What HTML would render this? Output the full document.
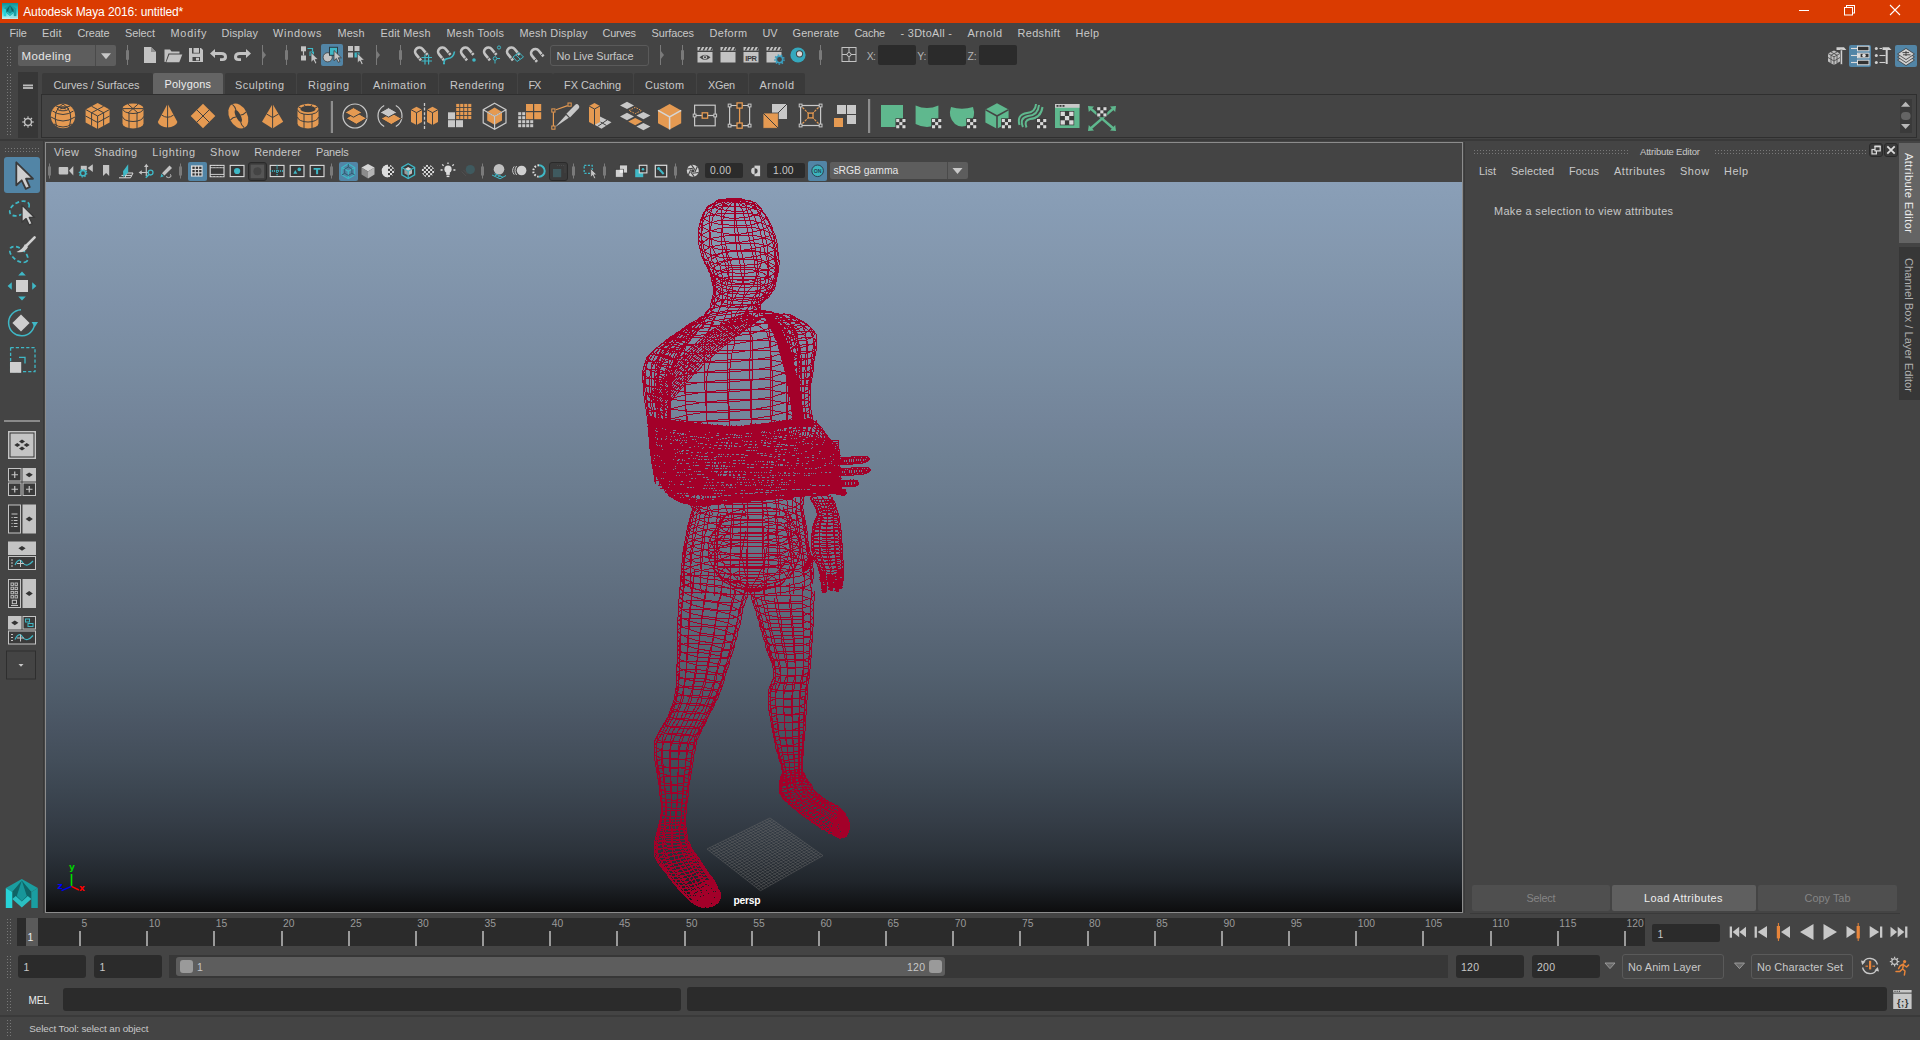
<!DOCTYPE html>
<html><head><meta charset="utf-8"><title>Autodesk Maya 2016: untitled*</title>
<style>
html,body{margin:0;padding:0;background:#444;overflow:hidden}
#app{position:relative;width:1920px;height:1040px;background:#444;overflow:hidden;font-family:"Liberation Sans",sans-serif}
#app div{position:absolute;box-sizing:border-box}
.t{position:absolute;white-space:pre;margin:0;padding:0}
#ov{position:absolute;left:0;top:0}
</style></head><body>
<div id="app">
<div style="left:0px;top:0px;width:1920px;height:23px;background:#da3b01;"></div>
<div style="left:6px;top:46px;width:5px;height:20px;background-image:radial-gradient(circle,#787878 0.6px,transparent 0.9px);background-size:3px 3px;"></div>
<div style="left:18px;top:45px;width:98px;height:21px;background:#5d5d5d;border-radius:2px;"></div>
<div style="left:95px;top:45px;width:1px;height:21px;background:#4a4a4a;"></div>
<div style="left:550px;top:45px;width:99px;height:21px;background:#444;border:1px solid #5a5a5a;border-radius:3px;"></div>
<div style="left:878px;top:45px;width:38px;height:20px;background:#2b2b2b;border-radius:2px;"></div>
<div style="left:928px;top:45px;width:38px;height:20px;background:#2b2b2b;border-radius:2px;"></div>
<div style="left:979px;top:45px;width:38px;height:20px;background:#2b2b2b;border-radius:2px;"></div>
<div style="left:321px;top:44px;width:22px;height:22px;background:#5285a6;border-radius:2px;"></div>
<div style="left:1849px;top:45px;width:22px;height:22px;background:#5285a6;border-radius:2px;"></div>
<div style="left:1895px;top:45px;width:22px;height:22px;background:#5285a6;border-radius:2px;"></div>
<div style="left:6px;top:73px;width:5px;height:63px;background-image:radial-gradient(circle,#787878 0.6px,transparent 0.9px);background-size:3px 3px;"></div>
<div style="left:18px;top:72px;width:20px;height:66px;background:#373737;"></div>
<div style="left:41.5px;top:73px;width:111.2px;height:22px;background:#3a3a3a;border-radius:2px 2px 0 0;"></div>
<div style="left:153px;top:73px;width:70px;height:22px;background:#646464;border-radius:2px 2px 0 0;"></div>
<div style="left:224.5px;top:73px;width:71.2px;height:22px;background:#3a3a3a;border-radius:2px 2px 0 0;"></div>
<div style="left:296.5px;top:73px;width:64.2px;height:22px;background:#3a3a3a;border-radius:2px 2px 0 0;"></div>
<div style="left:361.5px;top:73px;width:76.2px;height:22px;background:#3a3a3a;border-radius:2px 2px 0 0;"></div>
<div style="left:438.5px;top:73px;width:78.2px;height:22px;background:#3a3a3a;border-radius:2px 2px 0 0;"></div>
<div style="left:517.5px;top:73px;width:35.2px;height:22px;background:#3a3a3a;border-radius:2px 2px 0 0;"></div>
<div style="left:552.5px;top:73px;width:80.2px;height:22px;background:#3a3a3a;border-radius:2px 2px 0 0;"></div>
<div style="left:633.5px;top:73px;width:62.2px;height:22px;background:#3a3a3a;border-radius:2px 2px 0 0;"></div>
<div style="left:696.5px;top:73px;width:51.2px;height:22px;background:#3a3a3a;border-radius:2px 2px 0 0;"></div>
<div style="left:748.5px;top:73px;width:56.2px;height:22px;background:#3a3a3a;border-radius:2px 2px 0 0;"></div>
<div style="left:41px;top:94px;width:1876px;height:44px;background:#444444;border:1px solid #2f2f2f;"></div>
<div style="left:0px;top:139px;width:1920px;height:2px;background:#393939;"></div>
<div style="left:1900px;top:99px;width:12px;height:34px;background:#3a3a3a;"></div>
<div style="left:4px;top:147px;width:36px;height:6px;background-image:radial-gradient(circle,#787878 0.6px,transparent 0.9px);background-size:3px 3px;"></div>
<div style="left:4px;top:157px;width:36px;height:36px;background:#5285a6;border-radius:3px;"></div>
<div style="left:4px;top:420px;width:36px;height:2px;background:#8a8a8a;"></div>
<div style="left:43px;top:141px;width:1px;height:772px;background:#383838;"></div>
<div style="left:45px;top:142px;width:1418px;height:771px;background:#444444;border:1px solid #8c8c8c;"></div>
<div style="left:188px;top:162px;width:19px;height:19px;background:#5285a6;border-radius:2px;"></div>
<div style="left:339px;top:162px;width:19px;height:19px;background:#5285a6;border-radius:2px;"></div>
<div style="left:808px;top:161px;width:19px;height:20px;background:#5285a6;border-radius:2px;"></div>
<div style="left:248px;top:162px;width:19px;height:19px;background:#3a3a3a;border:1px solid #2a2a2a;border-radius:3px;"></div>
<div style="left:549px;top:162px;width:19px;height:19px;background:#3a3a3a;border:1px solid #2a2a2a;border-radius:3px;"></div>
<div style="left:705px;top:163px;width:38px;height:15px;background:#2b2b2b;border-radius:2px;"></div>
<div style="left:767px;top:163px;width:38px;height:15px;background:#2b2b2b;border-radius:2px;"></div>
<div style="left:830px;top:162px;width:138px;height:17px;background:#5d5d5d;border-radius:2px;"></div>
<div style="left:947px;top:162px;width:1px;height:17px;background:#4a4a4a;"></div>
<div style="left:46px;top:182px;width:1416px;height:730px;background:linear-gradient(to bottom,rgb(138,159,183) 0.00%,rgb(135,156,180) 4.17%,rgb(133,153,176) 8.33%,rgb(130,150,172) 12.50%,rgb(127,146,169) 16.67%,rgb(124,143,165) 20.83%,rgb(121,140,161) 25.00%,rgb(118,136,157) 29.17%,rgb(115,132,153) 33.33%,rgb(111,129,148) 37.50%,rgb(108,125,144) 41.67%,rgb(104,121,139) 45.83%,rgb(101,116,134) 50.00%,rgb(97,112,129) 54.17%,rgb(93,107,124) 58.33%,rgb(88,102,118) 62.50%,rgb(83,97,112) 66.67%,rgb(78,91,105) 70.83%,rgb(73,84,98) 75.00%,rgb(67,78,90) 79.17%,rgb(60,70,81) 83.33%,rgb(53,61,71) 87.50%,rgb(44,51,59) 91.67%,rgb(32,37,43) 95.83%,rgb(13,13,14) 100.00%);"></div>
<div style="left:1464px;top:142px;width:1px;height:771px;background:#3a3a3a;"></div>
<div style="left:1473px;top:149px;width:155px;height:6px;background-image:radial-gradient(circle,#787878 0.6px,transparent 0.9px);background-size:3px 3px;"></div>
<div style="left:1714px;top:149px;width:152px;height:6px;background-image:radial-gradient(circle,#787878 0.6px,transparent 0.9px);background-size:3px 3px;"></div>
<div style="left:1869px;top:143px;width:14px;height:14px;background:#3a3a3a;border:1px solid #2a2a2a;border-radius:3px;"></div>
<div style="left:1884px;top:143px;width:14px;height:14px;background:#3a3a3a;border:1px solid #2a2a2a;border-radius:3px;"></div>
<div style="left:1472px;top:885px;width:138px;height:26px;background:#4f4f4f;border-radius:2px;"></div>
<div style="left:1612px;top:885px;width:144px;height:26px;background:#5f5f5f;border-radius:2px;"></div>
<div style="left:1758px;top:885px;width:139px;height:26px;background:#4f4f4f;border-radius:2px;"></div>
<div style="left:1470px;top:913px;width:430px;height:1px;background:#3a3a3a;"></div>
<div style="left:1899px;top:143px;width:21px;height:100px;background:#646464;"></div>
<div style="left:1899px;top:247px;width:21px;height:153px;background:#373737;"></div>
<div style="left:6px;top:918px;width:5px;height:28px;background-image:radial-gradient(circle,#787878 0.6px,transparent 0.9px);background-size:3px 3px;"></div>
<div style="left:17px;top:918px;width:1628px;height:28px;background:#2b2b2b;"></div>
<div style="left:26px;top:918px;width:12px;height:28px;background:#5a5a5a;"></div>
<div style="left:79px;top:931px;width:2px;height:15px;background:#9a9a9a;"></div>
<div style="left:146px;top:931px;width:2px;height:15px;background:#9a9a9a;"></div>
<div style="left:213px;top:931px;width:2px;height:15px;background:#9a9a9a;"></div>
<div style="left:281px;top:931px;width:2px;height:15px;background:#9a9a9a;"></div>
<div style="left:348px;top:931px;width:2px;height:15px;background:#9a9a9a;"></div>
<div style="left:415px;top:931px;width:2px;height:15px;background:#9a9a9a;"></div>
<div style="left:482px;top:931px;width:2px;height:15px;background:#9a9a9a;"></div>
<div style="left:549px;top:931px;width:2px;height:15px;background:#9a9a9a;"></div>
<div style="left:616px;top:931px;width:2px;height:15px;background:#9a9a9a;"></div>
<div style="left:684px;top:931px;width:2px;height:15px;background:#9a9a9a;"></div>
<div style="left:751px;top:931px;width:2px;height:15px;background:#9a9a9a;"></div>
<div style="left:818px;top:931px;width:2px;height:15px;background:#9a9a9a;"></div>
<div style="left:885px;top:931px;width:2px;height:15px;background:#9a9a9a;"></div>
<div style="left:952px;top:931px;width:2px;height:15px;background:#9a9a9a;"></div>
<div style="left:1019px;top:931px;width:2px;height:15px;background:#9a9a9a;"></div>
<div style="left:1087px;top:931px;width:2px;height:15px;background:#9a9a9a;"></div>
<div style="left:1154px;top:931px;width:2px;height:15px;background:#9a9a9a;"></div>
<div style="left:1221px;top:931px;width:2px;height:15px;background:#9a9a9a;"></div>
<div style="left:1288px;top:931px;width:2px;height:15px;background:#9a9a9a;"></div>
<div style="left:1355px;top:931px;width:2px;height:15px;background:#9a9a9a;"></div>
<div style="left:1422px;top:931px;width:2px;height:15px;background:#9a9a9a;"></div>
<div style="left:1490px;top:931px;width:2px;height:15px;background:#9a9a9a;"></div>
<div style="left:1557px;top:931px;width:2px;height:15px;background:#9a9a9a;"></div>
<div style="left:1624px;top:931px;width:2px;height:15px;background:#9a9a9a;"></div>
<div style="left:1652px;top:924px;width:68px;height:18px;background:#2b2b2b;border-radius:2px;"></div>
<div style="left:6px;top:955px;width:5px;height:23px;background-image:radial-gradient(circle,#787878 0.6px,transparent 0.9px);background-size:3px 3px;"></div>
<div style="left:18px;top:955px;width:68px;height:23px;background:#2b2b2b;border-radius:3px;"></div>
<div style="left:94px;top:955px;width:68px;height:23px;background:#2b2b2b;border-radius:3px;"></div>
<div style="left:169px;top:955px;width:1279px;height:23px;background:#373737;"></div>
<div style="left:176px;top:957px;width:769px;height:19px;background:#5d5d5d;border-radius:3px;"></div>
<div style="left:180px;top:960px;width:13px;height:13px;background:#9a9a9a;border-radius:3px;"></div>
<div style="left:929px;top:960px;width:13px;height:13px;background:#9a9a9a;border-radius:3px;"></div>
<div style="left:1456px;top:955px;width:68px;height:23px;background:#2b2b2b;border-radius:3px;"></div>
<div style="left:1532px;top:955px;width:68px;height:23px;background:#2b2b2b;border-radius:3px;"></div>
<div style="left:1622px;top:954px;width:102px;height:25px;background:#444;border:1px solid #5a5a5a;border-radius:3px;"></div>
<div style="left:1751px;top:954px;width:102px;height:25px;background:#444;border:1px solid #5a5a5a;border-radius:3px;"></div>
<div style="left:6px;top:988px;width:5px;height:23px;background-image:radial-gradient(circle,#787878 0.6px,transparent 0.9px);background-size:3px 3px;"></div>
<div style="left:63px;top:988px;width:618px;height:23px;background:#2b2b2b;border-radius:3px;"></div>
<div style="left:687px;top:987px;width:1200px;height:24px;background:#2b2b2b;border-radius:3px;"></div>
<div style="left:0px;top:1015px;width:1920px;height:2px;background:#3a3a3a;"></div>
<div style="left:6px;top:1019px;width:5px;height:17px;background-image:radial-gradient(circle,#787878 0.6px,transparent 0.9px);background-size:3px 3px;"></div>
<svg id="ov" width="1920" height="1040" viewBox="0 0 1920 1040">
<line x1="127.5" y1="45" x2="127.5" y2="65" stroke="#7a7a7a" stroke-width="1" /><rect x="126.0" y="50" width="3" height="10" fill="#7a7a7a" rx="1" />
<line x1="286.5" y1="45" x2="286.5" y2="65" stroke="#7a7a7a" stroke-width="1" /><rect x="285.0" y="50" width="3" height="10" fill="#7a7a7a" rx="1" />
<line x1="400.5" y1="45" x2="400.5" y2="65" stroke="#7a7a7a" stroke-width="1" /><rect x="399.0" y="50" width="3" height="10" fill="#7a7a7a" rx="1" />
<line x1="682.5" y1="45" x2="682.5" y2="65" stroke="#7a7a7a" stroke-width="1" /><rect x="681.0" y="50" width="3" height="10" fill="#7a7a7a" rx="1" />
<line x1="820.5" y1="45" x2="820.5" y2="65" stroke="#7a7a7a" stroke-width="1" /><rect x="819.0" y="50" width="3" height="10" fill="#7a7a7a" rx="1" />
<line x1="262.5" y1="45" x2="262.5" y2="65" stroke="#7a7a7a" stroke-width="1" /><path d="M262.5 50.5 L266.0 55.0 L262.5 59.5 Z" fill="#7a7a7a" />
<line x1="376.5" y1="45" x2="376.5" y2="65" stroke="#7a7a7a" stroke-width="1" /><path d="M376.5 50.5 L380.0 55.0 L376.5 59.5 Z" fill="#7a7a7a" />
<line x1="660.5" y1="45" x2="660.5" y2="65" stroke="#7a7a7a" stroke-width="1" /><path d="M660.5 50.5 L664.0 55.0 L660.5 59.5 Z" fill="#7a7a7a" />
<path d="M144 47 L151 47 L156 52 L156 63 L144 63 Z" fill="#c3c3c3" /><path d="M151 47 L151 52 L156 52 Z" fill="#8e8e8e" />
<path d="M164.5 62 L164.5 49.5 L170 49.5 L171.5 51.5 L179.5 51.5 L179.5 53.5 L168.5 53.5 L165.6 62 Z" fill="#c3c3c3" /><path d="M166.3 62.3 L169.3 54.5 L182.3 54.5 L179.3 62.3 Z" fill="#c3c3c3" />
<path d="M189 48 L201 48 L203 50 L203 62 L189 62 Z" fill="#c3c3c3" /><rect x="192" y="48" width="8" height="5.5" fill="#444" /><rect x="193.5" y="48" width="5.5" height="4.8" fill="#c3c3c3" /><rect x="192.5" y="57" width="7.5" height="4" fill="#444" /><rect x="196" y="57.8" width="3" height="2.6" fill="#c3c3c3" />
<path transform="translate(210 47.5)" d="M0 6 L5 1.5 L5 4.5 L11 4.5 Q17 4.5 17 9.5 Q17 13.5 12.5 13.5 L10 13.5 L10 10.8 L12 10.8 Q14 10.8 14 9.2 Q14 7.5 11.5 7.5 L5 7.5 L5 10.5 Z" fill="#c3c3c3"/>
<path transform="translate(251 47.5) scale(-1 1)" d="M0 6 L5 1.5 L5 4.5 L11 4.5 Q17 4.5 17 9.5 Q17 13.5 12.5 13.5 L10 13.5 L10 10.8 L12 10.8 Q14 10.8 14 9.2 Q14 7.5 11.5 7.5 L5 7.5 L5 10.5 Z" fill="#c3c3c3"/>
<rect x="301" y="46.3" width="5" height="5" fill="#c3c3c3" /><rect x="301" y="55.5" width="5" height="5" fill="#c3c3c3" /><line x1="303.5" y1="51" x2="303.5" y2="55.5" stroke="#c3c3c3" stroke-width="1.2" /><path d="M307.5 48.5 L312.5 48.5 L312.5 51.5" fill="none" stroke="#3fb8c6" stroke-width="1.2" /><rect x="309.5" y="51.5" width="4.5" height="4.5" fill="#3fb8c6" /><path transform="translate(311 52.3) scale(1.0)" d="M0 0 L0 10.2 L2.4 8 L4.2 11.8 L6 11 L4.3 7.3 L7.4 7.3 Z" fill="#c3c3c3" stroke="#3a3a3a" stroke-width="0.8" stroke-linejoin="round"/>
<circle cx="327.7" cy="57.3" r="4.6" fill="#c3c3c3" stroke="#3a3a3a" stroke-width="0.8" /><rect x="329.5" y="47.3" width="8" height="8" fill="#3fb8c6" stroke="#2d3d44" stroke-width="1" /><path transform="translate(334 50.5) scale(1.0)" d="M0 0 L0 10.2 L2.4 8 L4.2 11.8 L6 11 L4.3 7.3 L7.4 7.3 Z" fill="#c3c3c3" stroke="#3a3a3a" stroke-width="0.8" stroke-linejoin="round"/>
<rect x="348" y="46" width="5" height="5" fill="#c3c3c3" /><rect x="354.5" y="46" width="5" height="5" fill="#c3c3c3" /><rect x="348" y="52.5" width="5" height="5" fill="#c3c3c3" /><rect x="354.5" y="52.5" width="5" height="5" fill="#3fb8c6" /><path transform="translate(357.3 53) scale(1.0)" d="M0 0 L0 10.2 L2.4 8 L4.2 11.8 L6 11 L4.3 7.3 L7.4 7.3 Z" fill="#c3c3c3" stroke="#3a3a3a" stroke-width="0.8" stroke-linejoin="round"/>
<g transform="translate(420 52.5) rotate(-40)"><path d="M-5.6 6.6 L-5.6 -1 A5.6 5.6 0 0 1 5.6 -1 L5.6 6.6 L2.9 6.6 L2.9 -1 A2.9 2.9 0 0 0 -2.9 -1 L-2.9 6.6 Z" fill="#c3c3c3"/><path d="M-5.8 4 L-2.6 4 M2.6 4 L5.8 4" stroke="#444" stroke-width="0.9"/></g><path d="M421.5 57.5 L432 57.5 M421.5 61 L432 61 M425 54.5 L425 64.5 M428.6 54.5 L428.6 64.5" fill="none" stroke="#3fb8c6" stroke-width="1.2" />
<g transform="translate(443 52.5) rotate(-40)"><path d="M-5.6 6.6 L-5.6 -1 A5.6 5.6 0 0 1 5.6 -1 L5.6 6.6 L2.9 6.6 L2.9 -1 A2.9 2.9 0 0 0 -2.9 -1 L-2.9 6.6 Z" fill="#c3c3c3"/><path d="M-5.8 4 L-2.6 4 M2.6 4 L5.8 4" stroke="#444" stroke-width="0.9"/></g><path d="M444 64 Q443.5 59 448 58.5 Q453.5 58 454.5 51.5" fill="none" stroke="#3fb8c6" stroke-width="1.6" /><circle cx="444" cy="63.5" r="1" fill="#3fb8c6" />
<g transform="translate(466 52.5) rotate(-40)"><path d="M-5.6 6.6 L-5.6 -1 A5.6 5.6 0 0 1 5.6 -1 L5.6 6.6 L2.9 6.6 L2.9 -1 A2.9 2.9 0 0 0 -2.9 -1 L-2.9 6.6 Z" fill="#c3c3c3"/><path d="M-5.8 4 L-2.6 4 M2.6 4 L5.8 4" stroke="#444" stroke-width="0.9"/></g><circle cx="474" cy="60" r="1.8" fill="#3fb8c6" />
<g transform="translate(489 52.5) rotate(-40)"><path d="M-5.6 6.6 L-5.6 -1 A5.6 5.6 0 0 1 5.6 -1 L5.6 6.6 L2.9 6.6 L2.9 -1 A2.9 2.9 0 0 0 -2.9 -1 L-2.9 6.6 Z" fill="#c3c3c3"/><path d="M-5.8 4 L-2.6 4 M2.6 4 L5.8 4" stroke="#444" stroke-width="0.9"/></g><circle cx="499" cy="47.5" r="1.6" fill="none" stroke="#3fb8c6" stroke-width="1" /><circle cx="495" cy="58.5" r="1.8" fill="none" stroke="#3fb8c6" stroke-width="1" /><path d="M495 60.5 L495 63.5 M497 58.5 L500 58.5" fill="none" stroke="#3fb8c6" stroke-width="1" />
<g transform="translate(512 52.5) rotate(-40)"><path d="M-5.6 6.6 L-5.6 -1 A5.6 5.6 0 0 1 5.6 -1 L5.6 6.6 L2.9 6.6 L2.9 -1 A2.9 2.9 0 0 0 -2.9 -1 L-2.9 6.6 Z" fill="#c3c3c3"/><path d="M-5.8 4 L-2.6 4 M2.6 4 L5.8 4" stroke="#444" stroke-width="0.9"/></g><path d="M513 57 L519 52.5 L523.5 57 L517 61.5 Z M515.7 54.8 L520.3 59.3" fill="none" stroke="#3fb8c6" stroke-width="1" />
<g transform="translate(536 54) rotate(-40)"><path d="M-5.6 6.6 L-5.6 -1 A5.6 5.6 0 0 1 5.6 -1 L5.6 6.6 L2.9 6.6 L2.9 -1 A2.9 2.9 0 0 0 -2.9 -1 L-2.9 6.6 Z" fill="#c3c3c3"/><path d="M-5.8 4 L-2.6 4 M2.6 4 L5.8 4" stroke="#444" stroke-width="0.9"/></g>
<rect x="697.5" y="52" width="15" height="10.5" fill="#c3c3c3" /><path d="M697.5 47 L712.5 47 L712.5 50.6 L697.5 50.6 Z" fill="#c3c3c3" /><path d="M698.7 50.6 L700.5 47 L702.1 47 L700.3 50.6 Z" fill="#444" /><path d="M702.5 50.6 L704.3 47 L705.9 47 L704.0999999999999 50.6 Z" fill="#444" /><path d="M706.3000000000001 50.6 L708.1 47 L709.7 47 L707.9 50.6 Z" fill="#444" /><path d="M710.1 50.6 L711.9 47 L713.5 47 L711.6999999999999 50.6 Z" fill="#444" /><path d="M699.5 57.3 Q705 52 710.5 57.3 Q705 62.5 699.5 57.3 Z" fill="#444" /><circle cx="705" cy="57.3" r="2.1" fill="#c3c3c3" /><circle cx="705" cy="57.3" r="1" fill="#444" />
<rect x="720.5" y="52" width="15" height="10.5" fill="#c3c3c3" /><path d="M720.5 47 L735.5 47 L735.5 50.6 L720.5 50.6 Z" fill="#c3c3c3" /><path d="M721.7 50.6 L723.5 47 L725.1 47 L723.3 50.6 Z" fill="#444" /><path d="M725.5 50.6 L727.3 47 L728.9 47 L727.0999999999999 50.6 Z" fill="#444" /><path d="M729.3000000000001 50.6 L731.1 47 L732.7 47 L730.9 50.6 Z" fill="#444" /><path d="M733.1 50.6 L734.9 47 L736.5 47 L734.6999999999999 50.6 Z" fill="#444" />
<rect x="743.5" y="52" width="15" height="10.5" fill="#c3c3c3" /><path d="M743.5 47 L758.5 47 L758.5 50.6 L743.5 50.6 Z" fill="#c3c3c3" /><path d="M744.7 50.6 L746.5 47 L748.1 47 L746.3 50.6 Z" fill="#444" /><path d="M748.5 50.6 L750.3 47 L751.9 47 L750.0999999999999 50.6 Z" fill="#444" /><path d="M752.3000000000001 50.6 L754.1 47 L755.7 47 L753.9 50.6 Z" fill="#444" /><path d="M756.1 50.6 L757.9 47 L759.5 47 L757.6999999999999 50.6 Z" fill="#444" />
<rect x="766.5" y="52" width="15" height="10.5" fill="#c3c3c3" /><path d="M766.5 47 L781.5 47 L781.5 50.6 L766.5 50.6 Z" fill="#c3c3c3" /><path d="M767.7 50.6 L769.5 47 L771.1 47 L769.3 50.6 Z" fill="#444" /><path d="M771.5 50.6 L773.3 47 L774.9 47 L773.0999999999999 50.6 Z" fill="#444" /><path d="M775.3000000000001 50.6 L777.1 47 L778.7 47 L776.9 50.6 Z" fill="#444" /><path d="M779.1 50.6 L780.9 47 L782.5 47 L780.6999999999999 50.6 Z" fill="#444" /><circle cx="779.5" cy="59.5" r="3.2" fill="#444" stroke="#3a9fc0" stroke-width="1.6" /><circle cx="779.5" cy="59.5" r="4.6" fill="none" stroke="#3a9fc0" stroke-width="1.4" stroke-dasharray="1.6 1.6"/>
<circle cx="798" cy="55" r="7.6" fill="#35a8bd" /><circle cx="799.5" cy="53.8" r="3.6" fill="#444" /><circle cx="799.5" cy="53.8" r="2.6" fill="#d8d8d8" />
<rect x="842" y="47.5" width="14" height="14" fill="none" stroke="#c3c3c3" stroke-width="1" /><circle cx="849" cy="54.5" r="2" fill="none" stroke="#c3c3c3" stroke-width="1" /><path d="M849 47.5 L849 52.5 M849 56.5 L849 61.5 M842 54.5 L847 54.5 M851 54.5 L856 54.5" fill="none" stroke="#c3c3c3" stroke-width="1" />
<path d="M101 53.3 L111 53.3 L106 59.2 Z" fill="#c8c8c8" />
<path d="M952.5 168 L962.5 168 L957.5 174 Z" fill="#c8c8c8" />
<rect x="23" y="84.5" width="10" height="1.8" fill="#bdbdbd" /><rect x="23" y="87.1" width="10" height="1.8" fill="#bdbdbd" />
<circle cx="28" cy="122" r="3.4" fill="none" stroke="#c8c8c8" stroke-width="1.3" /><line x1="32.2" y1="122.0" x2="33.6" y2="122.0" stroke="#c8c8c8" stroke-width="1.4" /><line x1="30.97" y1="124.97" x2="31.96" y2="125.96" stroke="#c8c8c8" stroke-width="1.4" /><line x1="28.0" y1="126.2" x2="28.0" y2="127.6" stroke="#c8c8c8" stroke-width="1.4" /><line x1="25.03" y1="124.97" x2="24.04" y2="125.96" stroke="#c8c8c8" stroke-width="1.4" /><line x1="23.8" y1="122.0" x2="22.4" y2="122.0" stroke="#c8c8c8" stroke-width="1.4" /><line x1="25.03" y1="119.03" x2="24.04" y2="118.04" stroke="#c8c8c8" stroke-width="1.4" /><line x1="28.0" y1="117.8" x2="28.0" y2="116.4" stroke="#c8c8c8" stroke-width="1.4" /><line x1="30.97" y1="119.03" x2="31.96" y2="118.04" stroke="#c8c8c8" stroke-width="1.4" />
<rect x="330.8" y="101" width="2.2" height="32" fill="#8e8e8e" /><rect x="868" y="99" width="2.2" height="34" fill="#8e8e8e" />
<path d="M1901 106.8 L1905.6 101.8 L1910.2 106.8 Z" fill="#b8b8b8" /><rect x="1901" y="112" width="9.6" height="8" fill="#646464" rx="4" /><path d="M1901 124 L1905.6 129 L1910.2 124 Z" fill="#b8b8b8" />
<circle cx="63" cy="116" r="12.2" fill="#e59a52" /><g fill="none" stroke="#3f3f3f" stroke-width="1"><ellipse cx="63" cy="108.8" rx="5.6" ry="2"/><path d="M52.5 111 Q63 118 73.5 111 M51 117 Q63 125 75 117 M54 124 Q63 130 72 124"/><path d="M63 104 Q52 110 56.5 126.5 M63 104 Q74 110 69.5 126.5 M56 106 L66 109 M70 106 L60 109"/></g>
<path d="M97.6 103.0 L109.6 109.5 L109.6 122.5 L97.6 129.0 L85.6 122.5 L85.6 109.5 Z" fill="#e59a52" /><path d="M85.6 109.5 L97.6 116 L109.6 109.5 M97.6 116 L97.6 129.0" fill="none" stroke="#3f3f3f" stroke-width="1" /><path d="M91.6 106.25 L103.6 112.75 L103.6 125.75 M103.6 106.25 L91.6 112.75 L91.6 125.75 M85.6 116 L97.6 122.5 L109.6 116" fill="none" stroke="#3f3f3f" stroke-width="1" />
<path d="M122.5 108.5 L122.5 123.5 A10.5 5 0 0 0 143.5 123.5 L143.5 108.5 A10.5 5 0 0 0 122.5 108.5 Z" fill="#e59a52" /><g fill="none" stroke="#3f3f3f" stroke-width="1"><path d="M122.5 108.5 A10.5 5 0 0 0 143.5 108.5 M122.5 116.5 A10.5 5 0 0 0 143.5 116.5 M122.5 108.6 L143.5 108.6 M128 104.2 L138 113 M138 104.2 L128 113 M129 113 L129 128 M137 113 L137 128"/></g>
<path d="M167.6 103.8 L157.79999999999998 122 A9.9 6.3 0 0 0 177.4 122 Z" fill="#e59a52" /><path d="M167.6 103.8 L167.6 128.4 M161.6 115 Q167.6 119.5 173.6 115" fill="none" stroke="#3f3f3f" stroke-width="1" />
<path d="M190.7 116 L203 103.7 L215.3 116 L203 128.3 Z" fill="#e59a52" /><path d="M196.8 109.8 L209.2 122.2 M209.2 109.8 L196.8 122.2" fill="none" stroke="#3f3f3f" stroke-width="1" />
<g transform="translate(238.3 116) rotate(-27)"><ellipse rx="9" ry="13.2" fill="#e59a52"/><ellipse rx="2.4" ry="6.6" fill="#3f3f3f"/><path d="M-9 0 Q-5 -1.5 -2.4 0 M2.4 0 Q5 1.5 9 0 M0 -13 Q1.6 -9 0.6 -6.4 M0 13 Q-1.6 9 -0.6 6.4" fill="none" stroke="#3f3f3f" stroke-width="1"/></g>
<path d="M272.6 104 L262.0 121.8 L272.6 128.6 L283.20000000000005 121.8 Z" fill="#e59a52" /><path d="M272.6 104 L272.6 128.6 M266.6 114 L272.6 117.5 L278.6 114" fill="none" stroke="#3f3f3f" stroke-width="1" />
<path d="M297.5 109 L297.5 123.5 A10.5 5 0 0 0 318.5 123.5 L318.5 109 A10.5 5.2 0 0 0 297.5 109 Z" fill="#e59a52" /><ellipse cx="308" cy="109" rx="7.6" ry="3.3" fill="#3f3f3f"/><g fill="none" stroke="#3f3f3f" stroke-width="1"><path d="M297.5 109.5 A10.5 5 0 0 0 318.5 109.5 M297.5 117 A10.5 5 0 0 0 318.5 117 M304 114 L304 128 M312 114 L312 128 M304 104.5 L305 106 M312 104.5 L311 106 M298.5 107 L301 108 M317.5 107 L315 108"/></g>
<circle cx="355" cy="116" r="12" fill="none" stroke="#c8c8c8" stroke-width="1.2" /><path d="M346.0 118.3 L356.3 112.3 L366.6 118.3 L356.3 124.3 Z" fill="#e59a52" stroke="#3f3f3f" stroke-width="1" /><path d="M344.9 112.4 L353.5 107.60000000000001 L362.1 112.4 L353.5 117.2 Z" fill="#e59a52" stroke="#3f3f3f" stroke-width="1" />
<path d="M384.2 105.5 A12 12 0 0 0 384.2 126.5 M395.8 105.5 A12 12 0 0 1 395.8 126.5" fill="none" stroke="#c8c8c8" stroke-width="1.2" /><path d="M381.0 118.6 L391.3 112.6 L401.6 118.6 L391.3 124.6 Z" fill="#e59a52" stroke="#3f3f3f" stroke-width="1" /><path d="M379.9 112.4 L388.5 107.60000000000001 L397.1 112.4 L388.5 117.2 Z" fill="#c8c8c8" stroke="#3f3f3f" stroke-width="1" />
<path d="M411 109.7 L416.5 106.7 L422 109.7 L422 122 L416.5 125 L411 122 Z" fill="#e59a52" /><path d="M411 109.7 L416.5 112.7 L422 109.7 M416.5 112.7 L416.5 125" fill="none" stroke="#3f3f3f" stroke-width="1" /><path d="M427 109.7 L432.5 106.7 L438 109.7 L438 122 L432.5 125 L427 122 Z" fill="#e59a52" /><path d="M427 109.7 L432.5 112.7 L438 109.7 M432.5 112.7 L432.5 125" fill="none" stroke="#3f3f3f" stroke-width="1" /><line x1="424.5" y1="103" x2="424.5" y2="129" stroke="#c8c8c8" stroke-width="1.3" stroke-dasharray="3 1.6"/>
<rect x="448" y="112.3" width="7" height="7" fill="#c8c8c8" /><rect x="448" y="120.2" width="7" height="7" fill="#c8c8c8" /><rect x="456" y="120.2" width="7" height="7" fill="#c8c8c8" /><rect x="456.2" y="103.9" width="3.1" height="3.1" fill="#e59a52" /><rect x="456.2" y="107.9" width="3.1" height="3.1" fill="#e59a52" /><rect x="456.2" y="111.9" width="3.1" height="3.1" fill="#e59a52" /><rect x="456.2" y="115.9" width="3.1" height="3.1" fill="#e59a52" /><rect x="460.2" y="103.9" width="3.1" height="3.1" fill="#e59a52" /><rect x="460.2" y="107.9" width="3.1" height="3.1" fill="#e59a52" /><rect x="460.2" y="111.9" width="3.1" height="3.1" fill="#e59a52" /><rect x="460.2" y="115.9" width="3.1" height="3.1" fill="#e59a52" /><rect x="464.2" y="103.9" width="3.1" height="3.1" fill="#e59a52" /><rect x="464.2" y="107.9" width="3.1" height="3.1" fill="#e59a52" /><rect x="464.2" y="111.9" width="3.1" height="3.1" fill="#e59a52" /><rect x="464.2" y="115.9" width="3.1" height="3.1" fill="#e59a52" /><rect x="468.2" y="103.9" width="3.1" height="3.1" fill="#e59a52" /><rect x="468.2" y="107.9" width="3.1" height="3.1" fill="#e59a52" /><rect x="468.2" y="111.9" width="3.1" height="3.1" fill="#e59a52" /><rect x="468.2" y="115.9" width="3.1" height="3.1" fill="#e59a52" />
<path d="M494.6 107.60000000000001 L502.0 111.9 L502.0 120.5 L494.6 124.8 L487.20000000000005 120.5 L487.20000000000005 111.9 Z" fill="#e59a52" /><path d="M487.20000000000005 111.9 L494.6 116.2 L502.0 111.9 M494.6 116.2 L494.6 124.8" fill="none" stroke="#3f3f3f" stroke-width="1" /><path d="M494.6 103.3 L506 109.7 L506 122.8 L494.6 129.2 L483.2 122.8 L483.2 109.7 Z M483.2 109.7 L494.6 116.2 L506 109.7 M494.6 116.2 L494.6 129.2" fill="none" stroke="#c8c8c8" stroke-width="1.2" />
<rect x="518.2" y="112.2" width="3" height="3" fill="#c8c8c8" /><rect x="518.2" y="116.2" width="3" height="3" fill="#c8c8c8" /><rect x="518.2" y="120.2" width="3" height="3" fill="#c8c8c8" /><rect x="518.2" y="124.2" width="3" height="3" fill="#c8c8c8" /><rect x="522.2" y="112.2" width="3" height="3" fill="#c8c8c8" /><rect x="522.2" y="116.2" width="3" height="3" fill="#c8c8c8" /><rect x="522.2" y="120.2" width="3" height="3" fill="#c8c8c8" /><rect x="522.2" y="124.2" width="3" height="3" fill="#c8c8c8" /><rect x="526.2" y="120.2" width="3" height="3" fill="#c8c8c8" /><rect x="526.2" y="124.2" width="3" height="3" fill="#c8c8c8" /><rect x="530.2" y="120.2" width="3" height="3" fill="#c8c8c8" /><rect x="530.2" y="124.2" width="3" height="3" fill="#c8c8c8" /><rect x="526" y="104" width="7" height="7" fill="#e59a52" /><rect x="534.2" y="104" width="7" height="7" fill="#e59a52" /><rect x="526" y="112.2" width="7" height="7" fill="#e59a52" /><rect x="534.2" y="112.2" width="7" height="7" fill="#e59a52" />
<path d="M577.6 104.2 Q580.4 106.4 578.6 108.6 L570 117.4 L566.4 113.8 L575 105 Q576.3 103.7 577.6 104.2 Z" fill="#c8c8c8" /><path d="M566 115 L568.8 117.8 L555 127.3 Z" fill="#c8c8c8" /><path d="M553.4 112.2 L553.4 126 M556 109.7 L567.6 105.6" fill="none" stroke="#e59a52" stroke-width="1.2" /><rect x="551.8" y="108.9" width="3.2" height="3.2" fill="#444" stroke="#e59a52" stroke-width="1" /><rect x="568.0" y="103.0" width="3.2" height="3.2" fill="#444" stroke="#e59a52" stroke-width="1" /><rect x="551.8" y="126.0" width="3.2" height="3.2" fill="#444" stroke="#e59a52" stroke-width="1" />
<path d="M600 116.5 L611.5 122.3 L601.5 128.8 L594.5 124.8 Z" fill="#c8c8c8" /><path d="M597.5 126.5 L607 120 M600.5 122 L606.5 125.5" fill="none" stroke="#3f3f3f" stroke-width="1" /><path d="M589 106 L594.5 103 L600 106 L600 122 L594.5 125 L589 122 Z" fill="#e59a52" /><path d="M589 106 L594.5 109 L600 106 M594.5 109 L594.5 125" fill="none" stroke="#3f3f3f" stroke-width="1" />
<path d="M620 105.4 L627 101.7 L634 105.4 L627 109.10000000000001 Z" fill="#c8c8c8" /><path d="M620 116.5 L627 112.8 L634 116.5 L627 120.2 Z" fill="#c8c8c8" /><path d="M636.4 115.6 L643.4 111.89999999999999 L650.4 115.6 L643.4 119.3 Z" fill="#c8c8c8" /><path d="M636.4 126.6 L643.4 122.89999999999999 L650.4 126.6 L643.4 130.29999999999998 Z" fill="#c8c8c8" /><path d="M628.2 121.6 L635.2 117.89999999999999 L642.2 121.6 L635.2 125.3 Z" fill="#e59a52" /><path d="M629.0 110.5 L635.2 107.3 L641.4000000000001 110.5 L635.2 113.7 Z" fill="none" stroke="#e59a52" stroke-width="1" stroke-dasharray="1.6 1.2"/>
<path d="M669.6 104.0 L681.2 110.39999999999999 L681.2 123.2 L669.6 129.6 L658.0 123.2 L658.0 110.39999999999999 Z" fill="#e59a52" /><path d="M658 110.4 L669.6 116.8 L681.2 110.4 M669.6 116.8 L669.6 129.4" fill="none" stroke="#d6d6d6" stroke-width="1.5" />
<rect x="694.6" y="105.2" width="20.6" height="20.6" fill="none" stroke="#c8c8c8" stroke-width="1.2" /><line x1="694.6" y1="115.5" x2="715.2" y2="115.5" stroke="#c8c8c8" stroke-width="1.2" /><rect x="693.2" y="114.1" width="2.8" height="2.8" fill="#444" stroke="#c8c8c8" stroke-width="1" /><rect x="713.8000000000001" y="114.1" width="2.8" height="2.8" fill="#444" stroke="#c8c8c8" stroke-width="1" /><rect x="702.2" y="112.8" width="5.4" height="5.4" fill="#3a3a3a" stroke="#e59a52" stroke-width="1.3" />
<path d="M729.6 105.5 L749.6 105.5 M729.6 125.6 L749.6 125.6 M729.6 105.5 L729.6 125.6 M749.6 105.5 L749.6 125.6" fill="none" stroke="#c8c8c8" stroke-width="1.2" /><line x1="739.6" y1="105.5" x2="739.6" y2="125.6" stroke="#e59a52" stroke-width="1.3" /><rect x="728.2" y="104.1" width="2.8" height="2.8" fill="#444" stroke="#c8c8c8" stroke-width="1" /><rect x="748.2" y="104.1" width="2.8" height="2.8" fill="#444" stroke="#c8c8c8" stroke-width="1" /><rect x="728.2" y="124.19999999999999" width="2.8" height="2.8" fill="#444" stroke="#c8c8c8" stroke-width="1" /><rect x="748.2" y="124.19999999999999" width="2.8" height="2.8" fill="#444" stroke="#c8c8c8" stroke-width="1" /><rect x="737" y="102.9" width="5.2" height="5.2" fill="#3a3a3a" stroke="#e59a52" stroke-width="1.3" /><rect x="737" y="123" width="5.2" height="5.2" fill="#3a3a3a" stroke="#e59a52" stroke-width="1.3" />
<rect x="772" y="104" width="15" height="15" fill="#c8c8c8" /><line x1="787" y1="104" x2="778" y2="113" stroke="#3f3f3f" stroke-width="1" /><rect x="763" y="113" width="15.3" height="15.3" fill="#e59a52" stroke="#444" stroke-width="0.8" /><line x1="763" y1="113" x2="778" y2="128" stroke="#3f3f3f" stroke-width="1" />
<rect x="800.6" y="105.5" width="20" height="20" fill="none" stroke="#c8c8c8" stroke-width="1.2" /><path d="M802.5 107.5 L808 113 M818.5 107.5 L813 113 M802.5 123.5 L808 118 M818.5 123.5 L813 118" fill="none" stroke="#e59a52" stroke-width="1.2" stroke-dasharray="2.4 1"/><rect x="799.2" y="104.1" width="2.8" height="2.8" fill="#444" stroke="#c8c8c8" stroke-width="1" /><rect x="819.2" y="104.1" width="2.8" height="2.8" fill="#444" stroke="#c8c8c8" stroke-width="1" /><rect x="799.2" y="124.1" width="2.8" height="2.8" fill="#444" stroke="#c8c8c8" stroke-width="1" /><rect x="819.2" y="124.1" width="2.8" height="2.8" fill="#444" stroke="#c8c8c8" stroke-width="1" /><rect x="808.2" y="113.1" width="4.8" height="4.8" fill="#3a3a3a" stroke="#e59a52" stroke-width="1.3" />
<rect x="837" y="105" width="9" height="9" fill="#c8c8c8" /><rect x="847" y="105" width="9" height="9" fill="#c8c8c8" /><rect x="847" y="115" width="9" height="9" fill="#c8c8c8" /><rect x="834" y="118" width="9" height="9" fill="#e59a52" />
<rect x="881" y="105" width="22" height="22" fill="#5fb88e" /><rect x="895.5" y="118.3" width="10.700000000000001" height="10.700000000000001" fill="#3a3a3a" /><rect x="896.2" y="119.0" width="3.1" height="3.1" fill="#d8d8d8" /><rect x="896.2" y="125.2" width="3.1" height="3.1" fill="#d8d8d8" /><rect x="899.3" y="122.1" width="3.1" height="3.1" fill="#d8d8d8" /><rect x="902.4" y="119.0" width="3.1" height="3.1" fill="#d8d8d8" /><rect x="902.4" y="125.2" width="3.1" height="3.1" fill="#d8d8d8" />
<path d="M915.6 105.5 Q927 110.5 938.4 105.5 L938.4 124 Q927 130 915.6 124 Z" fill="#5fb88e" /><rect x="931.3" y="118.3" width="10.700000000000001" height="10.700000000000001" fill="#3a3a3a" /><rect x="932.0" y="119.0" width="3.1" height="3.1" fill="#d8d8d8" /><rect x="932.0" y="125.2" width="3.1" height="3.1" fill="#d8d8d8" /><rect x="935.1" y="122.1" width="3.1" height="3.1" fill="#d8d8d8" /><rect x="938.2" y="119.0" width="3.1" height="3.1" fill="#d8d8d8" /><rect x="938.2" y="125.2" width="3.1" height="3.1" fill="#d8d8d8" />
<path d="M951 107 Q962 110.5 973 107 Q976.5 117 969 124 Q962 129 955 124 Q947.5 117 951 107 Z" fill="#5fb88e" /><rect x="966.3" y="118.3" width="10.700000000000001" height="10.700000000000001" fill="#3a3a3a" /><rect x="967.0" y="119.0" width="3.1" height="3.1" fill="#d8d8d8" /><rect x="967.0" y="125.2" width="3.1" height="3.1" fill="#d8d8d8" /><rect x="970.1" y="122.1" width="3.1" height="3.1" fill="#d8d8d8" /><rect x="973.2" y="119.0" width="3.1" height="3.1" fill="#d8d8d8" /><rect x="973.2" y="125.2" width="3.1" height="3.1" fill="#d8d8d8" />
<path d="M997 103.2 L1008.6 109.6 L1008.6 122.4 L997 128.8 L985.4 122.4 L985.4 109.6 Z" fill="#5fb88e" /><path d="M985.4 109.6 L997 116 L1008.6 109.6 M997 116 L997 129" fill="none" stroke="#444" stroke-width="1.6" /><rect x="1001.0999999999999" y="118.3" width="10.700000000000001" height="10.700000000000001" fill="#3a3a3a" /><rect x="1001.8" y="119.0" width="3.1" height="3.1" fill="#d8d8d8" /><rect x="1001.8" y="125.2" width="3.1" height="3.1" fill="#d8d8d8" /><rect x="1004.9" y="122.1" width="3.1" height="3.1" fill="#d8d8d8" /><rect x="1008.0" y="119.0" width="3.1" height="3.1" fill="#d8d8d8" /><rect x="1008.0" y="125.2" width="3.1" height="3.1" fill="#d8d8d8" />
<path d="M1023 127 Q1019 118 1028 116 Q1038 115.5 1039 105" fill="none" stroke="#5fb88e" stroke-width="2" /><path d="M1026.5 127.5 Q1023.5 120.5 1030 119 Q1041 118 1042.5 107" fill="none" stroke="#5fb88e" stroke-width="2" /><path d="M1019.5 125 Q1016.5 114.5 1027 113 Q1035.5 112 1036 104" fill="none" stroke="#5fb88e" stroke-width="2" /><rect x="1036.3" y="118.3" width="10.700000000000001" height="10.700000000000001" fill="#3a3a3a" /><rect x="1037.0" y="119.0" width="3.1" height="3.1" fill="#d8d8d8" /><rect x="1037.0" y="125.2" width="3.1" height="3.1" fill="#d8d8d8" /><rect x="1040.1" y="122.1" width="3.1" height="3.1" fill="#d8d8d8" /><rect x="1043.2" y="119.0" width="3.1" height="3.1" fill="#d8d8d8" /><rect x="1043.2" y="125.2" width="3.1" height="3.1" fill="#d8d8d8" />
<rect x="1055" y="104" width="24.5" height="24" fill="#5fb88e" /><rect x="1055" y="104" width="24.5" height="3.8" fill="#c8c8c8" /><rect x="1056.5" y="105" width="2" height="1.8" fill="#3a3a3a" /><rect x="1059.5" y="105" width="2" height="1.8" fill="#3a3a3a" /><rect x="1062.5" y="105" width="2" height="1.8" fill="#3a3a3a" /><rect x="1059.8999999999999" y="111.0" width="14.299999999999999" height="14.299999999999999" fill="#3a3a3a" /><rect x="1060.6" y="111.7" width="4.3" height="4.3" fill="#d8d8d8" /><rect x="1060.6" y="120.3" width="4.3" height="4.3" fill="#d8d8d8" /><rect x="1064.9" y="116.0" width="4.3" height="4.3" fill="#d8d8d8" /><rect x="1069.2" y="111.7" width="4.3" height="4.3" fill="#d8d8d8" /><rect x="1069.2" y="120.3" width="4.3" height="4.3" fill="#d8d8d8" />
<path d="M1090 108 L1102 118.5 L1114 108 M1090 129 L1102 118.5 L1114 129" fill="none" stroke="#5fb88e" stroke-width="2.4" /><path d="M1088 106 L1094 106.5 L1088.8 112 Z M1116 106 L1110 106.5 L1115.2 112 Z M1088 131 L1094 130.5 L1088.8 125 Z M1116 131 L1110 130.5 L1115.2 125 Z" fill="#5fb88e" /><rect x="1096.5" y="106.5" width="10.700000000000001" height="10.700000000000001" fill="#3a3a3a" /><rect x="1097.2" y="107.2" width="3.1" height="3.1" fill="#d8d8d8" /><rect x="1097.2" y="113.4" width="3.1" height="3.1" fill="#d8d8d8" /><rect x="1100.3" y="110.3" width="3.1" height="3.1" fill="#d8d8d8" /><rect x="1103.4" y="107.2" width="3.1" height="3.1" fill="#d8d8d8" /><rect x="1103.4" y="113.4" width="3.1" height="3.1" fill="#d8d8d8" />
<line x1="49.5" y1="163.5" x2="49.5" y2="178.5" stroke="#7a7a7a" stroke-width="1" /><rect x="48.0" y="166.2" width="3" height="9.6" fill="#7a7a7a" rx="1" />
<line x1="180.5" y1="163.5" x2="180.5" y2="178.5" stroke="#7a7a7a" stroke-width="1" /><rect x="179.0" y="166.2" width="3" height="9.6" fill="#7a7a7a" rx="1" />
<line x1="331.5" y1="163.5" x2="331.5" y2="178.5" stroke="#7a7a7a" stroke-width="1" /><rect x="330.0" y="166.2" width="3" height="9.6" fill="#7a7a7a" rx="1" />
<line x1="482.5" y1="163.5" x2="482.5" y2="178.5" stroke="#7a7a7a" stroke-width="1" /><rect x="481.0" y="166.2" width="3" height="9.6" fill="#7a7a7a" rx="1" />
<line x1="573.5" y1="163.5" x2="573.5" y2="178.5" stroke="#7a7a7a" stroke-width="1" /><rect x="572.0" y="166.2" width="3" height="9.6" fill="#7a7a7a" rx="1" />
<line x1="604.5" y1="163.5" x2="604.5" y2="178.5" stroke="#7a7a7a" stroke-width="1" /><rect x="603.0" y="166.2" width="3" height="9.6" fill="#7a7a7a" rx="1" />
<line x1="675.5" y1="163.5" x2="675.5" y2="178.5" stroke="#7a7a7a" stroke-width="1" /><rect x="674.0" y="166.2" width="3" height="9.6" fill="#7a7a7a" rx="1" />
<rect x="58.7" y="167" width="9.5" height="7.4" fill="#c3c3c3" rx="0.8" /><path d="M69 170.7 L73.3 166 L73.3 175.4 Z" fill="#c3c3c3" />
<rect x="80.8" y="165.8" width="6" height="4.6" fill="#c3c3c3" /><path d="M87.6 168 L92.8 164.2 L92.8 172 Z" fill="#c3c3c3" /><circle cx="83" cy="173.2" r="2.6" fill="#444" stroke="#3fb8c6" stroke-width="1.5" /><circle cx="83" cy="173.2" r="3.7" fill="none" stroke="#3fb8c6" stroke-width="1.3" stroke-dasharray="1.3 1.6"/>
<path d="M103 165 L109.2 165 L109.2 176 L106.1 173 L103 176 Z" fill="#c3c3c3" />
<path d="M119 177.8 L130.5 177.8 L133 173 L125 173 M121.5 175.4 L131.6 175.4 M126.5 173 L125 177.8" fill="none" stroke="#dcdcdc" stroke-width="1" /><path d="M123 171.3 L128.2 164.3 L128.2 172.2 L123.4 177.3 Z" fill="#3fb8c6" />
<path d="M146.3 176 L146.3 166 M140.5 172.5 L148 172.5" fill="none" stroke="#c3c3c3" stroke-width="1.2" /><path d="M146.3 163.8 L148.6 167 L144 167 Z M138.6 172.5 L141.8 170.2 L141.8 174.8 Z" fill="#c3c3c3" /><circle cx="150.6" cy="172.6" r="2.4" fill="none" stroke="#3fb8c6" stroke-width="1.3" /><line x1="149" y1="174.4" x2="145.8" y2="177.8" stroke="#3fb8c6" stroke-width="1.6" />
<path d="M169.5 165.6 L172 168 L164.4 175.6 L162 173.2 Z" fill="#c3c3c3" /><path d="M161.4 173.8 L163.8 176.2 L160.4 177.4 Z" fill="#3fb8c6" /><path d="M166 176.6 Q168.5 178.6 170.8 176.8 Q171.6 175 170 174.4" fill="none" stroke="#c3c3c3" stroke-width="1" />
<rect x="191" y="165.4" width="11.6" height="11.2" fill="#dcdcdc" /><rect x="192.4" y="166.7" width="2.3" height="2.2" fill="#333" /><rect x="192.4" y="170.0" width="2.3" height="2.2" fill="#333" /><rect x="192.4" y="173.29999999999998" width="2.3" height="2.2" fill="#333" /><rect x="195.8" y="166.7" width="2.3" height="2.2" fill="#333" /><rect x="195.8" y="170.0" width="2.3" height="2.2" fill="#333" /><rect x="195.8" y="173.29999999999998" width="2.3" height="2.2" fill="#333" /><rect x="199.20000000000002" y="166.7" width="2.3" height="2.2" fill="#333" /><rect x="199.20000000000002" y="170.0" width="2.3" height="2.2" fill="#333" /><rect x="199.20000000000002" y="173.29999999999998" width="2.3" height="2.2" fill="#333" />
<rect x="210.2" y="165.4" width="13.8" height="11.3" fill="#3a3a3a" stroke="#dcdcdc" stroke-width="1.1" /><line x1="210.2" y1="167.7" x2="224" y2="167.7" stroke="#dcdcdc" stroke-width="0.9" /><line x1="210.2" y1="174.4" x2="224" y2="174.4" stroke="#dcdcdc" stroke-width="0.9" /><rect x="211.6" y="165.9" width="1.8" height="1.3" fill="#3a3a3a" /><rect x="211.6" y="175" width="1.8" height="1.3" fill="#3a3a3a" /><rect x="214.9" y="165.9" width="1.8" height="1.3" fill="#3a3a3a" /><rect x="214.9" y="175" width="1.8" height="1.3" fill="#3a3a3a" /><rect x="218.2" y="165.9" width="1.8" height="1.3" fill="#3a3a3a" /><rect x="218.2" y="175" width="1.8" height="1.3" fill="#3a3a3a" /><rect x="221.5" y="165.9" width="1.8" height="1.3" fill="#3a3a3a" /><rect x="221.5" y="175" width="1.8" height="1.3" fill="#3a3a3a" />
<rect x="230.2" y="165.4" width="13.8" height="11.2" fill="#363636" stroke="#dcdcdc" stroke-width="1.1" /><circle cx="237.1" cy="171" r="3.1" fill="#3fb8c6" />
<rect x="250.6" y="164.6" width="13.6" height="13.6" fill="#555555" /><circle cx="257.4" cy="171.3" r="4" fill="#444" />
<rect x="270.2" y="165.4" width="13.8" height="11.2" fill="#363636" stroke="#dcdcdc" stroke-width="1.1" /><path d="M277.1 165.4 L277.1 176.6" fill="none" stroke="#3fb8c6" stroke-width="1.6" stroke-dasharray="1 1.2"/><path d="M270.2 171 L284 171" fill="none" stroke="#3fb8c6" stroke-width="2.2" stroke-dasharray="0.9 1.1"/>
<rect x="290.2" y="165.4" width="13.8" height="11.2" fill="#363636" stroke="#dcdcdc" stroke-width="1.1" /><path d="M293.3 173.8 L295.3 170 L297.3 173.8 Z" fill="#3fb8c6" /><circle cx="299.3" cy="169.4" r="1.8" fill="#3fb8c6" />
<rect x="310.2" y="165.4" width="13.8" height="11.2" fill="#363636" stroke="#dcdcdc" stroke-width="1.1" /><path d="M313.6 167.9 L320.6 167.9 L320.6 169.8 L318.1 169.8 L318.1 174.2 L316.1 174.2 L316.1 169.8 L313.6 169.8 Z" fill="#3fb8c6" />
<path d="M348.3 163.8 L354.7 167.5 L354.7 174.9 L348.3 178.6 L341.9 174.9 L341.9 167.5 Z" fill="none" stroke="#3fb8c6" stroke-width="1.2" /><path d="M341.90000000000003 167.5 L348.3 171.2 L354.7 167.5 M348.3 171.2 L348.3 178.6" fill="none" stroke="#3fb8c6" stroke-width="1.2" /><path d="M348.3 167.0 L351.9 169.1 L351.9 173.3 L348.3 175.4 L344.7 173.3 L344.7 169.1 Z" fill="none" stroke="#2f5d70" stroke-width="1" /><path d="M348.3 163.79999999999998 L348.3 167.0 M341.90000000000003 174.89999999999998 L344.7 173.29999999999998 M354.7 174.89999999999998 L351.90000000000003 173.29999999999998" fill="none" stroke="#2f5d70" stroke-width="1" />
<path d="M368 164 L374.5 167.6 L368 171.4 L361.5 167.6 Z" fill="#d4d4d4" /><path d="M361.5 167.6 L368 171.4 L368 178.4 L361.5 174.6 Z" fill="#8c8c8c" /><path d="M374.5 167.6 L368 171.4 L368 178.4 L374.5 174.6 Z" fill="#b4b4b4" />
<clipPath id="ck1"><circle cx="388" cy="171" r="6.4"/></clipPath><g clip-path="url(#ck1)"><rect x="381.6" y="164.6" width="12.8" height="12.8" fill="#3a3a3a" /><rect x="381.6" y="164.6" width="2.1" height="2.1" fill="#dcdcdc" /><rect x="381.6" y="168.8" width="2.1" height="2.1" fill="#dcdcdc" /><rect x="381.6" y="173.0" width="2.1" height="2.1" fill="#dcdcdc" /><rect x="381.6" y="177.2" width="2.1" height="2.1" fill="#dcdcdc" /><rect x="383.7" y="166.7" width="2.1" height="2.1" fill="#dcdcdc" /><rect x="383.7" y="170.9" width="2.1" height="2.1" fill="#dcdcdc" /><rect x="383.7" y="175.1" width="2.1" height="2.1" fill="#dcdcdc" /><rect x="383.7" y="179.3" width="2.1" height="2.1" fill="#dcdcdc" /><rect x="385.8" y="164.6" width="2.1" height="2.1" fill="#dcdcdc" /><rect x="385.8" y="168.8" width="2.1" height="2.1" fill="#dcdcdc" /><rect x="385.8" y="173.0" width="2.1" height="2.1" fill="#dcdcdc" /><rect x="385.8" y="177.2" width="2.1" height="2.1" fill="#dcdcdc" /><rect x="387.9" y="166.7" width="2.1" height="2.1" fill="#dcdcdc" /><rect x="387.9" y="170.9" width="2.1" height="2.1" fill="#dcdcdc" /><rect x="387.9" y="175.1" width="2.1" height="2.1" fill="#dcdcdc" /><rect x="387.9" y="179.3" width="2.1" height="2.1" fill="#dcdcdc" /><rect x="390.0" y="164.6" width="2.1" height="2.1" fill="#dcdcdc" /><rect x="390.0" y="168.8" width="2.1" height="2.1" fill="#dcdcdc" /><rect x="390.0" y="173.0" width="2.1" height="2.1" fill="#dcdcdc" /><rect x="390.0" y="177.2" width="2.1" height="2.1" fill="#dcdcdc" /><rect x="392.1" y="166.7" width="2.1" height="2.1" fill="#dcdcdc" /><rect x="392.1" y="170.9" width="2.1" height="2.1" fill="#dcdcdc" /><rect x="392.1" y="175.1" width="2.1" height="2.1" fill="#dcdcdc" /><rect x="392.1" y="179.3" width="2.1" height="2.1" fill="#dcdcdc" /><rect x="394.2" y="164.6" width="2.1" height="2.1" fill="#dcdcdc" /><rect x="394.2" y="168.8" width="2.1" height="2.1" fill="#dcdcdc" /><rect x="394.2" y="173.0" width="2.1" height="2.1" fill="#dcdcdc" /><rect x="394.2" y="177.2" width="2.1" height="2.1" fill="#dcdcdc" /><rect x="396.3" y="166.7" width="2.1" height="2.1" fill="#dcdcdc" /><rect x="396.3" y="170.9" width="2.1" height="2.1" fill="#dcdcdc" /><rect x="396.3" y="175.1" width="2.1" height="2.1" fill="#dcdcdc" /><rect x="396.3" y="179.3" width="2.1" height="2.1" fill="#dcdcdc" /><rect x="381.6" y="164.6" width="6.4" height="12.8" fill="#dcdcdc" /></g>
<path d="M408.2 163.8 L414.6 167.5 L414.6 174.9 L408.2 178.6 L401.8 174.9 L401.8 167.5 Z" fill="#3a3a3a" stroke="#3fb8c6" stroke-width="1.3" /><path d="M408.2 167.0 L412.0 169.2 L408.2 171.5 L404.4 169.2 Z" fill="#d4d4d4" /><path d="M404.4 169.2 L408.2 171.5 L408.2 175.6 L404.4 173.39999999999998 Z" fill="#9a9a9a" /><path d="M412.0 169.2 L408.2 171.5 L408.2 175.6 L412.0 173.39999999999998 Z" fill="#bcbcbc" /><path d="M401.8 167.5 L408.2 171.2 L414.59999999999997 167.5 M408.2 171.2 L408.2 178.6" fill="none" stroke="#3fb8c6" stroke-width="1.1" />
<clipPath id="ck2"><circle cx="428" cy="171" r="6.3"/></clipPath><g clip-path="url(#ck2)"><rect x="421.7" y="164.7" width="12.6" height="12.6" fill="#3a3a3a" /><rect x="421.7" y="164.7" width="2.1" height="2.1" fill="#dcdcdc" /><rect x="421.7" y="168.9" width="2.1" height="2.1" fill="#dcdcdc" /><rect x="421.7" y="173.1" width="2.1" height="2.1" fill="#dcdcdc" /><rect x="421.7" y="177.3" width="2.1" height="2.1" fill="#dcdcdc" /><rect x="423.8" y="166.8" width="2.1" height="2.1" fill="#dcdcdc" /><rect x="423.8" y="171.0" width="2.1" height="2.1" fill="#dcdcdc" /><rect x="423.8" y="175.2" width="2.1" height="2.1" fill="#dcdcdc" /><rect x="423.8" y="179.4" width="2.1" height="2.1" fill="#dcdcdc" /><rect x="425.9" y="164.7" width="2.1" height="2.1" fill="#dcdcdc" /><rect x="425.9" y="168.9" width="2.1" height="2.1" fill="#dcdcdc" /><rect x="425.9" y="173.1" width="2.1" height="2.1" fill="#dcdcdc" /><rect x="425.9" y="177.3" width="2.1" height="2.1" fill="#dcdcdc" /><rect x="428.0" y="166.8" width="2.1" height="2.1" fill="#dcdcdc" /><rect x="428.0" y="171.0" width="2.1" height="2.1" fill="#dcdcdc" /><rect x="428.0" y="175.2" width="2.1" height="2.1" fill="#dcdcdc" /><rect x="428.0" y="179.4" width="2.1" height="2.1" fill="#dcdcdc" /><rect x="430.1" y="164.7" width="2.1" height="2.1" fill="#dcdcdc" /><rect x="430.1" y="168.9" width="2.1" height="2.1" fill="#dcdcdc" /><rect x="430.1" y="173.1" width="2.1" height="2.1" fill="#dcdcdc" /><rect x="430.1" y="177.3" width="2.1" height="2.1" fill="#dcdcdc" /><rect x="432.2" y="166.8" width="2.1" height="2.1" fill="#dcdcdc" /><rect x="432.2" y="171.0" width="2.1" height="2.1" fill="#dcdcdc" /><rect x="432.2" y="175.2" width="2.1" height="2.1" fill="#dcdcdc" /><rect x="432.2" y="179.4" width="2.1" height="2.1" fill="#dcdcdc" /><rect x="434.3" y="164.7" width="2.1" height="2.1" fill="#dcdcdc" /><rect x="434.3" y="168.9" width="2.1" height="2.1" fill="#dcdcdc" /><rect x="434.3" y="173.1" width="2.1" height="2.1" fill="#dcdcdc" /><rect x="434.3" y="177.3" width="2.1" height="2.1" fill="#dcdcdc" /><rect x="436.4" y="166.8" width="2.1" height="2.1" fill="#dcdcdc" /><rect x="436.4" y="171.0" width="2.1" height="2.1" fill="#dcdcdc" /><rect x="436.4" y="175.2" width="2.1" height="2.1" fill="#dcdcdc" /><rect x="436.4" y="179.4" width="2.1" height="2.1" fill="#dcdcdc" /></g>
<circle cx="448" cy="169.2" r="3.6" fill="#dcdcdc" /><rect x="446.2" y="171.5" width="3.6" height="3.4" fill="#dcdcdc" /><rect x="446.6" y="175.6" width="2.8" height="1.5" fill="#dcdcdc" /><path d="M448 162.4 L448 164 M442.2 164.4 L443.6 165.8 M453.8 164.4 L452.4 165.8 M440.6 170 L442.6 170 M453.4 170 L455.4 170" fill="none" stroke="#dcdcdc" stroke-width="1.3" />
<circle cx="470.3" cy="169.6" r="4.6" fill="#3f5a5f" /><path d="M461.5 171.5 L466 176 M463.5 170 L467.5 174" fill="none" stroke="#4f4f4f" stroke-width="1" />
<circle cx="499" cy="169.3" r="5.3" fill="#c0c0c0" /><path d="M492 175 L500 178.8 L506 175.5 M494.5 176.2 L497.5 174.4 M497.3 177.5 L500.5 175.6 M494.5 173.6 L503 177.3" fill="none" stroke="#3fb8c6" stroke-width="1" />
<path d="M514.2 166.4 Q511 170.5 514.2 174.6 M516.6 166 Q513.4 170.5 516.6 175" fill="none" stroke="#c8c8c8" stroke-width="1" /><circle cx="521.6" cy="170.5" r="4.8" fill="#d0d0d0" />
<path d="M539 165.3 A5.6 5.6 0 0 1 539 176.7" fill="none" stroke="#3fb8c6" stroke-width="2" /><path d="M539 165.3 A5.6 5.6 0 0 0 539 176.7" fill="none" stroke="#dcdcdc" stroke-width="2" stroke-dasharray="1.6 1.5"/>
<rect x="553" y="169" width="8.2" height="8.2" fill="#3f5a5f" /><path d="M557 165.5 L565 165.5 L565 173.5" fill="none" stroke="#4c4c4c" stroke-width="1" stroke-dasharray="1 1"/>
<rect x="584.2" y="165.3" width="8" height="8" fill="none" stroke="#3fb8c6" stroke-width="1.3" stroke-dasharray="2.2 1.4"/><path transform="translate(590.6 168.6) scale(0.85)" d="M0 0 L0 10.2 L2.4 8 L4.2 11.8 L6 11 L4.3 7.3 L7.4 7.3 Z" fill="#c3c3c3" stroke="#3a3a3a" stroke-width="0.8" stroke-linejoin="round"/>
<rect x="619.5" y="165" width="8" height="8" fill="#d0d0d0" stroke="#3a3a3a" stroke-width="0.8" /><rect x="615.3" y="169.3" width="8" height="8" fill="#d0d0d0" stroke="#3a3a3a" stroke-width="0.8" /><rect x="619.8" y="169.6" width="3.2" height="3.2" fill="#efefef" />
<rect x="635.2" y="169.2" width="8" height="8" fill="#3fb8c6" /><rect x="639.3" y="165.3" width="7.6" height="7.6" fill="#3a3a3a" stroke="#dcdcdc" stroke-width="1.1" /><circle cx="643" cy="169.2" r="1.3" fill="#3fb8c6" />
<rect x="655.3" y="165.3" width="11.4" height="11.6" fill="#3a3a3a" stroke="#dcdcdc" stroke-width="1.2" /><circle cx="658.6" cy="168.6" r="1.5" fill="#3fb8c6" /><line x1="659.5" y1="169.5" x2="663.6" y2="174" stroke="#3fb8c6" stroke-width="2" />
<circle cx="692.8" cy="170.8" r="6" fill="#d0d0d0" /><line x1="698.53" y1="172.57" x2="692.85" y2="173.2" stroke="#444" stroke-width="1.1" /><line x1="694.13" y1="176.65" x2="690.75" y2="172.04" stroke="#444" stroke-width="1.1" /><line x1="688.4" y1="174.88" x2="690.7" y2="169.64" stroke="#444" stroke-width="1.1" /><line x1="687.07" y1="169.03" x2="692.75" y2="168.4" stroke="#444" stroke-width="1.1" /><line x1="691.47" y1="164.95" x2="694.85" y2="169.56" stroke="#444" stroke-width="1.1" /><line x1="697.2" y1="166.72" x2="694.9" y2="171.96" stroke="#444" stroke-width="1.1" /><circle cx="692.8" cy="170.8" r="1.6" fill="#444" />
<rect x="754.5" y="165.6" width="5.6" height="10.6" fill="#d0d0d0" /><path d="M754.5 167.6 A3.4 3.4 0 0 0 754.5 174.4 Z" fill="#d0d0d0" /><path d="M754.8 168.2 A2.8 2.8 0 0 1 754.8 173.8 Z" fill="#444" />
<circle cx="817.6" cy="170.8" r="5.8" fill="#3cb4bd" stroke="#2c4250" stroke-width="1" />
<path transform="translate(16.3 162.3) scale(2.25)" d="M0 0 L0 10.2 L2.4 8 L4.2 11.8 L6 11 L4.3 7.3 L7.4 7.3 Z" fill="#cfcfcf" stroke="#3a3a3a" stroke-width="0.8" stroke-linejoin="round"/>
<ellipse cx="19.5" cy="208.5" rx="10.5" ry="6.3" transform="rotate(-27 19.5 208.5)" fill="none" stroke="#3fb8c6" stroke-width="1.7" stroke-dasharray="4 2.4"/><path transform="translate(22 205) scale(1.7)" d="M0 0 L0 10.2 L2.4 8 L4.2 11.8 L6 11 L4.3 7.3 L7.4 7.3 Z" fill="#cfcfcf" stroke="#3a3a3a" stroke-width="0.8" stroke-linejoin="round"/>
<ellipse cx="18.8" cy="254.5" rx="10.5" ry="6" transform="rotate(38 18.8 254.5)" fill="none" stroke="#3fb8c6" stroke-width="1.7" stroke-dasharray="4 2.4"/><line x1="34.6" y1="237.4" x2="26.5" y2="245.5" stroke="#d0d0d0" stroke-width="2.6" stroke-linecap="round"/><path d="M25 244 L28 247 Q25 253.5 16.5 252 Q22.5 249.5 25 244 Z" fill="#d0d0d0" />
<rect x="16" y="280" width="12" height="12" fill="#cfcfcf" /><path d="M22 271.5 L25.8 275.6 L18.2 275.6 Z M22 300.5 L25.8 296.4 L18.2 296.4 Z M7.6 286 L11.8 282.2 L11.8 289.8 Z M36.4 286 L32.2 282.2 L32.2 289.8 Z" fill="#3fb8c6" />
<path d="M21 309.8 A13 13 0 1 0 34.6 322" fill="none" stroke="#3fb8c6" stroke-width="1.5" /><path d="M34.8 327 L31.6 322 L38 322 Z" fill="#3fb8c6" /><path d="M21 314.4 L29.6 323 L21 331.6 L12.4 323 Z" fill="#cfcfcf" />
<rect x="10.6" y="347.6" width="24.4" height="24" fill="none" stroke="#3fb8c6" stroke-width="1.3" stroke-dasharray="3.2 2"/><rect x="10" y="362" width="11.2" height="10.8" fill="#cfcfcf" /><path d="M19 357.4 L25 357.4 L25 363.6" fill="none" stroke="#3fb8c6" stroke-width="1.3" />
<rect x="8" y="431" width="28" height="28" fill="#c4c4c4" /><rect x="10" y="433" width="24" height="24" fill="none" stroke="#333" stroke-width="1" /><path d="M19.0 441.5 L22 439.5 L25.0 441.5 L22 443.5 Z" fill="#333" /><path d="M19.0 448.5 L22 446.5 L25.0 448.5 L22 450.5 Z" fill="#333" /><path d="M14.3 445 L17.3 443 L20.3 445 L17.3 447 Z" fill="#333" /><path d="M23.7 445 L26.7 443 L29.7 445 L26.7 447 Z" fill="#333" />
<rect x="8.5" y="468.5" width="12.5" height="12.5" fill="#3a3a3a" stroke="#c4c4c4" stroke-width="1" /><path d="M14.75 471.5 L14.75 478.0 M11.5 474.75 L18.0 474.75" fill="none" stroke="#c4c4c4" stroke-width="1.2" /><rect x="22.5" y="468" width="13.5" height="13.5" fill="#c4c4c4" /><path d="M25.6 474.8 L29.2 472.40000000000003 L32.8 474.8 L29.2 477.2 Z" fill="#333" /><rect x="8.5" y="483.0" width="12.5" height="12.5" fill="#3a3a3a" stroke="#c4c4c4" stroke-width="1" /><path d="M14.75 486.0 L14.75 492.5 M11.5 489.25 L18.0 489.25" fill="none" stroke="#c4c4c4" stroke-width="1.2" /><rect x="23.0" y="483.0" width="12.5" height="12.5" fill="#3a3a3a" stroke="#c4c4c4" stroke-width="1" /><path d="M29.25 486.0 L29.25 492.5 M26.0 489.25 L32.5 489.25" fill="none" stroke="#c4c4c4" stroke-width="1.2" />
<rect x="8.5" y="505" width="12" height="28" fill="#3a3a3a" stroke="#c4c4c4" stroke-width="1" /><path d="M11.5 514 L17.5 514 M11.5 517.5 L12.6 517.5 M13.8 517.5 L17.5 517.5 M11.5 520.5 L12.6 520.5 M13.8 520.5 L17.5 520.5 M11.5 523.5 L12.6 523.5 M13.8 523.5 L17.5 523.5 M11.5 526.5 L12.6 526.5 M13.8 526.5 L17.5 526.5" fill="none" stroke="#c4c4c4" stroke-width="1" /><rect x="22.5" y="504.5" width="13.5" height="29" fill="#c4c4c4" /><path d="M25.6 519 L29.2 516.6 L32.8 519 L29.2 521.4 Z" fill="#333" />
<rect x="8" y="541.5" width="28" height="13.5" fill="#c4c4c4" /><path d="M18.4 548.3 L22 545.9 L25.6 548.3 L22 550.6999999999999 Z" fill="#333" /><rect x="8.5" y="556.5" width="27" height="13" fill="#3a3a3a" stroke="#c4c4c4" stroke-width="1" /><path d="M11 560 L13 560 M11 563 L13 563 M11 566 L13 566" fill="none" stroke="#c4c4c4" stroke-width="1" /><path d="M15 565 Q19 556.5 23 563 Q27 568 33 561" fill="none" stroke="#3fb8c6" stroke-width="1.2" /><path d="M20.5 560 L20.5 567 M17 563.5 L24 563.5" fill="none" stroke="#c4c4c4" stroke-width="1" />
<rect x="8.5" y="579.5" width="12" height="28" fill="#3a3a3a" stroke="#c4c4c4" stroke-width="1" /><rect x="11" y="583.0" width="2.4" height="2.4" fill="none" stroke="#c4c4c4" stroke-width="0.9" /><rect x="15" y="583.0" width="2.4" height="2.4" fill="none" stroke="#c4c4c4" stroke-width="0.9" /><rect x="11" y="587.2" width="2.4" height="2.4" fill="none" stroke="#c4c4c4" stroke-width="0.9" /><rect x="15" y="587.2" width="2.4" height="2.4" fill="none" stroke="#c4c4c4" stroke-width="0.9" /><rect x="11" y="591.4" width="2.4" height="2.4" fill="none" stroke="#c4c4c4" stroke-width="0.9" /><rect x="15" y="591.4" width="2.4" height="2.4" fill="none" stroke="#c4c4c4" stroke-width="0.9" /><rect x="11" y="595.6" width="2.4" height="2.4" fill="none" stroke="#c4c4c4" stroke-width="0.9" /><rect x="15" y="595.6" width="2.4" height="2.4" fill="none" stroke="#c4c4c4" stroke-width="0.9" /><rect x="12.3" y="600.3" width="4.2" height="3.4" fill="none" stroke="#c4c4c4" stroke-width="1" /><line x1="11" y1="605.5" x2="18" y2="605.5" stroke="#c4c4c4" stroke-width="1" /><rect x="22.5" y="579" width="13.5" height="29" fill="#c4c4c4" /><path d="M25.6 593.5 L29.2 591.1 L32.8 593.5 L29.2 595.9 Z" fill="#333" />
<rect x="8" y="616" width="13.5" height="13.5" fill="#c4c4c4" /><path d="M11.200000000000001 622.8 L14.8 620.4 L18.4 622.8 L14.8 625.1999999999999 Z" fill="#333" /><rect x="23" y="616.5" width="12.5" height="12.5" fill="#3a3a3a" stroke="#c4c4c4" stroke-width="1" /><rect x="25.5" y="619" width="4" height="3" fill="none" stroke="#3fb8c6" stroke-width="1" /><rect x="28" y="623.5" width="5" height="3" fill="none" stroke="#3fb8c6" stroke-width="1" /><rect x="8.5" y="631.0" width="27" height="13" fill="#3a3a3a" stroke="#c4c4c4" stroke-width="1" /><path d="M11 634.5 L13 634.5 M11 637.5 L13 637.5 M11 640.5 L13 640.5" fill="none" stroke="#c4c4c4" stroke-width="1" /><path d="M15 639.5 Q19 631.0 23 637.5 Q27 642.5 33 635.5" fill="none" stroke="#3fb8c6" stroke-width="1.2" /><path d="M20.5 634.5 L20.5 641.5 M17 638.0 L24 638.0" fill="none" stroke="#c4c4c4" stroke-width="1" />
<rect x="6.5" y="651" width="29" height="28" fill="#444" stroke="#2e2e2e" stroke-width="1" /><path d="M18.5 664 L23.5 664 L21 666.8 Z" fill="#c8c8c8" />
<line x1="1799" y1="10.5" x2="1809" y2="10.5" stroke="#fff" stroke-width="1" /><rect x="1846.5" y="5.5" width="8" height="7.5" fill="none" stroke="#fff" stroke-width="1" /><rect x="1844.5" y="7.5" width="8" height="7.5" fill="#da3b01" stroke="#fff" stroke-width="1" /><path d="M1890 5 L1900 15 M1900 5 L1890 15" fill="none" stroke="#fff" stroke-width="1.1" />
<g transform="translate(5.8 879) scale(1.0)"><path d="M0 9 L16 0 L32 9 L25.5 13 L16 3 L6.5 13 Z" fill="#1a9ea0" /><path d="M6.5 13 L16 1.5 L25.5 13 L25.5 20 L16 28 L6.5 20 Z" fill="#0f6466" /><path d="M16 1.5 L21 17 L16 22 L11 17 Z" fill="#17969a" /><path d="M0 9 L6.5 13 L6.5 29 L0 29 Z" fill="#27d3d8" /><path d="M32 9 L25.5 13 L25.5 29 L32 29 Z" fill="#1a9ea2" /><path d="M6.5 20 L10 17 L16 22.5 L22 17 L25.5 20 L16 28.5 Z" fill="#2bbfc2" /></g>
<defs><linearGradient id="tig" x1="0" y1="0" x2="0" y2="1"><stop offset="0" stop-color="#0f8f96"/><stop offset="0.55" stop-color="#3fd0d4"/><stop offset="1" stop-color="#c8f2f2"/></linearGradient></defs><rect x="2" y="3" width="16" height="16" fill="url(#tig)" /><g transform="translate(3.6 4.6) scale(0.4)"><path d="M0 9 L16 0 L32 9 L25.5 13 L16 3 L6.5 13 Z" fill="#1a9ea0" /><path d="M6.5 13 L16 1.5 L25.5 13 L25.5 20 L16 28 L6.5 20 Z" fill="#0f6466" /><path d="M16 1.5 L21 17 L16 22 L11 17 Z" fill="#17969a" /><path d="M0 9 L6.5 13 L6.5 29 L0 29 Z" fill="#27d3d8" /><path d="M32 9 L25.5 13 L25.5 29 L32 29 Z" fill="#1a9ea2" /><path d="M6.5 20 L10 17 L16 22.5 L22 17 L25.5 20 L16 28.5 Z" fill="#2bbfc2" /></g><rect x="10" y="16.6" width="7.6" height="1.6" fill="#9adfe0" />
<line x1="71.5" y1="886.3" x2="71.5" y2="874" stroke="#00e000" stroke-width="1.6" /><line x1="71.5" y1="886.3" x2="61.5" y2="890.6" stroke="#0000ff" stroke-width="1.4" /><line x1="71.5" y1="886.3" x2="79" y2="890" stroke="#ff0000" stroke-width="1.4" />
<path d="M1834 50.5 L1840 53.5 L1840 61.5 L1834 65 L1828 61.5 L1828 53.5 Z" fill="#c0c0c0" /><path d="M1828 53.5 L1834 56.8 L1840 53.5 M1834 56.8 L1834 65 M1828 57.5 L1834 61 L1840 57.5 M1831 55.2 L1831 63.2 M1837 55.2 L1837 63.2 M1831 52 L1837 55.2 M1837 52 L1831 55.2" fill="none" stroke="#444" stroke-width="0.8" /><path d="M1836.5 47.3 L1844 47.3 L1846.4 50 L1836.5 50 Z" fill="#d0d0d0" /><rect x="1840.3" y="50" width="2.1" height="14.3" fill="#d0d0d0" stroke="#444" stroke-width="0.5" />
<line x1="1851" y1="48.5" x2="1857" y2="48.5" stroke="#dcdcdc" stroke-width="1.1" /><rect x="1857.5" y="46.2" width="11.5" height="4.6" fill="#333" stroke="#dcdcdc" stroke-width="1" /><line x1="1851" y1="55.5" x2="1857" y2="55.5" stroke="#dcdcdc" stroke-width="1.1" /><rect x="1857.5" y="53.2" width="11.5" height="4.6" fill="#333" stroke="#dcdcdc" stroke-width="1" /><line x1="1851" y1="62.5" x2="1857" y2="62.5" stroke="#dcdcdc" stroke-width="1.1" /><rect x="1857.5" y="60.2" width="11.5" height="4.6" fill="#333" stroke="#dcdcdc" stroke-width="1" /><rect x="1858" y="53.4" width="2.6" height="4.2" fill="#dcdcdc" /><circle cx="1864" cy="55.5" r="1.8" fill="#dcdcdc" />
<circle cx="1876.3" cy="48.5" r="1.5" fill="#d0d0d0" /><line x1="1879.5" y1="48.5" x2="1882" y2="48.5" stroke="#d0d0d0" stroke-width="1.1" /><circle cx="1876.3" cy="55.5" r="1.5" fill="#d0d0d0" /><line x1="1879.5" y1="55.5" x2="1885.5" y2="55.5" stroke="#d0d0d0" stroke-width="1.1" /><circle cx="1876.3" cy="62.5" r="1.5" fill="#d0d0d0" /><line x1="1879.5" y1="62.5" x2="1885.5" y2="62.5" stroke="#d0d0d0" stroke-width="1.1" /><path d="M1882.5 47.3 L1889 47.3 L1891.5 50 L1882.5 50 Z" fill="#d0d0d0" /><rect x="1885.7" y="50" width="2" height="14" fill="#d0d0d0" />
<path d="M1897.5 60 L1906 54.4 L1914.5 60 L1906 65.6 Z" fill="#d0d0d0" stroke="#3a3a3a" stroke-width="0.8" /><path d="M1897.5 57 L1906 51.4 L1914.5 57 L1906 62.6 Z" fill="#d0d0d0" stroke="#3a3a3a" stroke-width="0.8" /><path d="M1897.5 54 L1906 48.4 L1914.5 54 L1906 59.6 Z" fill="#d0d0d0" stroke="#3a3a3a" stroke-width="0.8" /><path d="M1902.5 52.6 L1909 52.6 M1903 54.8 L1910.5 54.8 M1906 51 L1906 56" fill="none" stroke="#3a3a3a" stroke-width="0.9" />
<rect x="1872" y="149.5" width="4.4" height="4.4" fill="none" stroke="#dcdcdc" stroke-width="1.2" /><rect x="1875" y="146.3" width="5.2" height="4.6" fill="#3a3a3a" stroke="#dcdcdc" stroke-width="1.2" /><line x1="1874.5" y1="146.5" x2="1880.5" y2="146.5" stroke="#dcdcdc" stroke-width="1.6" />
<path d="M1887.3 146.3 L1894.7 153.7 M1894.7 146.3 L1887.3 153.7" fill="none" stroke="#dcdcdc" stroke-width="1.8" />
<rect x="1729.7" y="926.5" width="2.3" height="11.2" fill="#c8c8c8" /><path d="M1739.2 926.8 L1732.6 932 L1739.2 937.2 Z" fill="#c8c8c8" /><path d="M1746 926.8 L1739.4 932 L1746 937.2 Z" fill="#c8c8c8" />
<rect x="1754.6" y="926.5" width="2.3" height="11.2" fill="#c8c8c8" /><path d="M1767 926 L1757.6 932 L1767 938 Z" fill="#c8c8c8" />
<line x1="1778.4" y1="923" x2="1778.4" y2="941" stroke="#e8853a" stroke-width="1" /><rect x="1776.8" y="926" width="3.2" height="12.4" fill="#e8853a" /><path d="M1790 926 L1781 932 L1790 938 Z" fill="#c8c8c8" />
<path d="M1813.5 924 L1800 932 L1813.5 940 Z" fill="#c8c8c8" />
<path d="M1823.5 924 L1837 932 L1823.5 940 Z" fill="#c8c8c8" />
<line x1="1858.2" y1="923" x2="1858.2" y2="941" stroke="#e8853a" stroke-width="1" /><rect x="1856.6" y="926" width="3.2" height="12.4" fill="#e8853a" /><path d="M1846.5 926 L1855.6 932 L1846.5 938 Z" fill="#c8c8c8" />
<rect x="1880" y="926.5" width="2.3" height="11.2" fill="#c8c8c8" /><path d="M1869.7 926 L1879.2 932 L1869.7 938 Z" fill="#c8c8c8" />
<rect x="1905.1" y="926.5" width="2.3" height="11.2" fill="#c8c8c8" /><path d="M1890.5 926.8 L1897.1 932 L1890.5 937.2 Z" fill="#c8c8c8" /><path d="M1897.7 926.8 L1904.3 932 L1897.7 937.2 Z" fill="#c8c8c8" />
<path d="M1605 963 L1615 963 L1610 968.6 Z" fill="#6a6a6a" stroke="#a0a0a0" stroke-width="0.9" />
<path d="M1734.5 963 L1744.5 963 L1739.5 968.6 Z" fill="#6a6a6a" stroke="#a0a0a0" stroke-width="0.9" />
<path d="M1863 963 A7.6 7.6 0 0 1 1877.4 964.5 M1877 969 A7.6 7.6 0 0 1 1862.6 967.5" fill="none" stroke="#c8c8c8" stroke-width="1.3" /><path d="M1861 960.5 L1865.5 961.5 L1862.2 965 Z M1879 971.5 L1874.5 970.5 L1877.8 967 Z" fill="#c8c8c8" /><rect x="1869" y="960.8" width="2.2" height="8.6" fill="#e8853a" /><line x1="1865.5" y1="966.2" x2="1868" y2="966.2" stroke="#e8853a" stroke-width="1.2" /><line x1="1872.4" y1="966.2" x2="1875" y2="966.2" stroke="#e8853a" stroke-width="1.2" />
<circle cx="1894.6" cy="961.6" r="2.8" fill="none" stroke="#c8c8c8" stroke-width="1.2" /><line x1="1897.9" y1="961.6" x2="1899.4" y2="961.6" stroke="#c8c8c8" stroke-width="1.2" /><line x1="1896.93" y1="963.93" x2="1897.99" y2="964.99" stroke="#c8c8c8" stroke-width="1.2" /><line x1="1894.6" y1="964.9" x2="1894.6" y2="966.4" stroke="#c8c8c8" stroke-width="1.2" /><line x1="1892.27" y1="963.93" x2="1891.21" y2="964.99" stroke="#c8c8c8" stroke-width="1.2" /><line x1="1891.3" y1="961.6" x2="1889.8" y2="961.6" stroke="#c8c8c8" stroke-width="1.2" /><line x1="1892.27" y1="959.27" x2="1891.21" y2="958.21" stroke="#c8c8c8" stroke-width="1.2" /><line x1="1894.6" y1="958.3" x2="1894.6" y2="956.8" stroke="#c8c8c8" stroke-width="1.2" /><line x1="1896.93" y1="959.27" x2="1897.99" y2="958.21" stroke="#c8c8c8" stroke-width="1.2" /><circle cx="1904.6" cy="961.6" r="1.6" fill="#e8853a" /><path d="M1903.6 964 L1900 966 L1898.6 968.6 M1903.6 964 L1902.6 969 L1905 971 L1904.4 975 M1902.6 969 L1899.6 971.6 L1896 971.6 M1903.6 965 L1906.6 967 L1908.6 965" fill="none" stroke="#e8853a" stroke-width="1.5" stroke-linecap="round" stroke-linejoin="round"/>
<rect x="1893.2" y="990" width="18.4" height="2.6" fill="#c8c8c8" /><rect x="1893.2" y="993.6" width="18.4" height="15.4" fill="#c8c8c8" />
<rect x="1894.4" y="990.7" width="1.2" height="1.2" fill="#444" /><rect x="1896.6" y="990.7" width="1.2" height="1.2" fill="#444" /><rect x="1898.8" y="990.7" width="1.2" height="1.2" fill="#444" />
<path d="M770.0 818.0L823.0 855.6M770.0 818.0L707.0 849.0M767.4 819.3L820.4 857.1M772.2 819.6L709.2 850.7M764.8 820.6L817.8 858.5M774.4 821.1L711.5 852.5M762.1 821.9L815.2 860.0M776.6 822.7L713.7 854.2M759.5 823.2L812.6 861.5M778.8 824.3L715.9 856.0M756.9 824.5L810.0 862.9M781.0 825.8L718.1 857.7M754.2 825.8L807.4 864.4M783.2 827.4L720.4 859.4M751.6 827.0L804.8 865.8M785.5 829.0L722.6 861.2M749.0 828.3L802.2 867.3M787.7 830.5L724.8 862.9M746.4 829.6L799.6 868.8M789.9 832.1L727.1 864.6M743.8 830.9L797.0 870.2M792.1 833.7L729.3 866.4M741.1 832.2L794.4 871.7M794.3 835.2L731.5 868.1M738.5 833.5L791.8 873.2M796.5 836.8L733.8 869.9M735.9 834.8L789.1 874.6M798.7 838.4L736.0 871.6M733.2 836.1L786.5 876.1M800.9 839.9L738.2 873.3M730.6 837.4L783.9 877.5M803.1 841.5L740.4 875.1M728.0 838.7L781.3 879.0M805.3 843.1L742.7 876.8M725.4 840.0L778.7 880.5M807.5 844.6L744.9 878.5M722.8 841.2L776.1 881.9M809.8 846.2L747.1 880.3M720.1 842.5L773.5 883.4M812.0 847.8L749.4 882.0M717.5 843.8L770.9 884.9M814.2 849.3L751.6 883.8M714.9 845.1L768.3 886.3M816.4 850.9L753.8 885.5M712.2 846.4L765.7 887.8M818.6 852.5L756.0 887.2M709.6 847.7L763.1 889.2M820.8 854.0L758.3 889.0M707.0 849.0L760.5 890.7M823.0 855.6L760.5 890.7" fill="none" stroke="#6e6e6e" stroke-opacity="0.55" stroke-width="0.8"/>
<g fill="none" stroke="#a30029" stroke-width="1" shape-rendering="crispEdges"><path d="M741 200l-2 2l-3 0l-4 0l-3 -1l0 -1l3 -1l4 0l3 0zM748 202l0 2l-3 1l-3 1l-5 0l-5 0l-4 0l-4 -1l-2 -2l-1 -1l1 -1l2 -2l4 0l4 -1l5 0l5 1l3 1l3 1zM756 205l-2 2l-3 2l-6 2l-7 0l-7 0l-7 -1l-6 -1l-3 -2l-2 -3l2 -2l3 -2l6 -1l7 0l7 0l7 1l6 1l3 2zM762 210l-2 3l-5 2l-7 2l-9 1l-10 0l-9 -2l-7 -2l-5 -2l-1 -3l2 -3l4 -2l8 -2l9 -1l9 1l9 1l7 2l5 2zM766 217l-2 3l-5 3l-9 2l-10 1l-11 -1l-11 -1l-8 -2l-6 -3l-2 -3l2 -4l6 -3l8 -2l11 -1l11 1l10 1l9 2l5 3zM770 223l-2 4l-6 3l-10 2l-11 2l-12 0l-12 -2l-9 -2l-6 -3l-2 -4l2 -4l6 -3l9 -2l12 -1l12 0l11 1l10 3l6 3zM773 231l-2 4l-7 3l-10 2l-12 2l-13 0l-12 -1l-10 -3l-6 -3l-3 -4l3 -4l6 -3l10 -3l12 -1l13 0l12 1l10 3l7 3zM775 238l-2 4l-7 4l-10 2l-12 2l-14 0l-12 -1l-11 -3l-6 -3l-3 -4l3 -4l6 -3l10 -3l13 -2l13 0l13 1l10 3l7 3zM777 246l-2 4l-7 3l-10 3l-13 2l-13 0l-13 -1l-10 -3l-7 -3l-3 -4l3 -4l6 -4l11 -2l12 -2l14 0l12 1l11 3l7 3zM778 254l-2 4l-7 3l-10 3l-12 1l-14 1l-12 -1l-10 -3l-7 -3l-3 -4l3 -4l6 -4l10 -2l13 -2l13 0l13 1l10 2l7 4zM779 261l-3 4l-6 4l-10 2l-12 2l-13 0l-12 -1l-10 -3l-6 -3l-3 -4l3 -3l6 -4l10 -2l12 -2l13 0l12 1l10 2l6 4zM778 269l-2 4l-6 3l-9 2l-12 2l-12 0l-11 -1l-10 -3l-6 -3l-2 -3l2 -4l6 -3l10 -3l11 -1l12 0l12 1l9 3l6 3zM777 277l-2 4l-5 2l-9 3l-11 1l-11 0l-11 -1l-9 -3l-6 -3l-2 -3l2 -3l6 -3l9 -3l11 -1l11 0l11 2l9 2l5 3zM776 285l-2 3l-6 3l-8 2l-10 1l-11 0l-11 -1l-8 -2l-5 -3l-2 -3l1 -3l6 -3l8 -2l11 -1l11 0l10 1l8 2l6 3zM772 292l-2 3l-5 3l-7 2l-10 1l-10 0l-10 -1l-8 -1l-5 -3l-2 -3l2 -3l5 -3l8 -2l9 -1l11 0l9 0l8 2l5 3zM766 297l-1 3l-5 3l-7 2l-9 2l-9 0l-9 0l-7 -1l-5 -2l-2 -3l1 -3l5 -3l7 -2l9 -2l9 0l9 0l8 1l4 2zM761 303l-1 2l-4 3l-7 3l-8 2l-9 1l-9 0l-7 -1l-5 -2l-1 -2l1 -3l4 -3l7 -3l8 -1l9 -2l8 0l7 1l5 2zM760 310l-2 3l-4 3l-7 2l-9 2l-10 1l-9 0l-7 -1l-5 -2l-2 -3l1 -3l5 -3l7 -2l9 -2l9 -1l9 0l8 1l5 2zM737 200l4 1l4 1l4 1l5 1l3 2l4 3l2 3l3 4l2 3l2 4l2 4l1 4l2 4l1 4l1 4l0 5l1 4l0 4l1 4l0 5l-1 4l0 4l-1 4l-1 5l-1 4l-1 4l-3 3l-3 3l-4 3l-3 3l-1 3l0 5l0 4M737 200l4 1l4 2l3 1l4 2l4 3l3 3l2 3l2 4l2 4l2 4l2 4l1 4l2 5l1 4l1 4l0 4l1 4l0 5l1 4l0 4l0 4l-1 4l0 4l-1 4l-1 4l-2 4l-2 4l-3 2l-3 3l-3 3l-2 4l0 4l0 4M736 200l3 2l3 2l3 2l3 2l3 3l2 3l2 4l1 4l2 4l2 4l1 5l1 4l1 4l1 5l1 4l1 4l1 4l0 4l1 4l0 5l0 3l0 4l0 4l-1 4l-1 4l-1 4l-2 4l-3 2l-3 3l-3 3l-1 4l-1 4l0 5M736 200l1 2l2 2l1 3l2 2l1 3l1 4l1 4l1 4l1 4l1 5l1 4l1 5l1 4l1 4l1 5l1 4l0 4l1 4l1 4l0 4l1 4l0 4l0 4l0 4l-1 4l-1 3l-2 4l-2 3l-2 2l-3 4l-1 3l-1 5l-1 4M735 200l0 2l0 3l0 2l0 2l-1 3l0 4l0 4l0 4l0 5l1 4l0 5l1 4l0 5l1 4l1 5l1 4l1 4l0 4l1 4l1 4l1 4l1 3l0 4l0 4l0 4l-1 4l-1 4l-2 3l-1 3l-2 3l-2 4l-2 4l-1 5M734 200l-1 2l-2 2l-2 3l-2 2l-1 3l-2 3l-1 4l-1 5l0 4l-1 5l0 4l0 5l1 4l0 5l1 4l1 4l1 4l1 4l1 4l1 4l2 4l1 4l1 4l0 4l0 4l0 4l-1 3l-1 4l-2 3l-1 4l-2 4l-2 4l-3 4M734 200l-3 2l-4 2l-3 1l-3 3l-3 2l-2 3l-3 4l-1 4l-1 5l-1 4l-1 5l0 4l0 5l1 4l0 5l1 4l1 4l2 4l1 4l2 4l1 4l2 3l1 4l1 4l0 5l0 4l0 4l-1 4l-1 3l-2 4l-2 4l-2 4l-3 4M733 200l-4 1l-4 2l-4 1l-4 2l-4 2l-3 3l-3 3l-2 4l-2 4l-1 5l0 4l-1 5l0 4l0 5l1 4l1 4l1 5l1 4l2 4l2 3l2 4l2 4l1 4l1 4l0 5l0 4l0 4l-1 4l0 4l-2 4l-2 4l-3 4l-3 3M733 200l-4 0l-5 1l-4 1l-4 2l-4 1l-4 3l-3 3l-2 4l-2 4l-1 4l-1 4l-1 4l0 5l0 4l1 5l1 4l1 4l1 4l2 4l2 4l2 4l2 4l1 4l1 5l1 4l0 4l0 5l-1 4l-1 4l-1 5l-2 4l-3 3l-3 3M733 199l-4 1l-4 0l-4 1l-4 0l-3 2l-4 2l-3 2l-2 4l-1 4l-2 4l0 4l-1 4l0 4l0 5l1 4l1 4l1 5l1 4l2 4l2 4l2 4l2 4l1 5l1 4l0 4l0 5l0 4l-1 5l-1 4l-1 5l-2 3l-3 4l-3 3M734 199l-3 0l-4 0l-3 0l-3 1l-2 0l-3 2l-2 3l-2 3l-1 4l-1 3l-1 4l0 4l0 5l1 4l0 4l1 4l1 5l1 4l2 4l1 5l2 4l2 4l1 4l1 5l0 4l0 5l-1 4l-1 5l-1 4l-2 4l-2 4l-2 3l-3 3M734 199l-1 0l-2 0l-2 -1l-1 0l-2 1l-2 2l-1 2l-1 3l0 3l-1 4l0 4l0 4l1 4l0 4l1 4l1 5l1 4l1 4l1 5l1 4l2 4l1 5l1 4l0 5l0 4l0 5l-1 4l-2 4l-2 5l-2 4l-2 3l-2 4l-2 3M735 199l0 -1l0 1l0 1l-1 3l0 3l1 3l0 3l0 4l1 4l0 4l1 4l1 4l0 5l1 4l1 4l1 5l1 4l1 5l1 4l0 5l0 4l0 5l-1 4l-1 4l-3 4l-2 4l-2 4l-2 4l-1 3l-2 3M736 199l1 0l2 0l1 -1l2 1l1 0l2 2l1 3l0 3l1 3l1 3l1 4l1 4l1 4l1 4l0 4l1 4l1 5l1 4l0 4l1 5l1 4l0 5l0 4l0 5l-1 4l-1 5l-2 4l-3 3l-3 4l-2 3l-2 4l-1 4l0 3M736 199l3 0l3 0l3 1l3 0l3 1l2 2l2 3l2 3l1 3l2 4l1 3l1 4l1 4l1 4l1 4l1 5l1 4l0 4l0 5l1 4l0 5l0 4l0 4l-1 5l-1 4l-1 4l-3 4l-3 3l-3 4l-3 3l-1 4l-1 4l0 3M737 199l4 1l4 0l3 1l4 1l4 1l3 3l2 3l2 3l2 3l2 4l2 4l1 4l2 4l1 4l1 4l0 4l1 4l0 5l1 4l0 5l0 4l-1 4l0 5l-1 4l-1 4l-2 4l-2 4l-4 3l-3 3l-3 3l-2 4l0 4l1 4M733 200l-4 0l-5 1l-4 1l-4 2l-4 1l-4 3l-3 3l-2 4l-2 4l-1 4l-1 4l-1 4l0 5l0 4l1 5l1 4l1 4l1 4l2 4l2 4l2 4l2 4l1 4l1 5l1 4l0 4l0 5l-1 4l-1 4l-1 5l-2 4l-3 3l-3 3M737 200l4 1l4 1l4 1l5 1l3 2l4 3l2 3l3 4l2 3l2 4l2 4l1 4l2 4l1 4l1 4l0 5l1 4l0 4l1 4l0 5l-1 4l0 4l-1 4l-1 5l-1 4l-1 4l-3 3l-3 3l-4 3l-3 3l-1 3l0 5l0 4"/><path d="M777 267l-3 7l-10 6l-14 3l-15 0l-14 -3l-9 -6l-4 -8l4 -7l9 -6l14 -3l15 0l14 3l10 6zM777 276l-4 7l-9 6l-13 3l-15 -1l-13 -3l-9 -6l-3 -7l3 -8l9 -5l14 -3l14 0l14 4l9 6zM774 285l-4 7l-8 5l-13 2l-13 0l-12 -4l-9 -5l-2 -7l3 -7l8 -5l13 -2l13 0l13 4l8 5zM769 293l-3 6l-8 5l-11 2l-12 0l-11 -3l-8 -5l-2 -6l2 -6l8 -5l11 -2l13 0l11 3l7 5zM777 262l0 5l0 6l-1 5l-1 5l-3 5l-3 5l-3 4M760 277l0 5l0 5l0 5l-1 4l-2 4l-2 4l-2 4M724 277l1 5l1 4l1 5l0 4l0 4l0 4l0 5M707 262l1 5l2 5l1 4l1 5l1 5l1 5l0 5M724 247l2 5l1 5l1 6l0 5l0 6l0 5l-1 6M760 247l0 5l1 6l0 6l-2 5l-1 6l-3 5l-2 5M707 262l1 5l2 5l1 4l1 5l1 5l1 5l0 5M777 262l0 5l0 6l-1 5l-1 5l-3 5l-3 5l-3 4"/><path d="M765 314l-2 3l-4 2l-7 3l-10 2l-10 1l-10 1l-10 -1l-7 -1l-5 -1l-2 -2l1 -3l5 -2l7 -3l9 -1l11 -2l10 0l10 0l7 1l5 1zM775 315l-2 4l-6 3l-9 3l-12 3l-13 2l-13 1l-12 1l-9 -1l-7 -2l-2 -3l1 -3l6 -3l9 -4l12 -2l13 -3l13 -1l12 0l10 1l6 2zM784 318l-2 4l-7 4l-11 4l-14 4l-16 2l-16 2l-14 0l-12 -1l-7 -2l-3 -3l2 -4l7 -4l11 -4l14 -4l15 -2l16 -2l15 0l11 1l8 2zM791 324l-2 5l-8 4l-13 5l-16 3l-18 3l-18 1l-17 0l-13 -1l-9 -3l-3 -3l2 -5l8 -4l13 -5l16 -3l18 -3l18 -1l17 0l13 1l9 3zM796 333l-3 5l-9 4l-14 5l-18 3l-20 3l-20 1l-18 -1l-15 -2l-9 -3l-4 -4l3 -5l9 -5l14 -4l18 -3l20 -3l20 -1l18 1l15 2l10 3zM799 342l-3 5l-10 5l-15 5l-19 3l-21 2l-22 1l-19 -1l-16 -2l-10 -4l-4 -4l3 -5l10 -5l15 -5l19 -3l22 -2l21 -1l19 1l16 2l10 4zM801 352l-4 5l-10 5l-15 5l-20 3l-22 2l-23 1l-20 -1l-16 -3l-10 -3l-4 -5l3 -5l10 -5l16 -5l20 -3l22 -2l22 -1l20 1l16 3l11 3zM801 362l-3 5l-10 5l-16 5l-20 3l-23 2l-23 1l-20 -1l-17 -3l-10 -4l-4 -5l3 -5l10 -5l16 -4l21 -4l22 -2l23 0l20 1l17 2l10 4zM801 372l-3 5l-10 5l-16 5l-21 3l-22 2l-23 1l-21 -1l-16 -3l-11 -4l-4 -5l3 -5l11 -5l16 -5l20 -3l23 -2l23 -1l20 1l17 3l10 4zM801 382l-3 5l-10 5l-16 5l-21 3l-22 2l-23 1l-21 -2l-16 -2l-11 -4l-4 -5l3 -5l11 -5l16 -5l20 -3l23 -2l22 -1l21 1l17 3l10 4zM801 392l-3 5l-10 5l-16 4l-21 4l-22 2l-23 0l-20 -1l-17 -2l-10 -4l-4 -5l3 -5l10 -5l16 -5l20 -3l23 -2l23 -1l20 1l16 3l11 4zM801 401l-4 6l-10 5l-16 4l-20 3l-22 2l-22 1l-21 -1l-16 -3l-10 -4l-4 -4l3 -5l10 -6l16 -4l20 -3l22 -2l23 -1l20 1l16 3l11 4zM800 411l-3 5l-10 5l-16 5l-20 3l-22 2l-22 1l-20 -2l-16 -2l-10 -4l-4 -5l3 -5l10 -5l16 -4l20 -3l22 -2l22 -1l20 1l16 3l10 4zM800 421l-3 5l-10 5l-16 4l-19 4l-22 2l-22 0l-20 -1l-16 -2l-10 -4l-4 -5l3 -5l10 -5l16 -4l19 -3l22 -2l22 -1l20 1l16 3l10 4zM801 431l-3 5l-10 5l-16 4l-19 4l-22 2l-22 0l-20 -1l-16 -3l-10 -3l-4 -5l3 -5l10 -5l15 -4l20 -4l22 -2l22 0l20 1l16 3l10 3zM802 441l-4 5l-9 5l-16 4l-19 3l-22 2l-22 1l-20 -1l-15 -3l-11 -4l-3 -4l3 -5l10 -5l15 -5l20 -3l21 -2l22 0l20 1l16 3l10 3zM802 451l-3 5l-9 4l-16 5l-19 3l-21 2l-22 0l-19 -1l-16 -3l-10 -3l-4 -5l4 -5l9 -5l15 -4l20 -3l21 -2l22 0l19 1l16 2l10 4zM803 461l-3 4l-10 5l-14 4l-19 3l-21 2l-21 0l-19 -1l-15 -3l-10 -3l-4 -5l3 -5l10 -4l15 -4l18 -3l21 -2l21 0l19 1l16 2l9 4zM803 470l-3 5l-9 4l-14 4l-19 3l-20 2l-20 0l-19 -2l-14 -2l-10 -4l-3 -4l3 -5l9 -4l15 -4l18 -3l20 -1l20 0l19 1l14 2l10 4zM803 480l-3 5l-9 4l-13 3l-18 3l-19 1l-20 0l-18 -1l-14 -3l-9 -4l-3 -4l3 -4l9 -4l14 -4l17 -2l20 -2l19 0l18 2l14 3l9 3zM803 490l-3 4l-8 4l-14 3l-16 3l-19 1l-19 -1l-17 -1l-13 -3l-9 -3l-3 -4l3 -5l9 -4l13 -3l17 -2l18 -1l19 0l17 2l13 3l9 3zM803 500l-3 4l-8 4l-13 3l-16 1l-18 1l-18 0l-16 -2l-12 -3l-9 -3l-3 -4l3 -4l8 -4l13 -3l16 -2l18 0l18 0l16 2l13 3l8 3zM760 314l7 1l8 0l7 2l7 4l4 6l3 6l2 8l2 7l1 7l0 8l0 7l0 8l0 7l0 8l0 7l-1 8l0 7l0 8l1 7l0 8l1 7l1 8l0 7l0 8l0 7l0 8l0 7l0 8l0 7M759 316l7 1l7 2l7 2l6 4l5 6l2 7l2 7l2 8l1 7l0 8l0 8l0 7l0 7l0 8l-1 7l0 8l0 7l0 8l0 7l1 8l1 7l0 7l1 8l0 7l0 8l0 7l0 7l0 8l0 7M755 318l6 2l6 2l7 3l5 4l3 7l3 7l1 7l1 8l1 8l0 7l0 8l0 7l0 8l0 7l-1 7l0 8l0 7l0 8l1 7l0 8l1 7l1 7l0 7l1 8l0 7l0 7l1 7l0 7l0 7M748 320l5 3l5 2l5 4l4 4l2 7l1 7l1 8l0 7l1 8l0 8l0 7l0 8l0 7l0 7l0 8l-1 7l0 8l1 7l0 7l1 8l1 7l1 7l1 8l0 7l1 6l1 7l0 7l1 7l1 7M740 321l3 4l4 3l2 4l3 5l1 7l-1 7l0 7l0 8l0 7l0 8l-1 8l0 7l0 8l0 7l0 7l0 8l1 7l0 7l0 8l1 7l1 7l1 8l2 7l1 6l1 7l1 7l2 6l1 7l1 7M731 322l1 4l1 4l1 5l1 5l-1 6l-2 7l-1 7l-1 8l-1 8l0 7l0 8l-1 7l1 8l0 7l0 7l0 8l1 7l0 7l1 8l0 7l2 7l1 7l2 7l1 7l2 7l2 6l2 7l2 6l1 6M722 323l-1 4l-1 4l-1 5l-2 6l-2 6l-3 6l-2 7l-2 8l-1 7l-1 8l0 7l0 8l0 7l0 7l1 8l0 7l0 7l1 8l1 7l1 8l1 7l2 7l2 7l2 6l2 7l3 6l2 6l3 7l2 6M714 322l-3 5l-3 5l-3 5l-3 5l-4 6l-4 6l-4 6l-2 8l-1 7l-1 8l-1 7l0 8l0 7l1 7l0 8l1 7l0 7l1 8l1 7l1 7l1 8l2 7l3 6l2 7l3 6l3 6l3 7l3 6l3 6M708 321l-5 5l-5 5l-4 5l-5 5l-5 5l-5 6l-4 6l-3 7l-2 7l-1 8l0 7l0 8l0 7l0 8l1 7l1 7l1 8l0 7l1 8l1 7l2 7l2 7l2 7l4 6l3 7l3 6l4 6l3 6l4 6M704 320l-6 4l-6 5l-6 5l-5 4l-6 5l-6 5l-4 6l-3 7l-2 8l-1 7l-1 8l0 7l0 7l1 8l0 7l1 8l1 7l1 7l1 8l1 7l1 7l3 7l3 7l3 7l4 6l3 6l4 6l4 7l4 6M702 318l-6 4l-6 4l-7 4l-6 5l-5 4l-6 5l-5 6l-3 7l-2 7l-1 7l-1 8l0 7l0 8l1 7l1 7l0 8l1 7l1 8l1 7l1 7l2 8l2 7l3 7l3 6l4 7l4 6l4 6l4 7l4 6M703 316l-6 4l-6 3l-6 4l-5 4l-6 4l-5 5l-5 5l-3 7l-2 7l-1 7l-1 7l0 8l1 7l0 8l1 7l1 8l1 7l0 8l1 7l1 7l2 8l2 7l3 7l4 7l3 6l4 7l4 6l4 7l4 6M707 314l-5 3l-5 3l-5 3l-5 3l-5 4l-4 5l-4 5l-3 7l-2 7l-1 7l0 7l-1 8l1 7l0 8l1 7l1 8l0 7l1 8l1 7l1 8l2 7l2 7l3 7l3 7l3 7l4 7l3 6l4 7l4 7M714 312l-4 2l-4 2l-3 3l-4 3l-4 4l-3 4l-3 6l-3 6l-1 7l-1 7l0 8l0 7l0 8l0 7l1 8l0 7l1 8l1 7l0 8l1 7l2 8l2 7l2 7l3 7l3 7l4 7l3 7l3 7l3 7M722 311l-2 1l-2 2l-2 2l-2 2l-2 4l-2 5l-2 5l-2 7l-1 7l-1 7l0 7l0 8l0 7l0 8l1 7l0 8l1 8l0 7l1 8l1 7l1 7l2 8l2 7l3 7l2 8l3 7l3 7l2 7l3 7M731 310l0 1l0 2l0 3l0 4l-1 4l-1 6l-1 7l-1 7l0 7l0 7l0 8l0 7l0 8l0 7l0 8l1 8l0 7l1 8l1 7l1 7l1 8l2 7l2 8l2 7l2 8l2 7l2 7l2 8M740 309l2 1l2 0l3 1l2 3l1 4l0 6l0 5l0 7l0 7l0 7l0 8l-1 7l0 8l1 7l0 8l0 8l0 7l0 8l1 7l1 8l1 7l1 8l1 7l2 8l1 7l2 8l1 7l2 8l1 7M748 310l4 0l4 0l5 1l3 3l3 4l1 6l1 6l1 7l0 7l0 8l0 7l0 7l0 8l0 7l0 8l0 8l0 7l0 8l1 7l0 8l1 7l1 8l1 7l1 8l1 8l1 7l1 8l1 7l1 8M754 311l6 0l6 0l6 1l5 3l4 5l2 6l2 7l1 7l1 7l0 7l0 8l0 7l-1 8l0 7l0 8l0 7l0 8l0 7l1 8l0 7l1 8l1 7l1 8l0 8l1 7l0 8l0 7l1 8l0 8M758 312l7 0l7 1l7 1l6 3l5 6l3 6l2 7l1 7l1 8l0 7l0 8l0 7l0 8l0 7l0 8l-1 7l0 8l0 7l1 8l1 7l0 8l1 7l0 8l1 7l0 8l0 7l0 8l0 8l0 7M702 318l-6 4l-6 4l-7 4l-6 5l-5 4l-6 5l-5 6l-3 7l-2 7l-1 7l-1 8l0 7l0 8l1 7l1 7l0 8l1 7l1 8l1 7l1 7l2 8l2 7l3 7l3 6l4 7l4 6l4 6l4 7l4 6M760 314l7 1l8 0l7 2l7 4l4 6l3 6l2 8l2 7l1 7l0 8l0 7l0 8l0 7l0 8l0 7l-1 8l0 7l0 8l1 7l0 8l1 7l1 8l0 7l0 8l0 7l0 8l0 7l0 8l0 7"/><path d="M703 325l0 2l-3 1l-4 1l-5 1l-3 -1l-1 -1l0 -1l3 -2l4 -1l5 -1l3 1zM698 331l-1 1l-3 2l-5 1l-4 0l-4 -1l-1 -1l1 -2l3 -2l5 -1l4 0l4 1zM693 336l-1 2l-4 2l-5 0l-5 0l-4 -1l-1 -2l1 -2l4 -1l5 -1l5 0l4 2zM688 342l-1 2l-5 2l-5 0l-6 -1l-4 -2l-1 -2l2 -1l4 -2l5 0l6 1l4 1zM684 349l-2 2l-5 1l-6 0l-6 -2l-4 -2l-2 -2l2 -2l5 -1l6 0l6 1l4 2zM680 356l-2 2l-6 1l-6 -1l-7 -2l-5 -2l-1 -3l2 -2l5 -1l7 1l7 1l4 3zM677 363l-3 2l-5 1l-8 -1l-7 -2l-5 -3l-2 -3l3 -2l6 -1l7 1l7 2l5 3zM675 370l-3 2l-6 1l-8 0l-7 -2l-5 -3l-2 -3l3 -3l6 -1l7 1l8 2l5 3zM673 378l-3 2l-6 1l-7 -1l-7 -2l-6 -2l-1 -3l2 -3l6 -1l8 1l7 2l5 3zM671 385l-2 3l-5 1l-8 -1l-7 -2l-5 -2l-1 -3l2 -2l6 -1l7 0l7 2l5 3zM671 393l-3 2l-5 1l-7 0l-6 -2l-5 -2l-2 -3l3 -2l5 -1l7 0l6 2l5 2zM670 401l-2 2l-5 1l-7 -1l-6 -1l-4 -2l-2 -3l2 -2l5 -1l7 0l6 2l5 2zM669 409l-1 1l-5 1l-6 0l-6 -1l-4 -3l-1 -2l1 -2l5 -1l6 1l6 1l4 2zM669 416l-2 2l-4 1l-6 0l-5 -2l-4 -2l-1 -2l2 -2l4 0l6 0l5 1l4 2zM669 424l-2 2l-4 1l-5 -1l-5 -1l-4 -2l-1 -2l1 -1l4 -1l6 0l5 1l4 2zM669 432l-2 1l-4 1l-5 0l-5 -1l-4 -2l-1 -2l2 -1l4 -1l5 0l5 1l4 2zM669 440l-2 1l-3 1l-5 0l-5 -1l-4 -2l-1 -1l1 -2l4 -1l5 0l5 1l4 2zM670 447l-2 2l-4 1l-5 0l-5 -1l-3 -1l-1 -2l1 -2l4 -1l5 0l5 1l3 1zM670 455l-1 2l-4 1l-5 0l-5 -1l-3 -1l-2 -2l2 -2l4 -1l5 0l5 1l3 1zM671 463l-1 1l-4 2l-5 0l-5 -1l-3 -1l-1 -2l1 -2l4 -1l5 0l5 1l3 1zM672 470l-1 2l-4 1l-4 1l-5 -1l-4 -1l-1 -2l1 -2l4 -1l5 0l5 0l3 2zM673 478l-1 2l-3 1l-5 0l-5 0l-3 -1l-2 -2l2 -2l3 -1l5 0l5 0l3 1zM706 322l-4 5l-4 4l-5 5l-4 5l-4 5l-3 5l-3 6l-2 6l-2 6l-2 6l-1 6l-1 6l-1 7l0 6l0 6l-1 7l0 6l0 6l0 7l0 6l0 6l1 7l1 6l0 6l1 6l1 7l1 6M705 324l-4 4l-5 5l-4 5l-4 5l-4 5l-4 5l-3 6l-3 6l-2 6l-1 6l-1 6l-1 7l-1 6l0 6l0 6l-1 6l0 7l0 6l0 6l0 7l1 6l0 6l1 7l1 6l1 6l1 6l1 7M703 325l-5 5l-5 5l-5 4l-4 5l-5 5l-4 5l-3 6l-3 6l-3 6l-1 6l-1 6l-1 7l0 6l0 6l0 6l0 6l0 7l0 6l0 6l1 7l0 6l1 6l0 7l1 6l1 6l1 7l1 6M699 327l-5 4l-6 5l-5 4l-5 4l-5 5l-4 5l-4 5l-4 6l-2 6l-2 7l-1 6l0 6l0 6l0 7l1 6l0 6l1 6l0 7l0 6l0 6l1 7l1 6l0 7l1 6l1 7l1 6l1 6M695 327l-6 4l-5 5l-6 4l-5 4l-5 4l-6 5l-4 5l-4 5l-3 6l-1 7l-1 6l0 6l1 7l0 6l1 6l1 7l0 6l1 7l0 6l0 6l1 7l1 7l1 6l1 7l1 6l1 6l1 7M691 327l-5 4l-6 4l-5 3l-6 4l-6 4l-5 4l-5 5l-4 5l-3 6l-1 7l-1 6l0 7l1 6l1 7l1 6l1 7l0 6l1 7l0 6l1 7l0 6l1 7l1 7l1 6l1 7l1 6l1 7M690 326l-6 4l-5 3l-6 4l-5 3l-6 4l-5 4l-5 4l-5 5l-2 6l-2 7l-1 6l1 7l0 7l1 6l1 7l1 6l1 7l1 7l0 6l1 7l0 7l1 6l1 7l1 6l1 7l1 6l1 7M691 324l-6 4l-5 3l-6 4l-5 3l-5 4l-5 4l-5 4l-4 5l-3 6l-1 7l-1 6l0 7l1 7l0 6l1 7l1 7l1 6l0 7l1 7l0 6l1 7l0 6l1 7l1 7l1 6l1 7l1 6M693 323l-5 3l-5 4l-5 3l-5 4l-5 4l-4 4l-5 4l-3 5l-3 6l-2 7l0 6l0 7l0 7l0 6l1 7l1 7l0 6l0 7l1 7l0 6l1 7l0 6l1 7l1 7l1 6l1 7l1 6M697 321l-4 4l-5 4l-5 4l-4 4l-5 4l-4 4l-4 5l-3 5l-2 6l-2 6l-1 7l0 6l0 7l0 7l0 6l0 7l1 7l0 6l0 7l0 6l1 7l0 6l1 7l1 6l1 7l1 6l0 7M701 321l-4 4l-4 4l-5 4l-4 5l-4 4l-4 5l-3 5l-3 5l-2 6l-2 6l-1 7l0 6l-1 7l0 6l0 7l0 6l0 7l0 6l0 7l0 6l1 7l0 6l1 7l1 6l0 6l1 7l1 6M705 321l-5 4l-4 5l-4 4l-4 5l-4 5l-3 5l-3 5l-3 6l-2 6l-1 6l-2 6l0 7l-1 6l0 7l-1 6l0 6l0 7l0 6l0 7l0 6l0 6l1 7l0 6l1 6l1 7l1 6l1 6M690 326l-6 4l-5 3l-6 4l-5 3l-6 4l-5 4l-5 4l-5 5l-2 6l-2 7l-1 6l1 7l0 7l1 6l1 7l1 6l1 7l1 7l0 6l1 7l0 7l1 6l1 7l1 6l1 7l1 6l1 7M706 322l-4 5l-4 4l-5 5l-4 5l-4 5l-3 5l-3 6l-2 6l-2 6l-2 6l-1 6l-1 6l-1 7l0 6l0 6l-1 7l0 6l0 6l0 7l0 6l0 6l1 7l1 6l0 6l1 6l1 7l1 6"/><path d="M793 318l-2 2l-5 1l-6 0l-6 -1l-2 -2l2 -2l5 -1l7 -1l5 1zM799 320l-1 3l-6 2l-7 1l-5 -1l-3 -2l2 -3l6 -2l6 0l6 0zM806 324l-2 2l-6 3l-7 1l-7 -1l-2 -2l2 -2l5 -3l8 -1l6 1zM811 328l-2 3l-6 3l-8 1l-7 0l-3 -2l2 -3l6 -3l8 -2l7 0zM815 333l-2 4l-7 3l-8 1l-7 0l-3 -2l2 -4l6 -3l9 -1l7 0zM816 340l-2 3l-7 3l-8 2l-7 -1l-3 -2l2 -3l6 -3l9 -2l7 1zM816 347l-2 3l-6 3l-9 1l-6 0l-3 -2l2 -4l6 -2l8 -2l7 1zM815 354l-2 3l-6 2l-7 2l-7 -1l-3 -2l2 -3l6 -3l8 -1l6 1zM814 361l-2 2l-5 3l-7 1l-6 0l-3 -2l2 -3l5 -3l8 -1l6 1zM813 368l-1 2l-6 2l-6 1l-6 0l-2 -2l1 -3l5 -2l7 -1l6 1zM812 374l-1 3l-5 2l-7 1l-5 -1l-2 -2l2 -2l4 -2l7 -1l5 1zM811 381l-1 3l-5 1l-6 1l-5 0l-2 -2l2 -2l4 -2l6 -1l5 1zM810 388l-1 2l-5 2l-5 1l-4 -1l-2 -2l1 -2l4 -1l6 -1l4 1zM810 395l-2 2l-4 2l-5 0l-4 -1l-2 -1l2 -2l4 -1l5 -1l4 1zM810 402l-4 3l-8 0l-4 -2l4 -2l8 -1zM811 409l-4 3l-8 0l-4 -2l4 -3l8 0zM812 416l-2 2l-4 1l-5 0l-4 -1l-1 -2l1 -1l4 -2l5 0l4 1zM813 423l-1 1l-4 1l-6 1l-4 -2l-1 -1l1 -2l4 -1l5 0l5 1zM790 316l5 2l5 3l5 2l4 3l4 4l3 4l0 6l0 5l0 6l-1 5l-1 5l-1 6l0 5l-1 6l-1 5l-1 5l0 6l0 5l0 6l1 5l1 5l1 6l1 5M788 318l5 3l5 2l5 3l4 3l4 4l2 5l1 5l0 5l0 6l-1 5l-1 5l0 5l-1 6l-1 5l-1 5l0 5l-1 6l0 5l1 5l0 6l1 5l1 5l1 6M783 319l5 3l4 3l5 3l4 4l4 4l2 5l0 5l1 5l-1 5l0 6l0 5l-1 5l0 5l-1 5l0 5l-1 5l0 5l0 5l1 6l0 5l1 5l1 6l1 5M777 319l4 4l5 3l4 3l4 4l3 5l1 5l1 5l0 5l1 5l0 5l0 5l0 5l0 5l-1 5l0 5l0 5l0 5l0 5l1 5l1 5l0 5l1 6l1 5M772 318l4 4l4 3l4 4l3 4l3 4l1 5l1 5l1 5l0 5l0 5l1 5l0 5l0 5l0 5l0 5l1 5l0 5l0 5l1 5l1 5l0 6l1 5l1 5M770 316l4 3l3 4l4 4l3 4l2 4l2 5l1 5l1 5l0 5l1 5l0 5l1 5l0 5l0 5l0 6l1 5l0 5l1 5l0 5l1 5l1 5l0 5l1 5M772 314l4 3l3 3l4 4l3 4l2 4l2 5l1 5l1 5l0 5l0 5l1 6l0 5l0 5l1 5l0 5l0 6l0 5l1 5l1 5l0 5l1 5l1 5l1 5M777 313l4 3l4 2l4 3l3 4l3 4l2 4l0 6l1 5l0 5l0 6l0 5l0 5l0 6l0 5l0 6l0 5l0 5l1 6l0 5l1 5l1 5l1 5l1 5M783 313l4 2l5 3l4 2l4 3l3 4l2 5l1 5l0 6l0 5l0 5l-1 6l0 5l0 6l-1 5l0 6l0 5l0 6l0 5l0 5l1 6l1 5l1 5l1 5M788 314l5 2l4 3l5 2l4 3l4 3l2 5l1 6l0 5l0 6l-1 5l-1 5l0 6l-1 5l0 6l-1 5l-1 6l0 5l0 6l0 5l1 5l1 6l1 5l1 5M770 316l4 3l3 4l4 4l3 4l2 4l2 5l1 5l1 5l0 5l1 5l0 5l1 5l0 5l0 5l0 6l1 5l0 5l1 5l0 5l1 5l1 5l0 5l1 5M790 316l5 2l5 3l5 2l4 3l4 4l3 4l0 6l0 5l0 6l-1 5l-1 5l-1 6l0 5l-1 6l-1 5l-1 5l0 6l0 5l0 6l1 5l1 5l1 6l1 5"/><path d="M650 443l-1 -3l0 -6l0 -8l0 -6l1 -3l1 3l1 6l0 8l-1 6zM651 448l-1 -3l0 -8l2 -9l2 -7l1 -3l1 3l-1 8l-1 9l-2 7zM651 453l0 -3l1 -9l3 -11l3 -8l2 -3l0 3l-1 9l-3 11l-3 8zM652 459l-1 -5l3 -10l4 -12l4 -9l3 -3l0 4l-3 10l-4 12l-4 9zM652 464l0 -5l4 -11l5 -14l5 -10l3 -4l0 5l-3 11l-5 14l-5 10zM654 469l0 -5l4 -13l6 -15l6 -11l4 -4l0 5l-4 13l-7 15l-6 11zM656 474l0 -6l5 -13l7 -17l7 -12l4 -5l-1 6l-4 14l-7 16l-7 13zM658 479l0 -6l5 -15l8 -18l8 -13l4 -5l0 6l-5 15l-8 18l-8 13zM660 484l1 -7l6 -16l8 -19l8 -14l5 -5l0 7l-6 15l-9 19l-8 15zM663 488l1 -7l6 -17l9 -20l9 -16l5 -5l-1 8l-6 16l-9 20l-9 16zM666 492l1 -7l6 -18l10 -21l9 -17l6 -5l-1 7l-6 18l-10 21l-9 17zM670 496l1 -8l6 -19l10 -22l10 -17l5 -6l0 8l-7 19l-10 22l-9 17zM675 499l0 -8l7 -19l10 -23l9 -18l6 -6l0 8l-7 19l-10 23l-10 18zM679 501l1 -8l6 -20l10 -23l10 -19l6 -6l0 8l-7 20l-10 24l-10 18zM684 503l1 -9l6 -20l10 -24l10 -18l6 -7l-1 9l-6 20l-10 24l-10 19zM690 504l0 -9l6 -20l10 -24l10 -19l6 -6l-1 8l-6 20l-10 25l-10 19zM695 505l0 -9l6 -20l10 -25l10 -19l5 -6l0 8l-6 21l-10 24l-9 19zM700 505l0 -9l6 -20l10 -25l9 -19l6 -6l0 9l-6 20l-10 24l-9 19zM706 505l0 -9l6 -20l9 -24l9 -20l6 -6l0 9l-6 20l-9 24l-10 19zM711 505l0 -9l6 -20l9 -25l9 -19l6 -6l0 9l-6 20l-9 24l-9 19zM716 504l0 -8l6 -21l9 -24l9 -19l5 -6l0 8l-5 21l-9 24l-9 19zM722 504l0 -9l5 -20l9 -24l9 -19l5 -7l0 9l-5 20l-9 24l-9 19zM727 503l0 -8l5 -20l9 -24l9 -19l5 -7l0 9l-5 20l-9 24l-9 19zM732 503l0 -9l5 -20l9 -24l8 -19l6 -6l0 8l-5 20l-9 24l-8 19zM738 502l-1 -8l5 -20l9 -24l8 -19l6 -7l0 9l-5 20l-9 24l-8 19zM743 502l0 -9l5 -20l8 -24l8 -19l5 -6l0 8l-4 20l-9 24l-8 19zM748 501l0 -8l5 -20l8 -24l8 -19l5 -7l0 8l-4 21l-8 24l-9 19zM753 501l0 -9l5 -20l8 -24l8 -19l5 -7l0 9l-5 20l-7 24l-8 19zM759 500l-1 -8l5 -20l7 -25l8 -19l5 -6l1 8l-5 20l-7 24l-8 20zM764 500l0 -9l4 -20l7 -24l8 -20l5 -6l1 8l-5 20l-7 25l-8 19zM769 499l0 -8l4 -21l7 -24l8 -19l5 -7l0 8l-4 21l-7 24l-8 19zM775 499l-1 -9l4 -20l7 -25l8 -19l5 -7l0 9l-4 20l-7 24l-7 20zM780 498l-1 -8l4 -21l7 -24l7 -19l5 -7l1 8l-4 21l-7 24l-7 19zM785 498l0 -9l3 -20l7 -24l7 -19l5 -7l1 8l-4 20l-7 25l-7 19zM791 497l-1 -8l3 -20l7 -24l7 -18l5 -7l0 8l-3 20l-7 24l-7 19zM796 497l-1 -8l4 -19l6 -23l6 -18l5 -7l0 8l-3 19l-6 23l-7 18zM801 496l-1 -7l3 -18l6 -22l6 -17l4 -6l1 7l-3 18l-6 22l-6 17zM807 496l-1 -7l2 -17l5 -21l5 -16l4 -6l1 7l-2 17l-5 21l-6 16zM812 495l-1 -6l2 -16l4 -19l5 -15l3 -6l1 7l-2 15l-4 20l-5 15zM817 495l-1 -6l2 -15l3 -18l4 -14l3 -5l1 6l-1 15l-4 18l-4 14zM823 495l-2 -6l1 -13l3 -17l3 -13l2 -5l2 5l-1 14l-3 17l-3 13zM828 494l-1 -5l0 -12l1 -15l3 -12l2 -5l1 5l0 12l-2 15l-2 13zM833 493l-1 -4l-1 -11l1 -13l1 -11l2 -4l1 4l1 11l-1 13l-1 11zM838 492l-1 -3l-1 -10l-1 -12l1 -9l1 -4l1 3l2 10l0 12l0 10zM650 440l0 6l1 6l0 6l1 6l2 6l2 5l3 6l3 5l3 5l4 4l5 4l6 3l5 1l6 1l6 1l6 0l6 0l6 -1l6 0l6 -1l6 0l6 -1l6 0l6 -1l6 -1l6 0l6 -1l6 0l6 -1l6 -1l6 0l6 -1l6 0l6 -1l6 0l6 -1l6 0l6 -1l6 -1M650 440l0 5l1 6l0 6l1 6l2 6l2 5l2 5l3 5l4 5l4 5l4 3l6 3l6 1l6 1l6 1l6 0l6 0l6 -1l6 0l6 -1l5 0l6 -1l6 0l6 -1l6 0l6 -1l6 -1l6 0l6 -1l6 0l6 -1l6 0l6 0l6 -1l6 0l6 -1l6 0l6 -1l6 -1M649 439l1 5l0 6l1 5l1 6l2 5l2 5l3 5l3 5l3 4l4 5l5 3l5 2l6 2l6 1l6 1l6 0l6 -1l6 0l6 0l6 -1l6 0l6 -1l6 0l6 -1l6 -1l5 0l6 -1l6 0l6 -1l6 0l6 -1l6 0l6 0l6 0l6 0l6 0l6 0l6 -1l6 0M649 437l1 5l1 5l1 5l1 5l2 5l2 4l3 5l3 5l4 4l4 4l5 3l5 2l6 1l6 1l5 1l6 0l6 0l6 -1l6 0l6 0l6 -1l6 0l6 -1l6 -1l6 0l5 -1l6 -1l6 0l6 -1l6 0l6 0l6 0l6 0l5 1l6 0l6 0l6 1l5 0l6 0M648 434l2 5l1 4l2 5l1 4l3 4l2 5l3 4l4 4l3 3l5 4l4 3l6 2l5 1l6 1l6 0l6 1l6 -1l5 0l6 0l6 -1l6 0l6 -1l6 0l6 -1l5 -1l6 0l6 -1l6 0l6 -1l5 0l6 0l6 0l6 1l5 1l6 1l5 1l6 1l5 1l5 0M648 432l2 3l2 4l2 4l2 4l3 3l3 4l3 4l4 3l4 3l4 3l5 3l5 1l6 1l5 1l6 1l6 0l6 0l6 -1l5 0l6 0l6 -1l6 0l5 -1l6 0l6 -1l6 -1l5 -1l6 0l6 -1l6 0l5 1l6 1l5 1l6 1l5 2l5 1l5 2l5 1l5 2M648 429l2 3l3 3l2 3l3 3l3 3l4 3l4 3l3 3l5 2l4 3l5 2l5 1l6 1l5 1l6 0l6 1l5 0l6 -1l6 0l6 -1l5 0l6 0l6 -1l5 -1l6 0l6 -1l5 -1l6 -1l6 0l5 0l6 1l5 1l5 2l5 2l5 2l5 3l4 2l5 2l4 2M647 426l4 2l3 3l3 2l4 2l3 3l4 2l4 2l4 3l5 2l4 2l5 1l6 1l5 1l6 1l5 0l6 0l6 0l5 0l6 0l5 -1l6 0l6 -1l5 0l6 -1l5 0l6 -1l5 -1l6 -1l6 0l5 0l6 1l5 2l5 2l4 3l5 3l4 3l4 3l4 3l4 3M647 423l4 2l4 2l4 1l4 2l4 2l4 2l5 2l4 1l5 2l5 1l5 2l5 0l5 1l6 1l5 0l6 0l6 0l5 0l6 0l5 -1l6 0l5 -1l6 0l5 -1l6 -1l5 -1l6 0l5 -1l6 -1l5 0l6 2l4 2l5 3l4 4l4 3l4 3l4 4l3 4l4 3M647 420l5 2l4 1l5 2l4 1l5 1l4 2l5 1l5 1l5 1l5 1l5 1l5 1l6 0l5 1l5 0l6 0l5 0l6 0l5 0l6 -1l5 0l6 -1l5 0l6 -1l5 -1l5 -1l6 0l5 -1l6 -1l5 0l6 2l4 3l4 3l4 4l4 4l3 4l4 4l3 4l3 4M647 419l5 1l5 1l5 1l5 1l5 1l5 1l5 0l5 1l5 1l5 1l5 1l6 0l5 1l5 0l6 0l5 0l6 0l5 0l6 0l5 -1l5 0l6 -1l5 0l6 -1l5 -1l5 0l6 -1l5 -1l6 -1l5 1l5 1l4 4l4 3l4 4l3 4l4 5l3 4l2 5l3 5M648 417l5 1l5 1l5 1l5 1l6 0l5 1l5 1l5 1l6 0l5 1l5 0l5 1l6 0l5 1l6 0l5 0l5 0l6 0l5 -1l6 0l5 -1l5 0l6 -1l5 0l5 -1l6 -1l5 -1l5 -1l6 0l5 0l5 2l4 3l4 4l4 4l3 5l3 4l2 5l3 5l2 5M648 417l5 1l6 1l5 0l5 1l6 1l5 1l5 0l6 1l5 1l5 0l6 1l5 0l6 0l5 1l5 0l6 0l5 0l6 0l5 0l5 -1l6 0l5 -1l5 -1l6 0l5 -1l5 -1l6 -1l5 -1l5 0l6 0l5 2l4 3l4 4l3 5l3 4l3 5l2 4l3 5l2 5M648 417l6 1l5 1l5 1l6 1l5 1l5 1l6 1l5 1l6 0l5 1l5 0l6 1l5 0l6 1l5 0l5 0l6 0l5 0l6 -1l5 0l5 -1l6 0l5 -1l6 0l5 -1l5 -1l6 -1l5 -1l5 -1l6 1l5 1l4 4l3 4l4 4l3 4l2 5l3 4l2 5l3 5M649 418l5 2l5 1l5 1l6 2l5 1l5 1l5 1l6 1l5 1l5 1l6 1l5 0l6 1l5 0l6 0l5 0l5 0l6 0l5 0l6 -1l5 0l6 -1l5 -1l5 0l6 -1l5 -1l5 -1l6 -1l5 0l6 0l5 2l4 3l3 3l4 4l3 4l3 4l2 5l3 4l2 4M649 420l5 2l5 2l5 2l5 1l5 2l5 2l5 1l5 1l5 2l6 1l5 1l6 1l5 0l6 1l5 0l6 0l5 0l6 0l5 -1l6 0l5 -1l5 0l6 -1l5 -1l6 -1l5 0l6 -1l5 -1l5 -1l6 0l5 2l4 3l4 3l3 3l4 4l3 4l3 3l2 4l3 4M650 423l4 2l4 2l5 3l4 2l5 2l5 2l5 2l5 2l5 2l5 2l5 1l6 1l6 1l5 0l6 0l5 0l6 0l5 0l6 0l5 -1l6 0l5 -1l6 -1l5 0l6 -1l5 -1l6 -1l5 -1l6 0l5 0l6 1l4 2l4 3l4 3l3 3l4 3l3 3l3 4l3 3M650 425l4 3l4 3l4 3l4 3l4 3l4 3l5 3l5 2l5 2l5 2l5 2l6 1l5 1l6 1l5 0l6 0l6 0l5 0l6 -1l5 0l6 -1l6 0l5 -1l6 -1l5 -1l6 0l6 -1l5 -1l6 -1l5 0l6 1l4 2l4 2l4 3l4 2l4 3l3 2l4 3l3 2M650 428l4 4l3 4l3 3l3 4l4 4l4 3l5 3l4 3l5 3l5 3l5 2l5 1l6 1l6 1l6 0l5 0l6 0l6 0l5 -1l6 0l6 -1l5 0l6 -1l6 -1l5 0l6 -1l6 -1l5 -1l6 0l6 -1l5 1l5 2l4 1l5 2l4 2l4 1l4 2l4 2l4 2M651 431l2 5l3 4l2 4l3 5l3 4l4 4l4 4l4 3l5 4l4 3l6 2l5 2l6 1l6 1l5 0l6 0l6 0l6 0l5 -1l6 0l6 -1l6 0l5 -1l6 -1l6 0l6 -1l5 -1l6 -1l6 0l6 0l5 0l5 1l5 1l5 1l5 1l4 1l4 1l5 2l4 0M651 434l2 5l2 5l2 5l2 5l3 5l3 4l3 5l4 4l4 4l5 3l5 3l6 2l5 1l6 1l6 1l6 0l6 0l6 -1l5 0l6 -1l6 0l6 -1l6 -1l6 0l5 -1l6 -1l6 0l6 -1l6 -1l6 0l5 0l6 0l5 1l5 0l5 1l5 1l5 0l4 1l5 0M651 437l1 5l1 5l2 6l2 5l2 5l3 5l3 5l4 5l4 4l4 4l5 3l6 3l5 1l6 1l6 1l6 0l6 -1l6 0l6 -1l6 0l6 -1l5 0l6 -1l6 0l6 -1l6 -1l6 -1l6 0l6 -1l6 0l5 0l6 0l5 0l6 0l5 0l5 0l6 0l5 0l5 0M651 438l1 6l0 6l1 6l2 6l2 5l2 5l3 6l4 5l3 4l5 5l5 3l5 2l6 2l6 1l6 0l6 0l6 0l6 0l6 -1l5 0l6 -1l6 0l6 -1l6 -1l6 0l6 -1l6 -1l6 0l6 -1l6 0l6 0l6 -1l5 0l6 0l6 -1l5 0l6 0l5 -1l6 -1M650 440l1 6l1 6l0 6l1 5l2 6l2 6l3 5l3 5l4 5l4 5l5 3l5 3l6 1l6 1l6 1l6 0l6 0l6 -1l6 0l6 -1l6 0l6 -1l6 0l6 -1l6 -1l6 0l6 -1l6 0l6 -1l6 -1l6 0l6 0l5 -1l6 0l6 -1l6 0l6 -1l6 -1l6 -1M648 417l5 1l6 1l5 0l5 1l6 1l5 1l5 0l6 1l5 1l5 0l6 1l5 0l6 0l5 1l5 0l6 0l5 0l6 0l5 0l5 -1l6 0l5 -1l5 -1l6 0l5 -1l5 -1l6 -1l5 -1l5 0l6 0l5 2l4 3l4 4l3 5l3 4l3 5l2 4l3 5l2 5M650 440l0 6l1 6l0 6l1 6l2 6l2 5l3 6l3 5l3 5l4 4l5 4l6 3l5 1l6 1l6 1l6 0l6 0l6 -1l6 0l6 -1l6 0l6 -1l6 0l6 -1l6 -1l6 0l6 -1l6 0l6 -1l6 -1l6 0l6 -1l6 0l6 -1l6 0l6 -1l6 0l6 -1l6 -1"/><path d="M838 441l-95 -9l-95 -13l95 9zM838 443l-95 -8l-95 -13l96 9zM838 445l-95 -8l-94 -11l95 8zM838 448l-94 -8l-95 -11l95 8zM839 450l-95 -7l-95 -10l95 6zM839 452l-95 -6l-94 -10l94 6zM839 454l-95 -5l-94 -9l95 5zM839 456l-94 -4l-95 -9l95 5zM839 458l-94 -4l-94 -7l94 4zM839 461l-94 -4l-94 -7l94 3zM839 463l-94 -3l-94 -6l94 2zM839 465l-94 -2l-94 -6l95 2zM840 467l-94 -1l-94 -5l94 1zM840 469l-94 0l-94 -5l94 1zM840 471l-93 0l-94 -4l94 1zM840 474l-93 0l-93 -3l93 -1zM840 476l-92 1l-92 -3l92 -1zM840 478l-91 1l-92 -2l92 -1zM840 480l-90 2l-91 -2l91 -2zM840 482l-89 2l-90 -1l90 -2zM841 484l-89 3l-89 -1l89 -3zM841 487l-88 2l-88 0l88 -3zM841 489l-87 3l-87 0l87 -4zM841 491l-86 3l-86 1l86 -4zM648 417l1 8l0 7l1 8l1 7l0 8l1 8l2 7l3 7l4 6l5 7l4 6M838 440l0 5l1 4l0 5l0 5l0 5l1 4l0 5l0 5l0 5l1 4l0 5"/><path d="M650 418l9 1l8 1l9 1l8 1l9 1l8 1l9 1l8 1l9 0l8 0l9 0l8 -1l9 -1l8 -1l9 -1l8 -2l9 0l8 -1l9 0M650 419l9 1l8 1l9 1l8 1l9 1l8 1l9 1l8 1l9 0l8 0l9 0l9 -1l8 -1l9 -1l8 -2l9 -1l8 0l9 -1l8 0M650 420l9 1l8 1l9 1l8 1l9 1l8 1l9 1l8 1l9 0l9 0l8 0l9 -1l8 -1l9 -1l8 -2l9 -1l8 0l9 -1l9 0M650 421l9 1l8 1l9 1l8 1l9 1l8 1l9 1l8 1l9 0l9 0l8 0l9 -1l8 -1l9 -1l9 -2l8 -1l9 0l8 -1l9 0M650 422l9 1l8 1l9 1l8 1l9 1l8 1l9 1l9 1l8 0l9 0l8 0l9 -1l9 -1l8 -1l9 -2l8 -1l9 0l9 -1l8 0M650 423l9 1l8 1l9 1l8 1l9 1l9 1l8 1l9 1l8 0l9 0l9 0l8 -1l9 -1l8 -1l9 -2l9 -1l8 0l9 -1l8 0M650 424l9 1l8 1l9 1l8 1l9 1l9 1l8 1l9 1l9 0l8 0l9 0l8 -1l9 -1l9 -1l8 -2l9 -1l8 -1l9 0l9 0M650 425l9 1l8 1l9 1l8 1l9 1l9 1l8 1l9 1l9 0l8 0l9 0l9 -1l8 -1l9 -1l8 -2l9 -1l9 -1l8 0l9 0M650 418l0 7M659 419l0 7M667 420l0 7M676 421l0 7M684 422l0 7M693 423l0 7M701 424l1 7M710 425l0 7M718 426l1 7M727 426l1 7M735 426l1 7M744 426l1 7M752 425l2 7M761 424l1 7M769 423l2 7M778 422l1 6M786 420l2 7M795 420l2 6M803 419l2 7M812 419l2 7"/><path d="M668 495l8 5l8 3l9 2l9 0l9 0l9 -1l9 -1l9 -1l9 -1l9 -1l10 0l9 -1l9 -1l9 -1l9 -1l9 -1l9 0l9 -1l9 -1M669 494l8 5l8 3l9 2l9 0l9 -1l9 0l9 -1l9 -1l9 -1l9 -1l9 -1l9 0l9 -1l9 -1l9 -1l9 -1l9 0l9 -1l9 -1M670 493l7 5l9 3l9 2l9 0l9 -1l9 -1l9 0l8 -1l9 -1l9 -1l9 -1l9 -1l9 0l9 -1l9 -1l9 -1l9 -1l9 0l9 -1M671 492l7 5l9 4l8 1l9 0l9 -1l9 -1l9 -1l9 0l9 -1l9 -1l9 -1l9 -1l9 -1l8 0l9 -1l9 -1l9 -1l9 -1l9 0M672 491l7 5l8 4l9 1l9 -1l9 0l9 -1l9 -1l9 -1l8 -1l9 0l9 -1l9 -1l9 -1l9 0l9 -1l8 -1l9 -1l9 -1l9 -1M668 495l4 -4M676 500l3 -4M684 503l3 -3M693 505l3 -4M702 505l3 -5M711 505l3 -5M720 504l3 -5M729 503l3 -5M738 502l3 -5M747 501l2 -5M756 500l2 -4M766 500l1 -5M775 499l1 -5M784 498l1 -5M793 497l1 -4M802 496l1 -4M811 495l0 -4M820 495l0 -5M829 494l0 -5M838 493l0 -5"/><path d="M664 489l-2 -5l-3 -12l-1 -14l0 -13l2 -4l2 4l3 12l1 15l0 12zM673 490l-2 -5l-3 -11l-1 -15l0 -12l2 -5l2 4l3 12l1 15l0 12zM682 491l-2 -5l-3 -11l-1 -15l0 -12l2 -5l2 5l3 11l1 15l0 12zM691 492l-2 -5l-3 -11l-1 -15l0 -12l2 -4l2 4l3 12l1 14l0 12zM700 492l-2 -4l-2 -12l-2 -14l0 -12l2 -4l3 4l2 11l1 15l0 11zM709 492l-2 -4l-2 -11l-2 -15l1 -11l1 -5l3 5l2 11l1 14l0 11zM718 492l-2 -4l-2 -11l-1 -14l0 -12l2 -4l2 4l2 11l1 14l0 11zM727 492l-2 -5l-2 -10l-1 -14l0 -11l2 -5l2 4l2 11l1 14l0 11zM736 491l-2 -4l-2 -11l-1 -13l0 -11l2 -4l2 4l2 10l1 14l0 11zM746 491l-3 -4l-2 -11l-1 -13l1 -11l1 -4l2 4l2 10l1 14l0 11zM755 490l-3 -4l-2 -10l-1 -13l1 -11l1 -4l3 4l1 10l1 13l0 11zM764 490l-3 -4l-1 -10l-1 -13l0 -11l2 -4l2 4l2 10l0 13l0 11zM773 489l-3 -4l-1 -10l-1 -13l0 -10l2 -4l2 4l2 10l1 13l-1 10zM782 488l-3 -3l-1 -11l-1 -12l0 -11l2 -4l2 4l2 10l1 13l-1 10zM791 488l-2 -4l-2 -10l-1 -13l1 -10l1 -4l2 4l2 10l1 12l-1 11zM800 487l-2 -4l-2 -10l-1 -12l1 -11l1 -4l2 4l2 10l1 13l-1 10zM809 486l-2 -3l-2 -11l-1 -12l1 -10l2 -4l2 4l1 10l1 12l-1 10zM818 486l-2 -4l-2 -10l0 -12l0 -10l2 -4l2 4l1 10l1 12l-1 10zM827 486l-2 -3l-2 -10l0 -12l0 -10l2 -4l2 4l1 10l1 12l-1 10zM836 487l-2 -3l-2 -9l0 -12l0 -9l2 -4l2 4l1 9l1 11l-1 10zM660 488l6 1l6 1l7 0l6 1l6 1l6 0l6 0l7 0l6 0l6 0l6 0l6 -1l7 0l6 0l6 -1l6 0l7 0l6 -1l6 0l6 -1l6 0l7 -1l6 0l6 -1l6 0l6 0l7 0l6 1l6 1M658 485l6 1l6 1l6 0l7 1l6 1l6 0l6 0l7 0l6 0l6 0l6 0l7 -1l6 0l6 0l6 0l7 -1l6 0l6 0l6 -1l6 0l7 -1l6 0l6 -1l6 0l7 -1l6 0l6 1l6 1l7 1M656 476l6 1l6 1l6 1l7 1l6 0l6 1l6 0l7 0l6 0l6 0l6 0l7 0l6 -1l6 0l7 0l6 0l6 -1l6 0l7 0l6 -1l6 0l6 -1l7 0l6 -1l6 0l6 0l7 1l6 1l6 1M654 464l6 1l6 1l7 1l6 1l6 0l6 1l7 0l6 1l6 0l7 0l6 0l6 0l7 0l6 0l6 -1l7 0l6 0l6 0l7 -1l6 0l6 -1l6 0l7 0l6 -1l6 0l7 0l6 1l6 2l6 1M653 452l6 1l7 1l6 1l6 1l7 1l6 0l6 1l7 0l6 0l6 0l7 1l6 0l6 0l7 0l6 0l6 0l7 0l6 -1l6 0l7 0l6 -1l6 0l7 -1l6 0l6 0l7 0l6 1l6 2l6 2M654 443l6 1l6 1l6 1l7 1l6 1l6 1l7 0l6 1l6 0l7 0l6 0l6 1l7 0l6 0l7 0l6 0l6 0l7 0l6 -1l6 0l7 0l6 -1l6 0l7 0l6 0l6 0l7 1l6 2l6 2M655 440l6 1l7 1l6 1l6 1l6 1l7 0l6 1l6 0l7 1l6 0l7 0l6 1l6 0l7 0l6 0l6 0l7 0l6 0l6 0l7 -1l6 0l6 -1l7 0l6 0l6 0l7 0l6 2l6 2l6 2M657 443l6 1l7 1l6 1l6 1l7 1l6 0l6 1l6 0l7 1l6 0l6 0l7 0l6 0l6 1l7 0l6 0l6 0l7 0l6 -1l6 0l7 0l6 -1l6 0l7 0l6 0l6 0l7 1l6 2l5 2M659 452l7 1l6 1l6 0l6 1l7 1l6 1l6 0l6 1l7 0l6 0l6 0l7 0l6 0l6 0l6 0l7 0l6 0l6 0l7 0l6 -1l6 0l7 0l6 -1l6 0l7 0l6 0l6 1l6 2l6 2M661 464l6 0l7 1l6 1l6 1l6 1l6 0l7 1l6 0l6 0l6 0l7 0l6 0l6 0l6 0l7 0l6 0l6 0l6 -1l7 0l6 0l6 -1l7 0l6 -1l6 0l6 0l7 0l6 1l6 1l6 2M662 476l6 1l6 0l6 1l7 1l6 1l6 0l6 0l7 0l6 0l6 0l6 0l6 0l7 0l6 0l6 0l6 -1l7 0l6 0l6 -1l6 0l6 -1l7 0l6 -1l6 0l6 0l7 0l6 1l6 1l6 1M661 485l7 0l6 1l6 1l6 1l6 0l7 1l6 0l6 0l6 0l6 0l7 -1l6 0l6 0l6 0l7 -1l6 0l6 0l6 -1l6 0l7 -1l6 0l6 -1l6 0l6 -1l7 0l6 0l6 1l6 1l6 1M655 440l6 1l7 1l6 1l6 1l6 1l7 0l6 1l6 0l7 1l6 0l7 0l6 1l6 0l7 0l6 0l6 0l7 0l6 0l6 0l7 -1l6 0l6 -1l7 0l6 0l6 0l7 0l6 2l6 2l6 2M660 488l6 1l6 1l7 0l6 1l6 1l6 0l6 0l7 0l6 0l6 0l6 0l6 -1l7 0l6 0l6 -1l6 0l7 0l6 -1l6 0l6 -1l6 0l7 -1l6 0l6 -1l6 0l6 0l7 0l6 1l6 1"/><path d="M648 396l3 -3l3 -4l3 -3l3 -4l2 -3l3 -4l3 -3l3 -3l3 -4l3 -3l3 -4l3 -3l3 -3l3 -3l4 -3l3 -3l3 -3l4 -3l4 -3l3 -2l4 -3l4 -2l3 -3l4 -2l4 -2l5 -2l4 -2l4 -1l4 -2M649 397l3 -3l3 -4l3 -3l3 -4l3 -3l3 -3l3 -4l3 -3l3 -4l3 -3l3 -3l3 -4l3 -3l3 -3l3 -3l4 -3l3 -3l3 -3l4 -3l4 -2l3 -3l4 -2l4 -3l4 -2l4 -2l4 -2l4 -2l4 -2l4 -1M651 399l3 -4l3 -3l2 -4l3 -3l3 -4l3 -3l3 -4l3 -3l3 -3l3 -4l3 -3l3 -3l3 -4l3 -3l4 -3l3 -3l4 -3l3 -3l4 -3l3 -2l4 -3l4 -2l3 -3l4 -2l4 -2l4 -2l4 -2l4 -2l5 -2M652 400l3 -4l3 -3l3 -4l3 -3l3 -3l3 -4l3 -3l3 -4l2 -3l3 -4l4 -3l3 -3l3 -4l3 -3l3 -3l4 -3l3 -3l4 -3l3 -2l4 -3l3 -3l4 -2l4 -3l4 -2l4 -2l4 -2l4 -2l4 -2l4 -2M653 401l3 -3l3 -4l3 -3l3 -4l3 -3l3 -4l3 -3l3 -4l3 -3l3 -3l3 -4l3 -3l3 -3l3 -3l4 -4l3 -3l4 -3l3 -2l4 -3l3 -3l4 -3l4 -2l3 -3l4 -2l4 -2l4 -3l4 -2l4 -2l4 -2M655 402l3 -3l3 -4l3 -3l3 -3l3 -4l2 -3l3 -4l3 -3l3 -4l3 -3l3 -3l4 -4l3 -3l3 -3l3 -3l4 -3l3 -3l4 -3l3 -3l4 -3l3 -2l4 -3l4 -3l4 -2l4 -3l3 -2l4 -2l4 -2l4 -2M656 404l3 -4l3 -3l3 -4l3 -3l3 -4l3 -3l3 -4l3 -3l3 -3l3 -4l3 -3l3 -4l3 -3l3 -3l4 -3l3 -3l4 -3l3 -3l4 -3l3 -3l4 -2l4 -3l3 -3l4 -2l4 -3l4 -2l4 -2l4 -2l4 -3M658 405l3 -4l2 -3l3 -3l3 -4l3 -3l3 -4l3 -3l3 -4l3 -3l3 -4l3 -3l4 -3l3 -4l3 -3l3 -3l4 -3l3 -3l4 -3l3 -3l4 -3l4 -2l3 -3l4 -3l4 -2l3 -3l4 -2l4 -3l4 -2l4 -2M659 406l3 -3l3 -4l3 -3l3 -4l3 -3l3 -4l3 -3l3 -4l3 -3l3 -3l3 -4l3 -3l3 -3l3 -4l4 -3l3 -3l4 -3l3 -3l4 -3l3 -2l4 -3l4 -3l3 -3l4 -2l4 -3l4 -2l4 -3l3 -2l4 -3M660 407l3 -3l3 -3l3 -4l3 -3l3 -4l3 -3l3 -4l3 -3l3 -4l3 -3l3 -4l4 -3l3 -3l3 -3l3 -4l4 -3l3 -3l4 -3l3 -2l4 -3l4 -3l3 -3l4 -3l4 -2l3 -3l4 -2l4 -3l4 -3l3 -2M662 409l3 -4l3 -3l3 -4l3 -3l3 -4l3 -3l3 -4l3 -3l3 -4l3 -3l3 -3l3 -4l3 -3l4 -3l3 -3l3 -3l4 -3l3 -3l4 -3l3 -3l4 -3l4 -3l3 -3l4 -2l4 -3l3 -3l4 -2l4 -3l4 -3M663 410l3 -3l3 -4l3 -3l3 -4l3 -3l3 -4l3 -3l3 -4l3 -3l3 -4l3 -3l4 -3l3 -4l3 -3l3 -3l4 -3l3 -3l4 -3l3 -3l4 -3l4 -3l3 -3l4 -3l3 -2l4 -3l4 -3l4 -3l3 -2l4 -3M648 396l15 14M651 393l15 14M654 389l15 14M657 386l15 14M660 382l15 14M662 379l16 14M665 375l16 14M668 372l16 14M671 369l16 13M674 365l16 14M677 362l16 13M680 358l16 14M683 355l17 14M686 352l17 13M689 349l17 13M693 346l16 13M696 343l17 13M699 340l17 13M703 337l17 13M707 334l16 13M710 332l17 12M714 329l17 12M718 327l16 11M721 324l17 11M725 322l16 11M729 320l16 10M734 318l15 9M738 316l15 8M742 315l14 7M746 313l14 6"/><path d="M763 314l2 3l2 4l2 3l1 3l2 4l2 3l1 4l2 3l1 4l1 4l1 3l1 4l1 4l1 3l1 4l1 4l1 4l1 3l0 4l1 4l1 4l0 3l1 4l0 4l1 4l0 4l1 3l0 4l1 4M764 314l2 3l1 4l2 3l2 3l2 4l1 3l2 4l1 3l2 4l1 4l1 3l1 4l1 4l1 3l1 4l1 4l1 4l0 3l1 4l1 4l1 4l0 3l1 4l0 4l1 4l0 4l1 3l0 4l1 4M764 314l2 3l2 4l2 3l2 3l2 4l1 3l2 4l1 3l1 4l1 4l2 3l1 4l1 4l1 3l1 4l0 4l1 4l1 3l1 4l1 4l0 4l1 3l1 4l0 4l1 4l0 4l1 3l0 4l1 4M765 314l2 3l2 4l2 3l2 3l1 4l2 3l1 4l2 3l1 4l1 4l1 3l1 4l1 4l1 3l1 4l1 4l1 4l1 3l1 4l0 4l1 4l1 3l0 4l1 4l0 4l1 4l0 3l1 4l1 4M766 314l2 3l2 4l1 3l2 3l2 4l2 3l1 4l2 3l1 4l1 4l1 3l1 4l1 4l1 3l1 4l1 4l1 4l1 3l1 4l0 4l1 4l1 3l0 4l1 4l0 4l1 4l0 3l1 4l0 4M766 314l2 3l2 4l2 3l2 3l2 4l1 3l2 4l1 3l2 4l1 4l1 3l1 4l1 4l1 3l1 4l1 4l1 4l0 3l1 4l1 4l1 4l0 3l1 4l1 4l0 4l1 4l0 3l1 4l0 4M767 314l2 3l2 4l2 3l2 3l2 4l1 3l2 4l1 3l1 4l2 4l1 3l1 4l1 4l1 3l1 4l1 4l0 4l1 3l1 4l1 4l0 4l1 3l1 4l0 4l1 4l0 4l1 3l1 4l0 4M768 314l2 3l2 4l2 3l1 3l2 4l2 3l1 4l2 3l1 4l1 4l1 3l1 4l1 4l1 3l1 4l1 4l1 4l1 3l1 4l1 4l0 4l1 3l1 4l0 4l1 4l0 4l1 3l0 4l1 4M769 314l1 3l2 4l2 3l2 3l2 4l2 3l1 4l2 3l1 4l1 4l1 3l1 4l1 4l1 3l1 4l1 4l1 4l1 3l1 4l0 4l1 4l1 3l0 4l1 4l0 4l1 4l1 3l0 4l1 4M769 314l2 3l2 4l2 3l2 3l2 4l1 3l2 4l1 3l2 4l1 4l1 3l1 4l1 4l1 3l1 4l1 4l1 4l1 3l0 4l1 4l1 4l0 3l1 4l1 4l0 4l1 4l0 3l1 4l1 4M770 314l2 3l2 4l2 3l2 3l1 4l2 3l2 4l1 3l1 4l2 4l1 3l1 4l1 4l1 3l1 4l1 4l0 4l1 3l1 4l1 4l1 4l0 3l1 4l1 4l0 4l1 4l0 3l1 4l0 4M771 314l2 3l2 4l2 3l1 3l2 4l2 3l2 4l1 3l1 4l1 4l1 3l2 4l1 4l0 3l1 4l1 4l1 4l1 3l1 4l1 4l0 4l1 3l1 4l0 4l1 4l1 4l0 3l1 4l0 4M771 314l2 3l2 4l2 3l2 3l2 4l2 3l1 4l2 3l1 4l1 3l1 4l1 4l1 4l1 3l1 4l1 4l1 4l1 3l1 4l0 4l1 4l1 3l1 4l0 4l1 4l0 4l1 3l1 4l0 4M772 314l2 3l2 4l2 3l2 3l2 4l1 3l2 4l1 3l2 4l1 3l1 4l1 4l1 4l1 3l1 4l1 4l1 4l1 3l0 4l1 4l1 4l1 3l0 4l1 4l1 4l0 4l1 3l0 4l1 4M763 314l9 0M765 317l9 0M767 321l9 0M769 324l9 0M770 327l10 0M772 331l10 0M774 334l9 0M775 338l10 0M777 341l9 0M778 345l10 0M779 349l10 -1M780 352l10 0M781 356l10 0M782 360l10 0M783 363l10 0M784 367l10 0M785 371l10 0M786 375l10 0M787 378l10 0M787 382l10 0M788 386l10 0M789 390l10 0M789 393l11 0M790 397l10 0M790 401l11 0M791 405l11 0M791 409l11 0M792 412l11 0M792 416l11 0M793 420l11 0"/><path d="M839 465l-1 -2l0 -4l1 -2l1 2l0 4zM842 464l-1 -1l0 -4l1 -2l0 2l0 4zM844 464l-1 -2l0 -3l1 -2l1 2l0 3zM846 464l-1 -2l0 -3l1 -2l1 2l0 3zM849 464l-1 -2l0 -3l1 -2l1 1l0 4zM851 464l-1 -2l0 -4l1 -1l1 1l0 4zM853 464l-1 -2l0 -4l1 -2l1 2l0 4zM856 463l-1 -1l0 -4l1 -2l1 2l0 4zM858 463l-1 -2l0 -3l1 -2l1 2l0 3zM860 463l-1 -2l0 -3l1 -2l1 2l0 3zM863 463l-1 -2l0 -3l1 -2l1 2l0 3zM865 462l-1 -1l0 -3l1 -2l1 2l0 3zM867 462l0 -2l0 -2l0 -2l1 2l0 2zM838 465l3 -1l2 0l3 0l2 0l3 0l2 0l3 -1l2 0l3 0l2 0l3 -1l2 -1l1 -2M837 463l3 0l2 -1l3 0l2 0l3 0l2 0l3 0l2 -1l3 0l2 0l3 0l3 -1l1 -1M837 459l3 0l2 0l3 0l2 0l3 -1l2 0l3 0l2 0l3 0l2 0l3 0l3 0l1 1M838 457l3 0l2 0l3 0l2 0l3 0l2 -1l3 0l2 0l3 0l2 0l3 0l2 1l1 2M839 459l2 0l3 0l3 0l2 0l3 -1l2 0l3 0l2 0l3 0l2 0l3 0l2 0l0 1M839 463l2 0l3 -1l3 0l2 0l3 0l2 0l3 0l2 -1l3 0l2 0l3 0l2 -1l0 -1M838 457l3 0l2 0l3 0l2 0l3 0l2 -1l3 0l2 0l3 0l2 0l3 0l2 1l1 2M838 465l3 -1l2 0l3 0l2 0l3 0l2 0l3 -1l2 0l3 0l2 0l3 -1l2 -1l1 -2"/><path d="M839 476l-1 -2l0 -4l1 -2l1 2l0 4zM842 475l-1 -1l0 -4l1 -2l1 2l0 4zM844 475l-1 -2l0 -3l1 -2l1 2l0 3zM847 475l-1 -2l0 -3l0 -2l1 2l0 3zM849 475l-1 -2l0 -3l1 -2l1 1l0 4zM851 475l-1 -2l0 -4l1 -1l1 1l0 4zM854 475l-1 -2l0 -4l1 -2l1 2l0 4zM856 474l-1 -1l0 -4l1 -2l1 2l0 4zM859 474l-1 -2l0 -3l1 -2l1 2l0 3zM861 474l-1 -2l0 -3l1 -2l1 2l0 3zM863 474l0 -2l0 -3l0 -2l1 2l0 3zM866 473l-1 -1l0 -3l1 -2l1 2l0 3zM868 473l0 -2l0 -2l0 -2l1 2l0 2zM838 476l3 -1l2 0l3 0l2 0l3 0l3 0l2 -1l3 0l3 0l2 0l3 -1l2 -1l1 -2M837 474l3 0l2 -1l3 0l3 0l2 0l3 0l2 0l3 -1l3 0l2 0l3 0l3 -1l1 -1M837 470l3 0l2 0l3 0l3 0l2 -1l3 0l2 0l3 0l3 0l2 0l3 0l3 0l1 1M838 468l3 0l2 0l3 0l2 0l3 0l3 -1l2 0l3 0l3 0l2 0l3 0l2 1l1 2M839 470l3 0l2 0l3 0l2 0l3 -1l3 0l2 0l3 0l2 0l3 0l3 0l2 0l0 1M839 474l3 0l2 -1l3 0l2 0l3 0l3 0l2 0l3 -1l2 0l3 0l3 0l2 -1l0 -1M838 468l3 0l2 0l3 0l2 0l3 0l3 -1l2 0l3 0l3 0l2 0l3 0l2 1l1 2M838 476l3 -1l2 0l3 0l2 0l3 0l3 0l2 -1l3 0l3 0l2 0l3 -1l2 -1l1 -2"/><path d="M839 486l-1 -1l0 -4l1 -1l1 1l0 4zM840 486l-1 -1l0 -4l1 -1l1 1l0 4zM842 486l-1 -1l0 -4l1 -1l1 1l0 4zM843 486l-1 -1l0 -4l1 -1l1 1l0 4zM845 486l-1 -1l0 -4l1 -1l1 1l0 4zM846 486l0 -1l0 -4l0 -1l1 1l0 4zM848 486l-1 -1l0 -4l1 -1l1 1l0 4zM850 486l-1 -1l0 -4l1 -1l0 1l0 4zM851 486l-1 -1l0 -4l1 -1l1 1l0 4zM853 486l-1 -1l0 -4l1 -1l0 1l0 4zM854 486l-1 -1l0 -4l1 -1l1 1l0 4zM856 486l-1 -2l0 -2l1 -2l0 2l0 2zM857 485l-1 -1l0 -2l1 -1l0 1l0 2zM838 486l2 0l1 0l2 0l2 0l1 0l2 0l2 0l1 0l2 0l2 0l1 0l1 -1l1 -2M837 485l2 0l1 0l2 0l2 0l1 0l2 0l2 0l1 0l2 0l2 0l2 -1l1 0l1 -1M837 481l2 0l1 0l2 0l2 0l1 0l2 0l2 0l1 0l2 0l2 0l2 1l1 0l1 1M838 480l2 0l1 0l2 0l2 0l1 0l2 0l2 0l1 0l2 0l2 0l1 0l1 1l1 2M839 481l2 0l1 0l2 0l2 0l1 0l2 0l1 0l2 0l2 0l1 0l2 1l1 0l0 1M839 485l2 0l1 0l2 0l2 0l1 0l2 0l1 0l2 0l2 0l1 0l2 -1l1 0l0 -1M838 480l2 0l1 0l2 0l2 0l1 0l2 0l2 0l1 0l2 0l2 0l1 0l1 1l1 2M838 486l2 0l1 0l2 0l2 0l1 0l2 0l2 0l1 0l2 0l2 0l1 0l1 -1l1 -2"/><path d="M836 494l0 -1l0 -3l0 -2l1 2l0 3zM837 494l-1 -1l0 -3l1 -2l1 2l0 3zM838 494l-1 -1l0 -3l1 -2l1 2l0 3zM839 494l-1 -1l0 -3l1 -2l1 2l0 3zM840 494l-1 -1l0 -3l1 -2l0 2l0 3zM840 494l0 -1l0 -3l0 -2l1 2l0 3zM841 495l-1 -2l0 -3l1 -1l1 1l0 3zM842 495l-1 -2l0 -3l1 -1l1 1l0 3zM843 495l-1 -2l0 -3l1 -1l1 1l0 3zM844 495l-1 -2l0 -2l1 -2l0 2l0 2zM844 494l0 -1l0 -2l0 -1l1 1l0 2zM845 494l-1 -1l0 -2l1 -1l0 1l0 2zM836 494l1 0l1 0l1 0l1 0l1 1l1 0l1 0l1 0l0 -1l1 -1l1 0l0 -1M835 492l1 1l1 0l1 0l1 0l1 0l1 0l1 0l1 0l1 0l1 0l0 -1l1 0M835 490l1 0l1 0l1 0l1 0l1 0l1 0l1 0l1 1l1 0l1 0l0 1l1 0M836 488l1 0l1 0l1 0l1 0l1 1l1 0l1 0l1 0l0 1l1 1l1 1M837 490l1 0l1 0l1 0l1 0l1 0l1 0l1 0l0 1l1 0l1 1M837 492l1 1l1 0l1 0l1 0l1 0l1 0l1 0l1 0l1 -1M836 488l1 0l1 0l1 0l1 0l1 1l1 0l1 0l1 0l0 1l1 1l1 1M836 494l1 0l1 0l1 0l1 0l1 1l1 0l1 0l1 0l0 -1l1 -1l1 0l0 -1"/><path d="M819 447l1 -3l4 -5l3 -1l-1 3l-4 5zM821 450l1 -4l4 -5l4 -1l-1 4l-4 4zM823 452l1 -4l5 -5l3 -1l-1 4l-4 5zM825 455l1 -4l5 -5l4 -2l-1 4l-5 5zM827 457l1 -3l5 -6l4 -1l-2 4l-5 5zM828 460l1 -4l5 -5l4 -1l-1 4l-5 5zM829 463l1 -3l5 -6l4 -1l-1 4l-5 5zM830 466l1 -3l5 -5l4 -2l-2 4l-5 5zM818 446l2 3l3 2l2 3l2 4l1 3l1 3l1 4M819 443l2 2l3 3l2 3l2 3l1 3l1 4l1 3M823 438l3 3l2 2l3 3l2 3l1 3l1 4l1 3M826 437l3 2l3 3l3 2l2 3l1 4l1 3l1 4M825 440l3 3l3 2l3 3l2 3l1 4l1 3l1 4M821 445l3 2l2 3l3 3l2 3l1 4l1 3l1 4M826 437l3 2l3 3l3 2l2 3l1 4l1 3l1 4M818 446l2 3l3 2l2 3l2 4l1 3l1 3l1 4"/><path d="M803 507l-3 4l-8 3l-12 3l-15 2l-17 0l-17 0l-15 -2l-12 -3l-8 -3l-3 -4l3 -3l8 -4l12 -2l15 -2l17 -1l17 1l15 2l12 2l8 4zM804 514l-3 4l-8 3l-12 3l-16 2l-18 0l-17 0l-16 -2l-12 -3l-8 -3l-3 -4l3 -4l8 -3l12 -3l16 -2l18 0l17 0l16 2l12 3l8 3zM805 521l-3 4l-8 3l-13 3l-16 2l-18 0l-18 0l-16 -2l-13 -3l-8 -4l-3 -4l3 -4l9 -3l12 -3l16 -2l18 0l18 0l16 2l13 3l8 4zM806 527l-3 4l-8 4l-13 3l-17 2l-18 0l-18 -1l-17 -1l-13 -3l-8 -4l-3 -4l3 -4l8 -4l13 -2l17 -2l18 -1l18 1l17 2l13 3l8 3zM807 534l-3 4l-8 4l-14 3l-17 1l-18 1l-19 -1l-17 -2l-13 -3l-9 -3l-3 -4l3 -4l9 -4l13 -3l17 -2l19 -1l18 1l17 2l14 3l8 4zM808 541l-3 4l-9 4l-13 3l-17 1l-20 1l-19 -1l-17 -2l-13 -3l-9 -4l-3 -4l3 -4l9 -4l13 -3l17 -2l20 0l19 1l17 2l13 3l9 3zM809 547l-3 5l-9 3l-14 3l-17 2l-20 1l-19 -1l-17 -2l-14 -3l-9 -4l-3 -4l3 -4l9 -4l14 -3l17 -2l20 -1l19 1l17 2l14 3l9 4zM810 554l-3 4l-9 4l-14 3l-18 2l-19 1l-20 -1l-18 -2l-14 -3l-9 -4l-3 -4l3 -5l9 -4l14 -3l18 -2l20 0l19 0l18 3l14 3l9 4zM812 561l-4 4l-9 4l-14 3l-18 2l-20 1l-20 -1l-18 -2l-15 -3l-9 -4l-3 -5l3 -4l9 -4l15 -3l18 -2l20 -1l20 1l18 2l14 3l9 4zM812 567l-3 5l-9 4l-15 3l-18 2l-20 1l-20 -1l-19 -2l-14 -3l-9 -4l-4 -5l4 -4l9 -4l14 -3l19 -2l20 -1l20 1l18 2l15 3l9 4zM813 574l-3 4l-10 5l-14 3l-19 2l-20 1l-20 -1l-19 -2l-14 -3l-10 -4l-3 -5l3 -4l10 -4l14 -4l19 -2l20 -1l20 1l19 2l14 3l10 4zM813 581l-4 4l-9 4l-14 3l-18 2l-21 1l-20 -1l-18 -2l-14 -3l-10 -4l-3 -4l3 -5l9 -4l15 -3l18 -2l20 -1l21 1l18 2l14 3l9 4zM802 504l1 5l1 6l1 5l1 5l1 6l0 5l1 5l1 6l1 5l1 5l1 6l1 5l0 5l0 6l-1 5M800 507l1 5l1 6l1 5l1 6l1 5l0 5l1 6l1 5l1 6l1 5l1 5l0 6l1 5l0 5l-1 6M795 510l1 5l0 6l1 5l1 6l1 5l0 6l1 5l1 5l1 6l0 5l1 6l1 5l0 6l0 5l-1 5M786 512l1 6l0 5l1 6l0 5l1 6l1 5l0 6l1 5l0 6l1 5l1 6l0 5l1 6l0 5l-1 5M775 514l0 6l1 5l0 6l0 5l1 6l0 5l0 6l1 5l0 6l1 5l0 6l1 5l0 6l0 5l0 5M762 515l0 6l0 6l0 5l0 6l0 5l0 6l0 5l1 6l0 5l0 6l1 5l0 6l0 5l0 6l0 5M748 516l0 5l-1 6l0 6l0 5l0 6l0 5l-1 6l0 5l1 6l0 5l0 6l0 5l0 6l0 5l1 5M734 515l-1 6l0 6l-1 5l0 6l-1 5l0 6l-1 5l0 6l0 5l0 6l0 5l0 6l0 5l0 6l1 5M721 514l-1 6l-1 5l-1 6l0 5l-1 6l-1 5l0 6l-1 5l0 6l-1 5l0 6l0 5l0 6l0 5l1 5M710 512l-1 6l-1 5l-1 6l-2 5l-1 6l0 5l-1 6l-1 5l0 6l-1 5l0 6l-1 5l0 6l1 5l1 5M701 510l-1 5l-1 6l-2 5l-1 5l-1 6l-1 5l-1 6l-1 5l-1 6l0 5l-1 6l0 5l0 6l0 5l2 5M696 507l-2 5l-1 6l-1 5l-2 5l-1 6l-1 5l-1 5l-1 6l-1 5l-1 6l0 5l-1 6l0 5l1 6l1 5M694 504l-1 5l-2 5l-1 6l-2 5l-1 5l-1 6l-1 5l-1 5l-1 6l-1 5l0 6l-1 5l0 5l0 6l2 5M696 501l-2 5l-1 5l-1 5l-2 6l-1 5l-1 5l-1 5l-1 6l-1 5l-1 5l0 6l-1 5l0 6l1 5l1 5M701 498l-1 5l-1 5l-2 5l-1 6l-1 5l-1 5l-1 5l-1 5l0 6l-1 5l-1 5l0 6l0 5l0 6l2 5M710 496l-1 5l-1 5l-1 5l-2 5l-1 5l0 5l-1 5l-1 6l0 5l-1 5l0 5l-1 6l0 5l1 6l1 5M721 494l-1 5l-1 5l-1 5l0 5l-1 5l-1 5l0 5l-1 5l0 6l-1 5l0 5l0 5l0 6l0 5l1 6M734 493l-1 5l0 5l-1 5l0 5l-1 5l0 5l0 5l-1 5l0 5l0 5l0 6l0 5l0 5l0 6l1 5M748 492l0 5l-1 5l0 5l0 5l0 5l0 5l0 5l0 6l0 5l0 5l0 5l0 5l0 6l0 5l1 6M762 493l0 5l0 5l0 5l0 5l0 5l0 5l1 5l0 5l0 5l0 6l1 5l0 5l0 5l0 6l0 5M775 494l0 5l1 5l0 5l0 5l1 5l0 5l0 5l1 6l0 5l1 5l0 5l1 5l0 6l0 5l0 6M786 496l1 5l0 5l1 5l1 5l0 5l1 5l0 6l1 5l1 5l0 5l1 5l0 6l1 5l0 5l-1 6M795 498l1 5l0 5l1 6l1 5l1 5l0 5l1 5l1 6l1 5l0 5l1 5l1 6l0 5l0 5l-1 6M800 501l1 5l1 5l1 6l1 5l1 5l0 5l1 6l1 5l1 5l1 6l1 5l0 5l1 6l0 5l-1 5M694 504l-1 5l-2 5l-1 6l-2 5l-1 5l-1 6l-1 5l-1 5l-1 6l-1 5l0 6l-1 5l0 5l0 6l2 5M802 504l1 5l1 6l1 5l1 5l1 6l0 5l1 5l1 6l1 5l1 5l1 6l1 5l0 5l0 6l-1 5"/><path d="M792 520l-3 6l-10 6l-14 4l-17 1l-14 -2l-11 -5l-4 -6l4 -7l9 -5l15 -4l16 -1l15 2l10 5zM796 530l-4 7l-11 6l-16 3l-19 1l-16 -3l-12 -5l-4 -7l4 -7l11 -6l16 -4l19 -1l16 3l12 6zM799 540l-4 7l-13 7l-18 3l-20 1l-18 -4l-12 -6l-4 -8l4 -8l12 -6l18 -3l20 -1l18 4l13 6zM800 550l-5 8l-13 6l-18 4l-20 0l-19 -4l-13 -6l-4 -8l5 -8l12 -7l19 -3l20 0l19 4l12 6zM798 560l-4 8l-13 6l-18 3l-20 0l-17 -4l-13 -6l-4 -8l5 -8l12 -6l18 -3l20 1l18 3l12 7zM794 570l-4 7l-12 5l-16 3l-18 -1l-16 -3l-11 -6l-4 -7l4 -7l12 -5l16 -3l18 0l16 4l11 6zM787 577l-4 6l-10 4l-13 2l-15 0l-13 -3l-10 -5l-3 -6l4 -6l9 -4l14 -2l15 0l13 3l9 5zM777 582l-3 4l-7 3l-10 2l-11 -1l-10 -2l-6 -4l-3 -4l3 -4l7 -4l10 -1l11 0l10 3l7 4zM767 585l-2 3l-4 2l-6 1l-7 0l-6 -2l-5 -2l-1 -3l2 -3l4 -2l6 -1l7 1l6 1l5 3zM757 588l-2 2l-6 1l-4 -2l0 -2l5 -1l5 0zM790 515l4 9l3 9l3 9l0 10l-2 9l-4 9l-6 7l-9 4l-9 3l-9 3l-9 3M784 523l3 10l2 10l2 10l0 9l-2 9l-3 8l-5 6l-7 2l-7 2l-8 0l-7 1M767 530l1 10l0 9l0 10l0 10l-1 8l-1 7l-3 5l-3 2l-3 0l-3 0l-3 0M746 531l-2 10l-2 9l-2 9l-1 10l1 8l0 7l2 4l2 2l2 0l2 0l2 1M729 528l-4 8l-4 8l-4 9l0 9l1 8l2 7l5 5l5 3l7 2l6 2l6 1M722 520l-5 7l-5 7l-3 8l-1 9l1 8l4 8l5 7l7 5l8 4l8 3l8 4M728 512l-4 6l-4 6l-3 8l0 8l1 9l3 9l4 8l6 7l6 6l6 5l6 6M745 505l-2 6l-2 7l-1 7l0 9l0 9l1 10l2 9l1 7l2 7l2 7l2 6M766 504l1 6l1 7l0 8l0 9l0 10l-2 9l-2 10l-3 7l-3 7l-4 6l-3 6M783 507l3 8l3 8l2 8l0 10l-1 9l-3 10l-6 8l-7 7l-7 5l-8 5l-7 5M722 520l-5 7l-5 7l-3 8l-1 9l1 8l4 8l5 7l7 5l8 4l8 3l8 4M790 515l4 9l3 9l3 9l0 10l-2 9l-4 9l-6 7l-9 4l-9 3l-9 3l-9 3"/><path d="M749 590l-4 3l-10 2l-14 -1l-15 -2l-14 -4l-9 -5l-2 -4l4 -3l9 -1l14 0l16 3l13 3l9 5zM746 598l-3 3l-10 2l-14 -1l-15 -2l-13 -4l-8 -4l-3 -4l4 -3l9 -2l14 1l15 2l13 4l9 4zM744 606l-4 3l-9 2l-13 -1l-15 -2l-13 -4l-8 -4l-3 -4l4 -3l9 -1l14 0l14 2l13 4l8 4zM742 614l-4 3l-9 2l-13 -1l-14 -2l-13 -3l-8 -4l-3 -4l4 -3l9 -2l13 1l14 2l13 3l8 4zM740 622l-3 3l-9 2l-13 -1l-14 -2l-12 -3l-9 -4l-2 -4l3 -3l9 -1l13 0l14 2l12 3l9 4zM738 630l-3 3l-9 2l-12 0l-14 -2l-12 -4l-8 -3l-3 -4l4 -3l9 -1l12 0l14 2l12 3l8 4zM736 638l-3 3l-9 2l-12 0l-13 -2l-11 -3l-8 -4l-3 -4l4 -2l8 -2l12 0l13 2l12 3l8 4zM734 647l-3 2l-8 2l-12 0l-13 -2l-11 -3l-8 -4l-2 -3l3 -3l9 -1l11 0l13 2l11 3l8 3zM732 655l-3 2l-8 2l-11 -1l-13 -1l-10 -3l-8 -3l-2 -4l3 -2l8 -2l11 1l12 1l11 3l7 3zM729 663l-3 2l-7 1l-11 0l-12 -1l-10 -3l-7 -3l-2 -3l3 -3l7 -1l11 0l12 2l10 2l7 3zM727 671l-3 2l-7 1l-10 0l-12 -1l-9 -2l-7 -3l-2 -3l2 -3l8 -1l10 0l11 1l10 2l7 3zM724 678l-2 3l-7 1l-10 0l-11 -1l-9 -2l-7 -3l-2 -3l3 -2l7 -2l10 0l10 2l10 2l6 3zM722 686l-3 3l-6 1l-10 0l-10 -1l-9 -2l-6 -3l-2 -2l3 -3l6 -1l9 0l11 1l9 2l6 3zM719 694l-2 2l-7 2l-8 0l-10 -1l-9 -2l-6 -2l-2 -3l3 -2l6 -1l9 -1l10 1l8 2l6 3zM716 702l-3 2l-5 1l-9 1l-9 -1l-8 -2l-6 -2l-2 -2l2 -3l6 -1l9 0l9 1l8 1l6 2zM712 709l-2 2l-6 2l-8 0l-9 0l-8 -2l-6 -2l-1 -2l2 -2l5 -2l9 0l9 0l8 2l5 2zM708 717l-2 2l-5 1l-8 1l-9 -1l-8 -1l-6 -2l-2 -2l3 -2l5 -2l8 0l9 0l8 2l5 2zM705 724l-3 2l-5 2l-8 0l-9 0l-8 -1l-6 -2l-1 -3l2 -2l5 -1l8 -1l9 1l8 1l6 2zM701 732l-2 2l-6 1l-8 1l-9 -1l-8 -1l-6 -2l-2 -2l2 -2l6 -2l8 0l9 0l8 1l6 2zM697 739l-2 3l-5 1l-9 1l-9 -1l-8 -1l-6 -2l-2 -3l2 -2l6 -1l9 -1l9 1l8 1l6 2zM695 747l-2 3l-6 1l-8 1l-9 -1l-8 -1l-6 -2l-2 -2l2 -3l6 -1l8 -1l10 1l8 1l5 2zM694 756l-2 2l-6 1l-8 1l-9 -1l-8 -1l-5 -2l-2 -2l2 -2l6 -2l8 0l8 0l8 1l6 2zM692 764l-2 2l-5 1l-7 1l-9 0l-7 -2l-5 -1l-2 -3l2 -1l5 -2l8 -1l8 1l7 1l6 2zM691 772l-2 2l-5 1l-6 1l-8 0l-7 -2l-5 -1l-1 -2l1 -2l5 -1l7 -1l8 0l7 2l4 1zM690 780l-2 2l-4 1l-7 1l-7 0l-6 -1l-4 -2l-2 -2l2 -1l4 -2l7 0l7 0l6 1l4 2zM689 789l-2 1l-4 1l-6 1l-7 0l-5 -1l-5 -2l-1 -1l2 -2l4 -1l6 0l6 0l6 1l4 1zM688 797l-2 1l-4 1l-5 1l-6 0l-6 -1l-4 -1l-1 -2l1 -1l4 -1l6 -1l6 0l5 1l4 1zM687 805l-2 2l-3 1l-6 0l-5 0l-5 -1l-4 -1l-1 -1l1 -2l4 -1l5 0l6 0l5 1l3 1zM686 814l-2 1l-3 1l-5 0l-5 0l-5 0l-4 -1l-1 -2l1 -1l4 -1l5 -1l5 0l5 1l3 1zM685 822l-1 1l-4 1l-5 1l-5 0l-5 -1l-4 -1l-1 -1l1 -2l4 -1l5 0l5 0l5 0l4 1zM750 586l-2 6l-1 5l-2 6l-2 5l-1 6l-1 6l-1 5l-2 6l-1 6l-2 5l-1 6l-2 6l-2 5l-1 6l-2 5l-2 6l-1 5l-2 6l-2 5l-2 6l-3 5l-2 5l-3 5l-3 6l-2 5l-3 5l-2 5l-3 6l-1 5l-1 6l-2 6l0 5l-1 6l-1 6l-1 6l-1 5l-1 6l0 6l-1 6l-1 6l0 5l-1 6l0 6M746 589l-2 6l-1 5l-2 6l-1 5l-2 6l-1 6l-1 5l-1 6l-2 6l-1 5l-1 6l-2 5l-2 6l-1 5l-2 6l-1 5l-2 6l-2 5l-2 6l-2 5l-2 5l-3 5l-2 6l-3 5l-2 5l-3 5l-3 5l-2 6l-1 5l-2 6l-1 6l0 5l-1 6l-1 6l-1 5l0 6l-1 6l-1 5l0 6l-1 6l-1 6l0 6l0 5M736 591l-1 5l-2 6l-1 5l-2 6l-1 5l-1 6l-1 6l-1 5l-1 6l-1 6l-2 5l-1 6l-1 5l-2 6l-1 5l-1 6l-2 5l-1 5l-2 6l-2 5l-2 5l-2 6l-3 5l-2 5l-3 5l-3 6l-2 5l-3 5l-1 6l-1 6l-1 5l-1 6l0 5l-1 6l0 6l-1 5l0 6l-1 6l0 5l-1 6l0 6l0 6l-1 6M722 590l-1 6l-2 5l-1 6l-1 5l-1 6l-1 6l-1 6l0 5l-1 6l-1 5l-1 6l-1 5l-1 6l-1 6l-1 5l-1 6l-1 5l-2 6l-1 5l-1 6l-2 5l-3 5l-2 5l-2 6l-3 5l-3 5l-3 5l-2 6l-2 5l0 6l-1 6l0 5l0 6l-1 6l0 5l0 6l0 5l0 6l0 6l-1 6l0 5l-1 6l0 6M706 588l0 5l-1 6l-1 6l-1 5l-1 6l-1 6l0 6l-1 5l-1 6l0 6l-1 5l-1 6l0 6l-1 5l0 6l-1 5l-1 6l-1 6l-1 5l-1 6l-2 5l-2 6l-2 5l-2 5l-3 6l-3 5l-3 5l-2 5l-2 6l-1 6l0 6l0 5l1 6l0 5l0 6l0 6l1 5l0 6l0 6l0 5l-1 6l0 6l-1 6M693 584l-1 6l-1 5l0 6l-1 6l-1 6l0 5l-1 6l0 6l0 6l-1 6l0 5l0 6l-1 6l0 6l0 5l-1 6l0 6l-1 6l-1 5l0 6l-2 6l-2 5l-2 6l-2 5l-3 5l-3 5l-3 6l-2 5l-2 6l-1 5l0 6l1 6l1 6l0 5l1 6l0 6l1 5l0 6l0 6l1 6l0 6l-1 6l-1 6M684 579l-1 6l0 6l-1 6l0 6l-1 6l0 5l-1 6l0 6l0 6l0 6l-1 6l0 6l0 6l0 5l0 6l0 6l-1 6l0 6l0 6l-1 6l-1 5l-2 6l-2 5l-3 6l-2 5l-3 5l-3 6l-3 5l-2 6l0 5l0 6l1 6l1 6l1 6l0 5l1 6l1 6l0 6l1 6l0 6l0 6l-1 6l-1 5M681 575l-1 6l0 6l-1 6l0 6l-1 6l0 6l0 6l-1 6l0 6l0 5l0 6l0 6l0 6l0 6l0 6l-1 6l0 6l0 6l0 6l-1 6l-1 6l-2 6l-2 5l-2 6l-3 5l-3 5l-3 5l-3 6l-2 5l0 6l0 6l1 6l1 6l1 6l1 6l1 6l0 5l1 6l1 6l0 6l0 6l-1 6l-1 6M685 572l-1 6l0 6l-1 6l0 6l-1 6l0 6l-1 6l0 6l0 6l-1 6l0 6l0 6l0 6l0 6l-1 6l0 6l0 6l0 6l-1 6l-1 6l-1 6l-2 6l-2 5l-2 6l-3 5l-3 5l-3 5l-3 5l-1 6l-1 6l0 6l1 6l1 6l1 6l1 6l0 6l1 6l0 6l1 6l0 6l0 6l-1 6l-1 6M695 570l-1 6l-1 6l0 6l-1 6l-1 6l0 6l-1 6l0 6l-1 6l0 6l-1 6l0 6l0 6l-1 6l0 6l-1 7l0 6l-1 6l-1 6l-1 6l-1 5l-2 6l-2 6l-3 5l-2 5l-3 5l-3 6l-3 5l-2 6l0 6l0 6l0 6l1 6l0 6l1 6l0 6l1 6l0 6l1 6l0 6l0 6l-1 6l-1 5M709 571l-1 6l-1 6l-1 6l-1 6l-1 6l-1 5l0 6l-1 6l-1 6l0 6l-1 6l-1 6l-1 6l0 6l-1 6l-1 6l-1 6l-1 6l-1 6l-1 6l-2 6l-2 6l-2 5l-3 6l-2 5l-3 5l-3 5l-3 5l-1 6l-1 6l0 6l0 6l0 6l0 6l0 6l1 6l0 6l0 6l0 6l0 6l0 6l-1 6l-1 6M725 573l-2 6l-1 6l-1 6l-1 6l-2 6l-1 6l0 5l-1 6l-1 6l-1 6l-1 6l-1 6l-2 6l-1 6l-1 6l-1 6l-1 6l-1 5l-2 6l-2 6l-2 6l-2 5l-2 6l-3 5l-3 5l-2 5l-3 6l-2 5l-2 5l-1 6l-1 6l0 6l0 6l0 6l0 6l-1 6l0 6l0 6l0 6l-1 6l0 6l-1 6l0 6M738 577l-1 6l-2 6l-1 5l-2 6l-1 6l-1 6l-1 6l-1 6l-2 5l-1 6l-1 6l-2 6l-1 6l-1 5l-2 6l-1 6l-2 6l-1 6l-2 5l-2 6l-2 5l-3 6l-2 5l-3 5l-3 6l-2 5l-3 5l-2 5l-2 6l-1 6l-1 6l0 5l-1 6l0 6l-1 6l-1 6l0 6l-1 6l0 6l-1 6l0 6l0 6l-1 5M747 582l-1 5l-2 6l-2 6l-1 5l-2 6l-1 6l-1 6l-1 5l-2 6l-1 6l-2 5l-1 6l-2 6l-1 6l-2 5l-2 6l-1 6l-2 5l-2 6l-2 5l-3 6l-2 5l-3 5l-2 5l-3 6l-3 5l-2 5l-3 5l-1 6l-1 6l-1 5l-1 6l-1 6l-1 6l-1 6l0 6l-1 6l-1 5l0 6l-1 6l-1 6l0 6l0 6M681 575l-1 6l0 6l-1 6l0 6l-1 6l0 6l0 6l-1 6l0 6l0 5l0 6l0 6l0 6l0 6l0 6l-1 6l0 6l0 6l0 6l-1 6l-1 6l-2 6l-2 5l-2 6l-3 5l-3 5l-3 5l-3 6l-2 5l0 6l0 6l1 6l1 6l1 6l1 6l1 6l0 5l1 6l1 6l0 6l0 6l-1 6l-1 6M750 586l-2 6l-1 5l-2 6l-2 5l-1 6l-1 6l-1 5l-2 6l-1 6l-2 5l-1 6l-2 6l-2 5l-1 6l-2 5l-2 6l-1 5l-2 6l-2 5l-2 6l-3 5l-2 5l-3 5l-3 6l-2 5l-3 5l-2 5l-3 6l-1 5l-1 6l-2 6l0 5l-1 6l-1 6l-1 6l-1 5l-1 6l0 6l-1 6l-1 6l0 5l-1 6l0 6"/><path d="M814 595l-3 3l-9 3l-13 1l-14 0l-13 -2l-9 -3l-3 -3l3 -4l9 -2l13 -2l14 1l13 1l9 3zM814 602l-4 4l-8 2l-12 2l-14 -1l-12 -1l-8 -3l-3 -3l3 -4l8 -2l12 -1l14 0l12 1l9 3zM813 610l-3 3l-8 3l-11 1l-13 0l-12 -2l-8 -3l-3 -3l3 -3l8 -2l12 -1l13 0l11 1l8 3zM813 618l-3 3l-8 2l-11 1l-12 0l-11 -1l-8 -3l-2 -3l2 -3l8 -2l11 -1l12 0l12 1l7 3zM813 625l-3 3l-7 3l-11 1l-12 -1l-10 -1l-8 -2l-2 -3l2 -3l8 -2l10 -1l12 0l11 1l7 3zM812 633l-2 3l-7 2l-10 1l-12 0l-10 -1l-7 -3l-2 -2l2 -3l7 -2l11 -1l11 0l10 1l7 2zM812 641l-2 2l-7 2l-10 1l-10 0l-10 -1l-7 -2l-2 -3l3 -2l6 -2l10 -1l10 0l10 1l7 2zM811 648l-2 3l-6 2l-9 1l-10 0l-9 -1l-6 -2l-2 -3l2 -2l6 -2l9 -1l10 0l9 1l6 2zM811 656l-2 2l-6 2l-8 1l-10 0l-8 -1l-6 -2l-2 -2l2 -3l6 -1l8 -1l10 0l8 1l6 2zM810 664l-2 2l-5 1l-8 1l-8 0l-8 -1l-5 -1l-2 -3l2 -2l5 -1l8 -1l8 0l8 1l5 2zM810 671l-2 2l-5 2l-8 1l-8 0l-7 -1l-5 -2l-2 -2l2 -2l5 -1l7 -1l9 0l7 1l5 1zM809 679l-2 2l-5 2l-7 1l-8 0l-7 -1l-5 -2l-2 -2l2 -2l5 -1l7 -1l8 0l7 1l5 1zM808 687l-2 2l-5 1l-8 1l-9 0l-7 -1l-5 -1l-2 -2l2 -2l5 -2l7 -1l9 0l8 1l5 2zM807 694l-2 2l-5 2l-8 1l-9 0l-8 -1l-5 -1l-2 -2l2 -3l5 -1l8 -1l9 0l8 1l5 1zM806 702l-1 2l-6 2l-7 1l-9 0l-7 -1l-6 -1l-2 -2l2 -2l5 -2l8 -1l8 0l8 0l5 2zM806 710l-2 2l-5 1l-7 2l-8 0l-8 -1l-5 -1l-2 -2l2 -2l5 -2l7 -1l8 0l8 0l5 2zM805 717l-1 2l-5 2l-7 1l-8 0l-7 0l-5 -1l-2 -2l2 -2l5 -2l7 -1l8 0l7 0l5 1zM805 725l-2 2l-4 1l-7 2l-7 0l-7 0l-5 -2l-2 -1l2 -2l5 -2l6 -1l8 0l6 0l5 1zM804 732l-1 2l-4 2l-7 1l-7 1l-6 -1l-4 -1l-2 -1l1 -2l5 -2l6 -1l7 0l6 0l5 1zM804 740l-1 2l-4 1l-6 2l-7 0l-5 0l-5 -1l-1 -1l1 -2l4 -2l6 -1l6 0l6 0l4 1zM803 748l-1 1l-3 2l-6 1l-5 1l-6 -1l-4 0l-1 -2l1 -1l4 -2l5 -1l6 0l5 0l4 0zM803 755l-1 2l-3 1l-5 1l-5 1l-5 0l-4 -1l-1 -1l1 -1l3 -2l5 -1l5 0l5 0l3 0zM802 763l-1 1l-2 2l-5 1l-4 0l-5 1l-3 -1l-1 -1l1 -1l3 -2l4 -1l5 0l4 0l3 0zM802 771l-1 1l-2 1l-4 1l-5 1l-4 0l-3 0l-1 -1l1 -1l3 -2l4 -1l4 0l4 -1l3 1zM803 778l-1 2l-3 1l-4 1l-5 1l-4 0l-3 0l-1 -1l1 -1l2 -2l5 -1l4 -1l5 0l3 0zM814 591l0 5l0 5l-1 6l0 5l0 5l0 5l0 5l-1 5l0 6l0 5l-1 5l0 5l0 5l-1 5l0 6l-1 5l0 5l-1 5l-1 5l0 5l0 6l-1 5l0 5l0 5l-1 5l0 5l0 6l-1 5l0 5l-1 5l0 5l0 5l-1 6l0 5l0 5l0 5l2 5M811 594l0 6l-1 5l0 5l0 5l0 5l0 5l0 5l0 5l0 5l-1 5l0 5l0 5l0 5l-1 6l0 5l0 5l-1 5l-1 5l0 5l-1 5l0 6l-1 5l0 5l0 5l0 5l-1 5l0 5l0 5l0 6l-1 5l0 5l0 5l-1 5l0 5l0 5l1 5l1 5M802 597l0 5l0 5l0 5l0 5l0 5l1 5l0 5l0 5l0 5l0 5l0 5l0 5l0 5l0 5l0 5l0 5l-1 5l-1 6l-1 5l0 5l-1 5l0 6l0 5l0 5l0 5l0 5l0 5l0 5l0 5l0 5l0 5l0 5l0 5l0 5l0 5l0 6l1 5M789 599l0 4l1 5l0 5l1 5l0 5l1 5l0 5l1 5l0 5l0 5l1 5l0 5l1 5l0 5l0 5l0 5l0 5l-1 6l-2 5l0 5l0 5l0 6l0 5l0 5l0 5l0 5l0 5l1 5l0 5l0 5l1 5l0 5l0 5l1 5l0 6l0 5l1 5M774 598l1 5l1 5l1 5l1 5l1 5l1 5l1 5l0 5l1 5l1 5l1 5l1 5l1 5l1 5l0 5l1 5l-1 5l-2 6l-1 5l-1 5l0 6l0 5l1 5l0 5l0 5l1 6l0 5l1 5l1 5l0 5l1 5l1 5l0 5l1 5l0 5l1 6l-1 5M761 597l1 5l2 5l1 5l1 5l2 5l1 5l1 5l1 5l1 5l2 5l1 5l1 5l2 5l1 5l1 5l0 5l0 6l-2 5l-2 5l-1 5l0 6l1 5l0 5l1 6l0 5l1 5l1 5l1 6l1 5l1 5l1 5l1 5l1 5l1 5l0 5l0 6l0 5M752 594l2 5l1 5l2 5l2 5l1 5l1 5l2 5l1 6l2 5l1 5l2 5l1 5l2 5l2 5l1 5l0 6l0 5l-2 5l-2 5l-1 6l0 5l0 6l1 5l1 5l0 6l1 5l1 5l1 6l2 5l1 5l1 5l2 5l1 5l1 6l1 5l-1 6l-1 5M749 590l2 5l1 5l2 6l2 5l1 5l2 5l1 6l2 5l1 5l2 5l1 6l2 5l2 5l2 5l1 5l1 6l-1 5l-2 5l-2 5l-1 6l0 5l0 6l1 5l1 5l1 6l1 5l1 6l1 5l1 5l1 6l2 5l1 5l2 5l1 6l0 5l0 6l-1 5M752 587l2 5l1 5l2 5l2 6l1 5l2 5l1 6l1 5l2 5l1 6l2 5l1 5l2 6l2 5l1 5l0 6l0 5l-3 5l-1 5l-1 6l0 5l0 6l1 5l0 5l1 6l1 5l1 6l1 5l1 6l2 5l1 5l1 6l2 5l1 6l0 5l0 5l-1 6M761 584l2 5l1 6l1 5l2 5l1 6l1 5l1 6l1 5l1 5l2 6l1 5l1 6l2 5l1 5l1 6l0 5l0 6l-2 5l-2 4l-1 6l0 5l0 6l1 5l0 6l1 5l1 6l0 5l1 6l1 5l1 5l1 6l1 5l1 6l1 5l1 6l0 5l-1 5M774 582l1 6l1 5l1 6l1 5l1 6l1 5l1 5l0 6l1 5l1 6l1 5l1 6l1 5l1 6l0 5l1 5l-1 6l-2 5l-1 5l-1 5l0 5l0 6l0 5l1 6l0 5l0 5l1 6l0 5l1 6l1 5l0 6l1 5l1 6l0 5l1 6l0 5l-1 5M789 583l0 5l1 6l0 5l1 5l0 6l1 5l0 6l1 5l0 5l1 6l0 5l0 6l1 5l0 6l1 5l-1 5l0 6l-1 5l-2 5l0 5l0 5l-1 5l0 6l0 5l1 6l0 5l0 5l0 6l0 5l1 6l0 5l0 6l1 5l0 5l0 6l0 5l1 5M802 584l0 6l0 5l0 6l0 5l1 5l0 6l0 5l0 5l0 6l0 5l0 5l0 6l0 5l0 6l0 5l0 5l-1 5l-1 5l-1 5l0 6l-1 5l0 5l0 5l0 6l0 5l-1 5l0 6l0 5l0 6l0 5l0 5l0 6l0 5l0 5l0 6l0 5l1 5M811 587l0 6l0 5l-1 5l0 6l0 5l0 5l0 5l0 6l0 5l0 5l-1 5l0 6l0 5l-1 5l0 6l0 5l-1 5l-1 5l0 5l-1 5l0 5l-1 6l0 5l0 5l-1 5l0 6l0 5l0 5l-1 5l0 6l0 5l-1 5l0 6l0 5l0 5l0 5l2 5M749 590l2 5l1 5l2 6l2 5l1 5l2 5l1 6l2 5l1 5l2 5l1 6l2 5l2 5l2 5l1 5l1 6l-1 5l-2 5l-2 5l-1 6l0 5l0 6l1 5l1 5l1 6l1 5l1 6l1 5l1 5l1 6l2 5l1 5l2 5l1 6l0 5l0 6l-1 5M814 591l0 5l0 5l-1 6l0 5l0 5l0 5l0 5l-1 5l0 6l0 5l-1 5l0 5l0 5l-1 5l0 6l-1 5l0 5l-1 5l-1 5l0 5l0 6l-1 5l0 5l0 5l-1 5l0 5l0 6l-1 5l0 5l-1 5l0 5l0 5l-1 6l0 5l0 5l0 5l2 5"/><path d="M685 826l-2 2l-7 2l-8 0l-7 -2l-2 -2l2 -2l7 -2l8 0l7 1zM686 829l-3 3l-7 1l-9 1l-7 -2l-2 -2l2 -3l7 -1l9 -1l7 2zM686 832l-2 3l-8 2l-9 1l-7 -2l-3 -2l2 -3l8 -2l9 0l7 1zM687 836l-3 3l-8 2l-9 1l-8 -2l-3 -2l3 -3l7 -2l10 -1l8 1zM688 839l-3 3l-8 3l-10 0l-9 -1l-3 -2l3 -3l8 -3l10 -1l8 1zM689 842l-3 4l-9 2l-10 1l-9 -1l-4 -2l3 -4l9 -2l10 -1l9 1zM690 845l-3 4l-9 3l-11 1l-9 0l-4 -3l3 -4l9 -3l11 -1l9 1zM692 848l-3 4l-9 3l-12 2l-9 0l-5 -3l4 -4l9 -3l11 -2l10 1zM694 851l-3 4l-10 4l-11 2l-10 -1l-4 -2l3 -4l9 -4l12 -2l9 0zM696 854l-3 4l-9 4l-12 2l-10 0l-5 -3l3 -4l10 -4l11 -2l10 0zM698 857l-3 4l-9 4l-12 2l-10 0l-4 -2l3 -5l9 -4l11 -2l10 0zM700 859l-3 5l-9 4l-12 2l-10 0l-4 -2l3 -4l9 -4l11 -3l10 0zM701 862l-2 4l-9 5l-12 2l-9 1l-5 -3l3 -4l9 -4l11 -3l10 0zM703 865l-2 4l-9 5l-11 2l-10 1l-4 -2l2 -5l9 -4l11 -3l10 0zM705 868l-2 4l-9 4l-11 3l-10 1l-4 -2l3 -4l8 -5l11 -3l10 -1zM707 871l-2 4l-9 4l-11 3l-9 1l-4 -2l2 -4l9 -5l11 -3l9 -1zM709 873l-2 4l-8 5l-11 3l-9 1l-5 -2l3 -4l8 -5l11 -3l9 -1zM711 876l-2 4l-8 5l-11 3l-9 1l-4 -2l2 -4l8 -5l11 -3l9 -1zM713 879l-2 4l-8 5l-10 3l-9 1l-5 -2l3 -4l7 -5l11 -3l9 -1zM715 882l-2 4l-8 4l-10 4l-9 1l-4 -2l2 -4l8 -4l10 -4l9 -1zM716 885l-2 4l-7 4l-10 4l-8 1l-4 -2l2 -4l7 -4l10 -4l8 -1zM718 888l-2 4l-7 4l-9 3l-8 2l-4 -2l2 -4l7 -4l9 -4l8 -1zM719 891l-2 3l-6 5l-9 3l-7 1l-4 -1l2 -4l6 -4l9 -3l8 -2zM720 894l-1 3l-6 4l-8 3l-7 1l-4 -1l2 -4l6 -3l8 -3l7 -1zM720 898l-1 2l-5 3l-7 3l-6 0l-3 -1l2 -3l5 -3l6 -2l6 -1zM719 901l-1 2l-4 2l-5 1l-5 1l-2 -1l1 -2l4 -2l5 -2l5 0zM717 903l-3 2l-5 2l-3 -1l2 -2l6 -2zM714 904l-1 1l-2 1l-1 -1l1 0l2 -1zM685 824l1 3l0 4l1 3l0 4l1 3l2 3l1 4l2 3l2 2l2 3l2 3l2 3l2 3l2 3l2 3l2 3l2 2l2 3l2 3l2 4l1 3l2 3l0 3l0 4l-2 3l-3 2l-3 1M683 826l1 4l0 3l1 4l0 3l1 4l2 3l1 4l2 3l2 3l2 3l3 3l2 2l2 3l2 3l2 3l2 3l2 3l2 3l2 3l2 3l1 3l2 3l0 3l0 3l-1 2l-3 1l-3 1M678 827l1 4l0 4l0 4l1 4l0 3l1 4l2 4l2 3l2 3l2 3l2 3l2 3l2 3l3 3l2 3l2 3l2 3l2 3l2 3l2 2l2 3l2 3l1 3l1 2l-1 2l-1 0l-2 0M672 828l0 4l0 4l0 4l0 4l0 4l0 4l2 4l1 3l2 4l3 3l2 3l2 3l2 3l3 3l2 3l3 3l2 3l2 3l3 3l2 3l2 3l2 2l2 3l2 1l1 1l0 -1M666 827l-1 5l-1 4l0 4l0 4l-1 4l0 4l1 4l2 4l2 4l2 3l2 3l3 4l2 3l3 3l2 3l3 3l2 3l3 3l2 3l3 3l2 3l3 2l3 2l3 2l2 0l2 -1l2 -1M661 826l-1 4l-1 4l-1 4l0 5l-1 4l0 4l0 4l1 4l2 4l3 3l2 4l2 3l3 4l2 3l3 3l3 3l2 3l3 3l3 3l2 3l3 3l4 3l3 2l3 1l4 0l4 -1l3 -1M659 824l-1 4l-1 4l-1 4l-1 4l-1 4l0 5l0 4l1 4l2 4l2 3l3 4l2 3l3 3l2 4l3 3l2 3l3 3l3 4l3 3l3 3l3 3l3 2l4 2l4 2l4 0l4 0l4 -1M661 822l-1 4l-1 4l-1 4l-1 4l-1 4l0 4l0 4l1 4l2 3l2 4l3 3l2 4l2 3l3 3l2 4l3 3l3 3l2 3l3 4l3 3l3 3l3 3l4 2l3 2l4 1l4 0l4 0M666 821l-1 3l-1 4l-1 4l0 4l-1 3l0 4l1 4l1 3l2 4l2 3l2 4l2 3l3 3l2 4l2 3l3 3l2 3l3 4l2 3l3 3l3 3l2 3l4 3l3 2l3 2l2 1l3 1M672 820l0 4l-1 3l0 4l0 3l0 4l0 3l1 4l1 3l2 3l2 3l2 4l2 3l3 3l2 3l2 3l2 4l3 3l2 3l2 3l2 4l3 3l2 3l3 3l2 3l1 3l1 2l1 1M678 821l1 3l0 3l0 4l0 3l0 4l1 3l1 3l2 3l2 3l2 3l2 3l2 3l2 4l2 3l2 3l2 3l2 3l2 3l2 3l2 3l2 4l2 3l2 3l1 4l0 3l-1 2l-1 2M683 822l1 3l0 4l0 3l1 4l1 3l1 3l1 3l2 3l2 3l2 3l2 3l2 3l2 3l2 3l2 3l2 3l2 3l2 3l2 3l2 3l2 3l1 4l1 3l0 4l-1 3l-2 2l-3 2M659 824l-1 4l-1 4l-1 4l-1 4l-1 4l0 5l0 4l1 4l2 4l2 3l3 4l2 3l3 3l2 4l3 3l2 3l3 3l3 4l3 3l3 3l3 3l3 2l4 2l4 2l4 0l4 0l4 -1M685 824l1 3l0 4l1 3l0 4l1 3l2 3l1 4l2 3l2 2l2 3l2 3l2 3l2 3l2 3l2 3l2 3l2 2l2 3l2 3l2 4l1 3l2 3l0 3l0 4l-2 3l-3 2l-3 1"/><path d="M804 773l-2 3l-6 2l-7 2l-6 0l-2 -2l1 -2l6 -3l7 -1l6 0zM806 776l-2 3l-7 3l-8 2l-6 0l-3 -2l2 -3l6 -3l8 -1l7 0zM807 779l-2 4l-7 3l-8 2l-8 0l-3 -2l2 -3l7 -3l9 -2l7 0zM809 782l-2 4l-7 4l-10 2l-8 0l-3 -2l2 -3l7 -4l10 -2l8 0zM811 785l-2 4l-7 4l-10 3l-8 0l-4 -2l2 -3l8 -4l9 -3l8 0zM813 788l-2 4l-7 4l-10 3l-8 0l-3 -1l2 -4l7 -4l9 -3l8 0zM815 791l-2 4l-7 4l-9 3l-8 0l-4 -1l2 -4l7 -4l9 -3l8 -1zM817 794l-1 3l-7 4l-9 3l-8 1l-4 -1l2 -4l7 -4l9 -3l8 -1zM820 796l-2 3l-6 5l-9 3l-8 1l-3 -2l1 -3l7 -4l9 -4l7 -1zM823 798l-2 3l-6 5l-9 3l-8 2l-3 -2l1 -3l7 -5l9 -3l7 -2zM826 800l-2 3l-6 5l-9 4l-7 1l-4 -1l2 -4l6 -4l9 -4l7 -2zM829 802l-2 3l-6 5l-8 4l-8 1l-4 -1l2 -3l6 -5l9 -4l7 -2zM832 803l-2 4l-6 5l-8 4l-7 2l-4 -1l1 -4l6 -5l9 -4l7 -2zM835 805l-1 4l-6 5l-9 4l-7 2l-4 -1l2 -4l5 -5l9 -4l7 -2zM838 807l-1 3l-6 6l-8 4l-8 2l-3 0l1 -4l6 -5l8 -5l7 -2zM841 809l-1 3l-6 6l-8 4l-7 3l-4 -1l1 -4l6 -5l8 -5l7 -2zM843 811l-1 4l-5 5l-8 5l-7 2l-3 -1l1 -3l5 -5l7 -5l7 -2zM845 814l-1 3l-5 5l-7 5l-6 2l-4 0l1 -4l5 -5l7 -4l7 -3zM847 817l-1 3l-5 5l-6 4l-6 2l-3 0l0 -3l5 -5l6 -4l6 -2zM848 820l-1 3l-4 4l-5 4l-6 2l-3 0l1 -3l4 -4l6 -4l5 -2zM849 824l-1 2l-3 4l-5 3l-5 3l-2 -1l0 -2l4 -4l5 -4l4 -2zM849 827l0 2l-3 3l-4 3l-3 2l-2 0l0 -2l2 -3l4 -3l4 -2zM848 830l-1 3l-4 4l-2 1l1 -3l4 -4zM847 834l0 1l-2 1l-1 0l1 -1l1 -1zM803 772l2 3l1 3l2 3l2 2l2 3l1 3l3 3l2 2l3 2l2 2l3 2l3 2l3 1l3 2l3 1l2 2l3 3l2 2l1 3l2 3l1 3l0 4l0 3l-1 3l-2 3M802 774l1 3l2 3l2 3l1 3l2 3l2 3l2 2l3 3l2 2l3 2l3 2l3 1l3 2l3 2l3 1l3 2l2 3l2 2l2 3l1 3l2 3l0 3l0 2l-1 3l-2 2M798 776l1 3l1 4l2 3l1 4l2 3l2 2l2 3l3 2l3 2l3 2l3 2l3 2l3 2l3 2l3 2l3 2l2 2l3 2l2 3l2 2l1 3l1 2l1 3l-1 1l-1 1M793 777l0 4l1 4l0 4l2 3l2 3l2 3l2 3l3 2l3 3l3 2l3 2l3 2l3 2l3 2l4 2l3 2l3 2l2 2l3 2l2 3l2 2l2 2l1 2l1 1l0 -1M787 778l0 4l0 4l0 4l1 4l2 3l2 3l3 3l3 2l3 3l3 2l3 3l3 2l3 2l4 2l3 2l3 2l3 2l3 2l3 3l3 2l2 2l3 2l3 1l2 0l1 -2M783 777l-1 4l-1 4l0 5l1 4l1 3l3 3l3 3l3 3l3 2l3 3l3 2l3 3l4 2l3 2l3 2l4 3l3 2l3 2l3 2l3 2l4 2l3 2l3 1l3 -1l3 -2M781 776l-1 4l-1 4l0 4l0 4l2 3l2 4l3 2l3 3l3 3l3 2l3 3l3 2l4 3l3 2l3 2l4 3l3 2l3 2l4 2l3 2l4 2l3 2l4 2l4 -1l3 -2M782 774l-1 4l-1 3l0 4l0 4l2 3l3 4l2 3l3 2l3 3l3 3l3 2l3 2l4 3l3 2l3 2l3 3l4 2l3 2l3 3l4 2l3 2l3 3l4 2l4 0l3 -2M786 772l0 3l-1 4l0 3l1 4l1 3l3 3l2 3l3 3l3 2l3 3l3 2l3 3l3 2l3 2l3 2l3 2l3 3l3 2l3 3l3 3l3 2l3 3l3 2l3 1l3 0M791 771l1 3l0 3l0 3l1 3l2 3l2 3l2 3l3 3l3 2l2 2l3 3l3 2l3 2l3 2l3 2l3 2l3 3l3 2l2 3l3 3l2 3l3 3l2 3l1 2l2 1M797 770l1 3l1 3l1 3l1 3l2 3l2 2l2 3l2 3l3 2l3 2l3 2l2 2l3 2l3 2l3 2l3 2l3 2l2 3l2 3l2 3l2 3l1 4l1 3l1 3l0 2M801 771l2 2l1 3l2 3l1 3l2 3l2 2l2 3l2 2l3 3l3 2l2 1l3 2l3 2l3 2l3 1l2 2l3 3l2 3l2 3l1 3l2 3l0 3l1 4l-1 3l-1 3M781 776l-1 4l-1 4l0 4l0 4l2 3l2 4l3 2l3 3l3 3l3 2l3 3l3 2l4 3l3 2l3 2l4 3l3 2l3 2l4 2l3 2l4 2l3 2l4 2l4 -1l3 -2M803 772l2 3l1 3l2 3l2 2l2 3l1 3l3 3l2 2l3 2l2 2l3 2l3 2l3 1l3 2l3 1l2 2l3 3l2 2l1 3l2 3l1 3l0 4l0 3l-1 3l-2 3"/><path d="M713 881l-2 4l-7 7l-8 5l-5 0l1 -5l7 -7l9 -4zM714 882l-2 5l-7 6l-8 5l-5 0l1 -5l7 -6l9 -5zM715 884l-2 4l-7 7l-8 4l-5 0l2 -4l7 -7l8 -4zM716 885l-2 5l-7 6l-8 5l-5 0l2 -5l7 -6l8 -5zM716 887l-1 4l-7 7l-8 4l-4 0l1 -4l7 -7l8 -4zM717 889l-1 4l-7 6l-7 4l-5 0l2 -4l6 -6l8 -4zM718 890l-1 4l-6 6l-8 4l-4 0l1 -4l6 -6l8 -4zM719 892l-1 4l-6 5l-8 4l-4 0l2 -4l6 -5l7 -4zM720 894l-2 3l-5 5l-7 4l-4 0l1 -4l6 -5l7 -3zM720 895l-1 4l-5 4l-7 4l-3 -1l1 -3l5 -4l6 -4zM720 897l-1 3l-5 4l-5 3l-3 -1l1 -2l4 -4l6 -3zM719 899l-2 3l-6 4l-3 0l1 -3l6 -4zM718 901l-1 2l-5 3l-3 0l2 -3l4 -2zM717 902l-1 2l-3 1l-2 0l1 -1l3 -2zM712 880l2 2l1 3l2 2l1 3l1 2l1 3l0 3l-2 3l-1 2M710 885l2 2l2 2l1 3l2 2l1 2l1 3l0 2l-1 1l-2 2M703 891l2 2l2 3l2 2l1 2l2 2l1 1l1 1l1 1M695 896l2 2l2 2l2 2l2 2l2 1l2 2l2 0l2 -1l2 -1M690 896l2 2l2 2l2 2l2 2l3 1l3 1l2 0l3 0l3 -1M692 891l1 3l2 2l2 2l3 2l2 2l3 1l2 1l3 0l3 0M699 885l1 2l2 2l2 3l2 2l2 2l2 2l2 2l1 2l1 1M707 880l2 2l1 3l2 2l2 3l1 2l1 3l1 3l0 2l-1 3M690 896l2 2l2 2l2 2l2 2l3 1l3 1l2 0l3 0l3 -1M712 880l2 2l1 3l2 2l1 3l1 2l1 3l0 3l-2 3l-1 2"/><path d="M839 809l1 4l-2 8l-4 7l-3 3l-2 -5l2 -8l4 -7zM840 810l1 4l-2 8l-4 7l-3 3l-2 -4l3 -9l4 -7zM842 811l1 4l-3 8l-4 8l-3 2l-1 -4l2 -9l4 -7zM843 812l1 4l-2 8l-5 8l-3 2l-1 -4l2 -8l4 -8zM844 813l1 4l-2 8l-5 8l-3 2l-1 -4l2 -8l4 -8zM845 815l1 4l-2 8l-4 7l-4 2l-1 -4l2 -8l4 -7zM846 816l1 4l-2 8l-4 7l-4 2l-1 -4l3 -8l4 -7zM847 818l1 3l-2 8l-4 6l-3 2l-1 -3l2 -8l3 -6zM847 819l1 4l-1 7l-4 6l-3 2l-1 -4l2 -6l3 -7zM848 821l1 3l-2 6l-3 6l-2 2l-1 -3l1 -6l3 -6zM848 823l1 4l-3 8l-3 2l-1 -4l3 -7zM849 825l0 3l-2 6l-3 3l0 -4l2 -6zM849 826l0 3l-2 5l-2 2l0 -3l2 -5zM849 828l0 2l-1 3l-2 2l0 -2l1 -4zM838 808l2 2l2 1l2 2l2 3l1 2l1 3l1 2l0 3l0 3M839 812l2 2l2 2l2 2l2 2l1 2l1 2l0 2l0 2l0 2M837 820l2 2l2 2l2 2l1 1l2 2l1 1l1 1l1 1M834 828l1 1l2 2l2 2l1 1l2 2l2 0l2 0l1 -1l1 -2M830 830l2 2l1 2l2 1l2 2l2 1l2 0l3 -1l1 -1l2 -2M829 826l2 2l1 1l2 2l2 2l2 1l2 1l3 0l2 -1l2 -1M831 818l2 1l1 2l2 2l2 2l2 2l2 1l2 2l2 0l1 1M834 810l3 2l2 2l2 2l1 2l2 2l1 3l1 2l1 2l1 3M830 830l2 2l1 2l2 1l2 2l2 1l2 0l3 -1l1 -1l2 -2M838 808l2 2l2 1l2 2l2 3l1 2l1 3l1 2l0 3l0 3"/><path d="M833 499l-2 2l-6 1l-7 0l-5 -1l-3 -2l3 -2l5 -2l7 0l6 2zM834 502l-2 2l-6 1l-6 0l-6 -1l-2 -2l2 -2l6 -1l6 0l6 1zM835 505l-2 2l-5 1l-7 0l-5 -1l-2 -2l2 -2l5 -1l7 0l5 1zM836 509l-2 1l-5 2l-6 -1l-5 -1l-2 -2l2 -1l5 -2l6 1l6 1zM838 512l-2 2l-6 1l-6 0l-5 -1l-2 -2l2 -2l5 -1l6 0l6 1zM839 515l-2 2l-6 2l-7 0l-5 -2l-2 -2l2 -1l5 -2l7 0l6 2zM839 519l-2 2l-6 1l-7 0l-6 -1l-2 -2l2 -2l6 -1l7 0l6 1zM840 522l-3 3l-6 1l-8 0l-6 -1l-3 -3l3 -2l6 -1l8 0l6 1zM840 526l-2 2l-7 2l-9 0l-7 -2l-2 -2l2 -3l7 -1l9 0l7 2zM841 530l-3 2l-7 2l-9 -1l-7 -1l-3 -3l3 -2l7 -2l9 0l7 2zM841 533l-3 3l-7 1l-9 0l-8 -1l-2 -3l2 -3l8 -1l9 0l7 1zM841 537l-3 2l-7 2l-9 0l-8 -2l-3 -2l3 -3l7 -2l10 0l7 2zM841 540l-3 3l-7 2l-10 0l-7 -2l-3 -3l3 -2l7 -2l10 0l7 2zM842 544l-3 2l-8 2l-9 0l-8 -1l-3 -3l3 -3l8 -1l9 -1l8 2zM842 547l-3 3l-8 2l-9 0l-8 -2l-3 -2l3 -3l8 -2l9 0l8 2zM842 551l-3 3l-7 1l-9 0l-8 -1l-3 -3l3 -2l8 -2l9 0l7 1zM842 554l-2 3l-8 2l-8 0l-8 -2l-2 -2l2 -3l7 -1l9 -1l8 2zM842 558l-2 2l-7 2l-9 0l-7 -1l-2 -3l2 -2l7 -2l9 0l7 2zM843 562l-3 2l-7 1l-8 1l-7 -2l-2 -2l2 -3l7 -1l8 0l7 1zM843 565l-3 2l-6 2l-8 0l-7 -1l-2 -3l2 -2l7 -1l8 -1l6 2zM843 569l-2 2l-7 1l-7 0l-6 -1l-3 -2l3 -2l6 -2l7 0l6 1zM843 572l-2 2l-6 2l-7 0l-6 -2l-3 -2l3 -2l6 -1l7 0l6 1zM832 497l1 3l2 3l1 4l1 3l1 3l1 3l0 4l1 3l0 3l1 4l0 3l0 4l0 3l1 3l0 4l0 3l0 4l0 3l1 3l0 4l0 3l0 4l0 3M830 499l2 3l1 3l1 3l1 3l2 4l0 3l1 3l0 4l0 3l1 4l0 3l0 4l0 3l1 4l0 3l0 3l0 4l1 3l0 3l0 4l0 3l0 3l0 4M826 500l2 3l1 3l1 3l2 3l1 4l0 3l0 4l0 3l0 4l0 3l1 4l0 3l0 4l0 3l0 4l1 3l0 3l0 4l1 3l0 3l1 3l0 4l0 3M821 500l1 3l2 3l1 4l1 3l1 3l1 4l-1 3l0 4l-1 3l0 4l0 4l0 3l0 4l0 3l1 4l0 3l1 3l0 3l1 4l1 3l0 3l1 3l1 3M815 500l2 3l1 3l2 3l1 3l1 4l0 3l-1 4l-1 3l0 4l-1 3l0 4l0 3l0 4l0 4l0 3l1 3l1 4l0 3l1 3l1 3l1 4l1 3l1 3M811 499l2 3l1 3l2 3l1 3l1 3l0 4l-1 3l-1 4l-1 3l-1 4l0 3l-1 4l0 3l0 4l0 3l1 4l1 3l1 3l1 4l1 3l1 3l1 3l2 4M810 497l1 3l2 3l2 3l1 3l1 4l0 3l-2 4l-1 3l-1 3l-1 4l0 3l-1 4l0 3l0 4l0 3l1 4l1 3l1 3l1 4l2 3l1 3l1 4l1 3M811 495l2 3l1 4l2 3l1 3l1 3l0 4l-1 3l-1 3l-1 3l-1 3l0 4l-1 3l0 4l0 3l0 4l1 3l1 4l1 3l1 4l1 3l1 3l1 4l2 3M815 494l2 3l1 3l2 4l1 3l1 3l0 3l-1 4l-1 2l0 4l-1 3l0 3l0 4l0 3l0 4l0 3l1 4l0 3l1 4l1 3l1 4l1 3l1 4l1 3M821 494l1 3l2 3l1 3l2 3l0 4l1 3l-1 3l0 3l0 3l-1 3l0 4l0 3l0 3l0 4l1 3l0 4l1 3l0 4l1 3l1 4l0 3l1 4l1 4M826 494l2 3l1 3l1 4l2 3l1 3l0 3l0 3l0 4l0 3l0 3l1 3l0 4l0 3l0 3l0 4l1 3l0 4l0 3l1 4l0 3l1 4l0 3l0 4M830 495l2 4l1 3l1 3l2 3l1 3l0 4l1 3l0 3l0 3l1 4l0 3l0 3l0 4l1 3l0 3l0 4l0 3l1 4l0 3l0 4l0 3l0 4l0 3M810 497l1 3l2 3l2 3l1 3l1 4l0 3l-2 4l-1 3l-1 3l-1 4l0 3l-1 4l0 3l0 4l0 3l1 4l1 3l1 3l1 4l2 3l1 3l1 4l1 3M832 497l1 3l2 3l1 4l1 3l1 3l1 3l0 4l1 3l0 3l1 4l0 3l0 4l0 3l1 3l0 4l0 3l0 4l0 3l1 3l0 4l0 3l0 4l0 3"/><path d="M825 573l-2 0l-2 1l-1 -1l1 -1l2 0zM825 574l-1 1l-3 1l-1 -1l1 -1l3 0zM825 576l-1 1l-3 0l-1 0l1 -1l3 0zM825 578l-1 1l-2 0l-2 0l1 -1l3 0zM826 580l-2 1l-2 0l-2 0l2 -1l2 0zM826 582l-1 1l-3 0l-1 -1l1 0l2 -1zM826 584l-1 1l-3 0l-1 -1l1 0l3 -1zM826 586l-1 0l-2 1l-2 -1l1 -1l3 0zM826 588l-1 0l-2 0l-1 0l1 -1l2 0zM826 589l-1 1l-2 0l-1 0l1 -1l2 0zM826 591l-1 1l-1 0l-1 0l1 -1l1 0zM825 572l0 2l0 2l0 2l1 2l0 2l0 2l0 2l0 2l0 2l0 2l-1 1M823 573l1 2l0 2l0 2l0 2l1 2l0 2l0 2l0 2l0 2l0 2M821 573l0 2l0 2l0 2l1 2l0 2l0 2l1 2l0 2l0 2l1 2M819 572l1 2l0 2l0 2l0 2l1 2l0 2l0 2l1 2l0 2l1 2l1 1M821 571l0 2l0 3l0 2l1 2l0 2l0 2l1 2l0 2l0 2l1 2l0 1M823 571l0 2l1 2l0 2l0 2l0 2l1 2l0 2l0 3l0 2l0 2l0 1M819 572l1 2l0 2l0 2l0 2l1 2l0 2l0 2l1 2l0 2l1 2l1 1M825 572l0 2l0 2l0 2l1 2l0 2l0 2l0 2l0 2l0 2l0 2l-1 1"/><path d="M831 574l-1 1l-2 0l-1 0l1 -1l2 0zM832 576l-1 1l-3 0l-1 -1l1 0l2 -1zM832 577l-1 1l-3 0l-1 0l1 -1l3 0zM832 579l-1 0l-3 1l-1 -1l1 -1l3 0zM832 580l-1 1l-2 0l-2 0l1 -1l3 0zM832 582l-1 0l-2 1l-1 -1l1 -1l2 0zM832 583l-1 1l-2 0l-1 -1l1 0l2 0zM833 584l-2 1l-2 0l-1 0l1 -1l2 0zM833 586l-1 0l-2 1l-1 -1l1 0l2 -1zM833 587l-1 1l-2 0l-1 0l1 -1l2 0zM832 589l-2 0l-1 0l1 -1l2 0zM831 574l1 1l0 2l0 1l0 2l0 1l0 2l1 2l0 1l0 2l-1 1l-1 1M830 574l0 2l1 2l0 1l0 2l0 1l0 2l1 1l0 2l0 1l0 2l-1 0M828 575l0 1l0 2l0 1l1 2l0 1l0 2l0 1l1 2l0 1l0 2l1 0M827 574l0 2l0 1l0 2l0 1l1 2l0 2l0 1l1 2l0 1l1 1l1 1M828 574l0 1l0 2l0 1l0 2l1 1l0 2l0 1l1 2l0 1l0 2l1 1M830 573l0 2l1 1l0 2l0 1l0 2l0 2l0 1l1 2l0 1l0 2l-1 1M827 574l0 2l0 1l0 2l0 1l1 2l0 2l0 1l1 2l0 1l1 1l1 1M831 574l1 1l0 2l0 1l0 2l0 1l0 2l1 2l0 1l0 2l-1 1l-1 1"/><path d="M837 574l-1 1l-2 1l-1 -1l1 -1l2 0zM838 576l-1 1l-3 0l-1 0l1 -1l2 -1zM838 577l-1 1l-3 1l-1 -1l1 -1l3 0zM838 579l-1 1l-3 0l-1 0l1 -1l3 -1zM838 581l-1 0l-2 1l-2 -1l2 -1l2 0zM838 582l-1 1l-2 0l-1 0l1 -1l2 0zM838 584l-1 0l-2 0l-1 0l1 -1l2 0zM839 585l-2 1l-2 0l-1 -1l1 0l2 0zM839 587l-1 0l-2 0l-1 0l1 -1l2 0zM839 588l-1 1l-2 0l-1 -1l1 0l2 0zM838 590l-2 0l-1 0l1 -1l2 0zM837 574l1 1l0 2l0 2l0 1l0 2l0 2l1 1l0 2l0 2l-1 1l-1 1M836 574l0 2l1 2l0 1l0 2l0 2l0 1l1 2l0 2l0 1l0 2l-1 0M834 575l0 1l0 2l0 2l1 1l0 2l0 2l0 1l1 2l0 1l0 2l1 0M833 574l0 2l0 2l0 1l0 2l1 1l0 2l0 2l1 1l0 2l1 1l1 1M834 574l0 1l0 2l0 1l0 2l1 2l0 1l0 2l1 2l0 1l0 2l1 1M836 573l0 2l1 2l0 1l0 2l0 1l0 2l0 2l1 2l0 1l0 2l-1 1M833 574l0 2l0 2l0 1l0 2l1 1l0 2l0 2l1 1l0 2l1 1l1 1M837 574l1 1l0 2l0 2l0 1l0 2l0 2l1 1l0 2l0 2l-1 1l-1 1"/><path d="M843 571l-1 0l-2 0l-1 0l1 -1l2 0zM843 573l-1 0l-2 0l-2 -1l2 0l2 0zM843 574l-1 1l-2 0l-2 -1l2 -1l2 0zM843 576l-1 0l-3 0l-1 -1l1 0l3 0zM843 577l-1 1l-3 0l-1 -1l1 -1l3 1zM843 579l-1 0l-3 0l-1 0l1 -1l3 0zM843 580l-1 1l-3 0l-1 -1l1 0l3 0zM842 582l-1 1l-2 -1l-1 0l1 -1l2 0zM842 584l-1 0l-2 0l-1 -1l1 0l2 0zM842 585l-1 1l-2 0l-1 -1l1 0l2 0zM842 587l-1 0l-2 0l0 -1l2 0zM843 570l0 2l0 2l0 1l0 2l0 2l0 2l-1 1l0 2l0 2l-1 1l-1 1M842 571l0 1l0 2l0 2l0 2l0 1l0 2l-1 2l0 1l0 2l0 2l-1 0M840 571l0 1l0 2l-1 2l0 2l0 1l0 2l0 2l0 1l0 2l0 2l1 0M839 570l-1 2l0 1l0 2l0 2l0 2l0 1l0 2l0 2l0 2l1 1l1 1M840 569l0 2l0 2l0 1l-1 2l0 2l0 2l0 2l0 1l0 2l0 2l1 1M842 569l0 2l0 2l0 2l0 1l0 2l0 2l-1 2l0 1l0 2l0 2l-1 1M839 570l-1 2l0 1l0 2l0 2l0 2l0 1l0 2l0 2l0 2l1 1l1 1M843 570l0 2l0 2l0 1l0 2l0 2l0 2l-1 1l0 2l0 2l-1 1l-1 1"/><path d="M815 558l-2 0l-2 -1l0 -2l1 1l2 1zM814 559l-2 0l-2 -1l0 -1l1 0l2 1zM813 561l-1 0l-3 -1l0 -2l1 0l2 2zM812 562l-1 0l-2 -1l-1 -1l1 0l2 1zM811 564l-1 0l-2 -2l-1 -1l1 0l2 1zM810 565l-1 0l-2 -1l-1 -1l1 0l2 1zM809 566l-1 0l-2 -1l-1 -1l1 0l2 1zM808 568l-1 0l-2 -1l-1 -1l1 0l2 1zM807 569l-1 0l-2 -1l-1 -1l2 0l1 1zM806 570l-1 0l-2 -1l1 -1l1 1zM805 571l-1 0l-1 0l-1 -1l1 0l1 1zM815 557l-1 2l-1 1l-1 2l-1 1l-1 2l-1 1l-1 2l-1 1l-1 1l-2 2l-1 0M814 557l-1 2l-1 1l-1 2l-1 1l-1 2l-1 1l-1 2l-1 1l-1 1l-1 2l-1 0M812 556l-1 1l-1 2l-1 2l-1 1l-1 2l-1 1l-1 2l-1 1l-1 2l-1 1l1 1M811 555l-1 1l-1 2l-1 1l-1 2l-1 2l-1 1l-1 2l-1 1l-1 2l0 2l1 1M812 555l-1 1l-1 2l-1 2l-1 1l-1 2l-1 1l-1 2l-1 1l-1 2l-1 2l1 1M814 556l-1 2l-1 1l0 2l-1 1l-1 2l-2 1l-1 2l-1 1l-1 2l-1 1l-1 1M811 555l-1 1l-1 2l-1 1l-1 2l-1 2l-1 1l-1 2l-1 1l-1 2l0 2l1 1M815 557l-1 2l-1 1l-1 2l-1 1l-1 2l-1 1l-1 2l-1 1l-1 1l-2 2l-1 0"/></g>
</svg>
<span id="t0" class="t" style="left:23.2px;top:2px;font-size:12.00px;line-height:20px;color:#ffffff;font-family:'Liberation Sans',sans-serif;letter-spacing:-0.096px;">Autodesk Maya 2016: untitled*</span>
<span id="t1" class="t" style="left:9.5px;top:24px;font-size:10.90px;line-height:18px;color:#c8c8c8;font-family:'Liberation Sans',sans-serif;letter-spacing:-0.087px;">File</span>
<span id="t2" class="t" style="left:42px;top:24px;font-size:10.90px;line-height:18px;color:#c8c8c8;font-family:'Liberation Sans',sans-serif;letter-spacing:0.240px;">Edit</span>
<span id="t3" class="t" style="left:77.5px;top:24px;font-size:10.90px;line-height:18px;color:#c8c8c8;font-family:'Liberation Sans',sans-serif;letter-spacing:-0.141px;">Create</span>
<span id="t4" class="t" style="left:125px;top:24px;font-size:10.90px;line-height:18px;color:#c8c8c8;font-family:'Liberation Sans',sans-serif;letter-spacing:-0.056px;">Select</span>
<span id="t5" class="t" style="left:170.5px;top:24px;font-size:10.90px;line-height:18px;color:#c8c8c8;font-family:'Liberation Sans',sans-serif;letter-spacing:0.784px;">Modify</span>
<span id="t6" class="t" style="left:221.5px;top:24px;font-size:10.90px;line-height:18px;color:#c8c8c8;font-family:'Liberation Sans',sans-serif;letter-spacing:0.130px;">Display</span>
<span id="t7" class="t" style="left:273px;top:24px;font-size:10.90px;line-height:18px;color:#c8c8c8;font-family:'Liberation Sans',sans-serif;letter-spacing:0.719px;">Windows</span>
<span id="t8" class="t" style="left:337.5px;top:24px;font-size:10.90px;line-height:18px;color:#c8c8c8;font-family:'Liberation Sans',sans-serif;letter-spacing:0.120px;">Mesh</span>
<span id="t9" class="t" style="left:380.5px;top:24px;font-size:10.90px;line-height:18px;color:#c8c8c8;font-family:'Liberation Sans',sans-serif;letter-spacing:0.195px;">Edit Mesh</span>
<span id="t10" class="t" style="left:446.5px;top:24px;font-size:10.90px;line-height:18px;color:#c8c8c8;font-family:'Liberation Sans',sans-serif;letter-spacing:0.290px;">Mesh Tools</span>
<span id="t11" class="t" style="left:519.5px;top:24px;font-size:10.90px;line-height:18px;color:#c8c8c8;font-family:'Liberation Sans',sans-serif;letter-spacing:0.239px;">Mesh Display</span>
<span id="t12" class="t" style="left:602.5px;top:24px;font-size:10.90px;line-height:18px;color:#c8c8c8;font-family:'Liberation Sans',sans-serif;letter-spacing:-0.200px;">Curves</span>
<span id="t13" class="t" style="left:651.5px;top:24px;font-size:10.90px;line-height:18px;color:#c8c8c8;font-family:'Liberation Sans',sans-serif;letter-spacing:-0.069px;">Surfaces</span>
<span id="t14" class="t" style="left:709.5px;top:24px;font-size:10.90px;line-height:18px;color:#c8c8c8;font-family:'Liberation Sans',sans-serif;letter-spacing:0.359px;">Deform</span>
<span id="t15" class="t" style="left:762.5px;top:24px;font-size:10.90px;line-height:18px;color:#c8c8c8;font-family:'Liberation Sans',sans-serif;letter-spacing:-0.041px;">UV</span>
<span id="t16" class="t" style="left:792.5px;top:24px;font-size:10.90px;line-height:18px;color:#c8c8c8;font-family:'Liberation Sans',sans-serif;letter-spacing:0.154px;">Generate</span>
<span id="t17" class="t" style="left:854.5px;top:24px;font-size:10.90px;line-height:18px;color:#c8c8c8;font-family:'Liberation Sans',sans-serif;letter-spacing:-0.246px;">Cache</span>
<span id="t18" class="t" style="left:900.5px;top:24px;font-size:10.90px;line-height:18px;color:#c8c8c8;font-family:'Liberation Sans',sans-serif;letter-spacing:0.308px;">- 3DtoAll -</span>
<span id="t19" class="t" style="left:967.5px;top:24px;font-size:10.90px;line-height:18px;color:#c8c8c8;font-family:'Liberation Sans',sans-serif;letter-spacing:0.603px;">Arnold</span>
<span id="t20" class="t" style="left:1017.5px;top:24px;font-size:10.90px;line-height:18px;color:#c8c8c8;font-family:'Liberation Sans',sans-serif;letter-spacing:0.364px;">Redshift</span>
<span id="t21" class="t" style="left:1075.5px;top:24px;font-size:10.90px;line-height:18px;color:#c8c8c8;font-family:'Liberation Sans',sans-serif;letter-spacing:0.365px;">Help</span>
<span id="t22" class="t" style="left:21.5px;top:47px;font-size:11.50px;line-height:18px;color:#e6e6e6;font-family:'Liberation Sans',sans-serif;letter-spacing:0.404px;">Modeling</span>
<span id="t23" class="t" style="left:556.5px;top:47px;font-size:10.90px;line-height:18px;color:#c8c8c8;font-family:'Liberation Sans',sans-serif;letter-spacing:-0.035px;">No Live Surface</span>
<span id="t24" class="t" style="left:866.8px;top:48px;font-size:10.40px;line-height:17px;color:#b4b4b4;font-family:'Liberation Sans',sans-serif;letter-spacing:-0.628px;">X:</span>
<span id="t25" class="t" style="left:917.3px;top:48px;font-size:10.40px;line-height:17px;color:#b4b4b4;font-family:'Liberation Sans',sans-serif;letter-spacing:-0.050px;">Y:</span>
<span id="t26" class="t" style="left:967.5px;top:48px;font-size:10.40px;line-height:17px;color:#b4b4b4;font-family:'Liberation Sans',sans-serif;letter-spacing:-0.034px;">Z:</span>
<span id="t27" class="t" style="left:53.5px;top:76px;font-size:10.90px;line-height:18px;color:#c8c8c8;font-family:'Liberation Sans',sans-serif;letter-spacing:-0.035px;">Curves / Surfaces</span>
<span id="t28" class="t" style="left:164.5px;top:75px;font-size:10.90px;line-height:18px;color:#eeeeee;font-family:'Liberation Sans',sans-serif;letter-spacing:0.241px;">Polygons</span>
<span id="t29" class="t" style="left:235px;top:76px;font-size:10.90px;line-height:18px;color:#c8c8c8;font-family:'Liberation Sans',sans-serif;letter-spacing:0.523px;">Sculpting</span>
<span id="t30" class="t" style="left:308px;top:76px;font-size:10.90px;line-height:18px;color:#c8c8c8;font-family:'Liberation Sans',sans-serif;letter-spacing:0.677px;">Rigging</span>
<span id="t31" class="t" style="left:373px;top:76px;font-size:10.90px;line-height:18px;color:#c8c8c8;font-family:'Liberation Sans',sans-serif;letter-spacing:0.570px;">Animation</span>
<span id="t32" class="t" style="left:450px;top:76px;font-size:10.90px;line-height:18px;color:#c8c8c8;font-family:'Liberation Sans',sans-serif;letter-spacing:0.467px;">Rendering</span>
<span id="t33" class="t" style="left:528.5px;top:76px;font-size:10.90px;line-height:18px;color:#c8c8c8;font-family:'Liberation Sans',sans-serif;letter-spacing:-1.200px;">FX</span>
<span id="t34" class="t" style="left:564px;top:76px;font-size:10.90px;line-height:18px;color:#c8c8c8;font-family:'Liberation Sans',sans-serif;letter-spacing:0.010px;">FX Caching</span>
<span id="t35" class="t" style="left:645px;top:76px;font-size:10.90px;line-height:18px;color:#c8c8c8;font-family:'Liberation Sans',sans-serif;letter-spacing:0.294px;">Custom</span>
<span id="t36" class="t" style="left:708px;top:76px;font-size:10.90px;line-height:18px;color:#c8c8c8;font-family:'Liberation Sans',sans-serif;letter-spacing:-0.286px;">XGen</span>
<span id="t37" class="t" style="left:759.5px;top:76px;font-size:10.90px;line-height:18px;color:#c8c8c8;font-family:'Liberation Sans',sans-serif;letter-spacing:0.603px;">Arnold</span>
<span id="t38" class="t" style="left:54px;top:143px;font-size:10.90px;line-height:18px;color:#c8c8c8;font-family:'Liberation Sans',sans-serif;letter-spacing:0.526px;">View</span>
<span id="t39" class="t" style="left:94.3px;top:143px;font-size:10.90px;line-height:18px;color:#c8c8c8;font-family:'Liberation Sans',sans-serif;letter-spacing:0.455px;">Shading</span>
<span id="t40" class="t" style="left:152.3px;top:143px;font-size:10.90px;line-height:18px;color:#c8c8c8;font-family:'Liberation Sans',sans-serif;letter-spacing:0.649px;">Lighting</span>
<span id="t41" class="t" style="left:210px;top:143px;font-size:10.90px;line-height:18px;color:#c8c8c8;font-family:'Liberation Sans',sans-serif;letter-spacing:0.683px;">Show</span>
<span id="t42" class="t" style="left:254.3px;top:143px;font-size:10.90px;line-height:18px;color:#c8c8c8;font-family:'Liberation Sans',sans-serif;letter-spacing:0.185px;">Renderer</span>
<span id="t43" class="t" style="left:316px;top:143px;font-size:10.90px;line-height:18px;color:#c8c8c8;font-family:'Liberation Sans',sans-serif;letter-spacing:-0.123px;">Panels</span>
<span id="t44" class="t" style="left:710px;top:162px;font-size:10.30px;line-height:17px;color:#c8c8c8;font-family:'Liberation Sans',sans-serif;letter-spacing:0.318px;">0.00</span>
<span id="t45" class="t" style="left:773px;top:162px;font-size:10.30px;line-height:17px;color:#c8c8c8;font-family:'Liberation Sans',sans-serif;letter-spacing:0.151px;">1.00</span>
<span id="t46" class="t" style="left:833.4px;top:162px;font-size:10.40px;line-height:17px;color:#e6e6e6;font-family:'Liberation Sans',sans-serif;letter-spacing:-0.028px;">sRGB gamma</span>
<span id="t47" class="t" style="left:733.5px;top:892px;font-size:10.30px;line-height:17px;color:#ffffff;font-family:'Liberation Sans',sans-serif;letter-spacing:-0.262px;font-weight:bold;">persp</span>
<span id="t48" class="t" style="left:1640px;top:144px;font-size:9.50px;line-height:15px;color:#c8c8c8;font-family:'Liberation Sans',sans-serif;letter-spacing:-0.190px;">Attribute Editor</span>
<span id="t49" class="t" style="left:1479px;top:162px;font-size:10.90px;line-height:18px;color:#c8c8c8;font-family:'Liberation Sans',sans-serif;letter-spacing:0.016px;">List</span>
<span id="t50" class="t" style="left:1511px;top:162px;font-size:10.90px;line-height:18px;color:#c8c8c8;font-family:'Liberation Sans',sans-serif;letter-spacing:0.087px;">Selected</span>
<span id="t51" class="t" style="left:1569px;top:162px;font-size:10.90px;line-height:18px;color:#c8c8c8;font-family:'Liberation Sans',sans-serif;letter-spacing:0.082px;">Focus</span>
<span id="t52" class="t" style="left:1614px;top:162px;font-size:10.90px;line-height:18px;color:#c8c8c8;font-family:'Liberation Sans',sans-serif;letter-spacing:0.554px;">Attributes</span>
<span id="t53" class="t" style="left:1680px;top:162px;font-size:10.90px;line-height:18px;color:#c8c8c8;font-family:'Liberation Sans',sans-serif;letter-spacing:0.583px;">Show</span>
<span id="t54" class="t" style="left:1724px;top:162px;font-size:10.90px;line-height:18px;color:#c8c8c8;font-family:'Liberation Sans',sans-serif;letter-spacing:0.531px;">Help</span>
<span id="t55" class="t" style="left:1494px;top:202px;font-size:10.90px;line-height:18px;color:#c8c8c8;font-family:'Liberation Sans',sans-serif;letter-spacing:0.369px;">Make a selection to view attributes</span>
<span id="t56" class="t" style="left:1526.5px;top:889px;font-size:10.90px;line-height:18px;color:#858585;font-family:'Liberation Sans',sans-serif;letter-spacing:-0.256px;">Select</span>
<span id="t57" class="t" style="left:1644px;top:889px;font-size:10.90px;line-height:18px;color:#eeeeee;font-family:'Liberation Sans',sans-serif;letter-spacing:0.417px;">Load Attributes</span>
<span id="t58" class="t" style="left:1804.5px;top:889px;font-size:10.90px;line-height:18px;color:#858585;font-family:'Liberation Sans',sans-serif;letter-spacing:0.027px;">Copy Tab</span>
<span id="t59" class="t" style="left:1918.00px;top:153px;font-size:11.20px;line-height:18px;color:#eeeeee;font-family:'Liberation Sans',sans-serif;letter-spacing:0.400px;transform-origin:0 0;transform:rotate(90deg);">Attribute Editor</span>
<span id="t60" class="t" style="left:1918.00px;top:258px;font-size:11.20px;line-height:18px;color:#b0b0b0;font-family:'Liberation Sans',sans-serif;letter-spacing:0.011px;transform-origin:0 0;transform:rotate(90deg);">Channel Box / Layer Editor</span>
<span id="t61" class="t" style="left:27.5px;top:928px;font-size:10.50px;line-height:18px;color:#eeeeee;font-family:'Liberation Sans',sans-serif;">1</span>
<span id="t62" class="t" style="left:81.5px;top:915px;font-size:10.30px;line-height:17px;color:#9a9a9a;font-family:'Liberation Sans',sans-serif;">5</span>
<span id="t63" class="t" style="left:148.67391304347825px;top:915px;font-size:10.30px;line-height:17px;color:#9a9a9a;font-family:'Liberation Sans',sans-serif;letter-spacing:-0.009px;">10</span>
<span id="t64" class="t" style="left:215.84782608695653px;top:915px;font-size:10.30px;line-height:17px;color:#9a9a9a;font-family:'Liberation Sans',sans-serif;letter-spacing:-0.009px;">15</span>
<span id="t65" class="t" style="left:283.02173913043475px;top:915px;font-size:10.30px;line-height:17px;color:#9a9a9a;font-family:'Liberation Sans',sans-serif;letter-spacing:-0.009px;">20</span>
<span id="t66" class="t" style="left:350.19565217391306px;top:915px;font-size:10.30px;line-height:17px;color:#9a9a9a;font-family:'Liberation Sans',sans-serif;letter-spacing:-0.009px;">25</span>
<span id="t67" class="t" style="left:417.3695652173913px;top:915px;font-size:10.30px;line-height:17px;color:#9a9a9a;font-family:'Liberation Sans',sans-serif;letter-spacing:-0.009px;">30</span>
<span id="t68" class="t" style="left:484.54347826086956px;top:915px;font-size:10.30px;line-height:17px;color:#9a9a9a;font-family:'Liberation Sans',sans-serif;letter-spacing:-0.009px;">35</span>
<span id="t69" class="t" style="left:551.7173913043478px;top:915px;font-size:10.30px;line-height:17px;color:#9a9a9a;font-family:'Liberation Sans',sans-serif;letter-spacing:-0.009px;">40</span>
<span id="t70" class="t" style="left:618.8913043478261px;top:915px;font-size:10.30px;line-height:17px;color:#9a9a9a;font-family:'Liberation Sans',sans-serif;letter-spacing:-0.009px;">45</span>
<span id="t71" class="t" style="left:686.0652173913044px;top:915px;font-size:10.30px;line-height:17px;color:#9a9a9a;font-family:'Liberation Sans',sans-serif;letter-spacing:-0.009px;">50</span>
<span id="t72" class="t" style="left:753.2391304347826px;top:915px;font-size:10.30px;line-height:17px;color:#9a9a9a;font-family:'Liberation Sans',sans-serif;letter-spacing:-0.009px;">55</span>
<span id="t73" class="t" style="left:820.4130434782609px;top:915px;font-size:10.30px;line-height:17px;color:#9a9a9a;font-family:'Liberation Sans',sans-serif;letter-spacing:-0.009px;">60</span>
<span id="t74" class="t" style="left:887.5869565217391px;top:915px;font-size:10.30px;line-height:17px;color:#9a9a9a;font-family:'Liberation Sans',sans-serif;letter-spacing:-0.009px;">65</span>
<span id="t75" class="t" style="left:954.7608695652174px;top:915px;font-size:10.30px;line-height:17px;color:#9a9a9a;font-family:'Liberation Sans',sans-serif;letter-spacing:-0.009px;">70</span>
<span id="t76" class="t" style="left:1021.9347826086956px;top:915px;font-size:10.30px;line-height:17px;color:#9a9a9a;font-family:'Liberation Sans',sans-serif;letter-spacing:-0.009px;">75</span>
<span id="t77" class="t" style="left:1089.108695652174px;top:915px;font-size:10.30px;line-height:17px;color:#9a9a9a;font-family:'Liberation Sans',sans-serif;letter-spacing:-0.009px;">80</span>
<span id="t78" class="t" style="left:1156.2826086956522px;top:915px;font-size:10.30px;line-height:17px;color:#9a9a9a;font-family:'Liberation Sans',sans-serif;letter-spacing:-0.009px;">85</span>
<span id="t79" class="t" style="left:1223.4565217391305px;top:915px;font-size:10.30px;line-height:17px;color:#9a9a9a;font-family:'Liberation Sans',sans-serif;letter-spacing:-0.009px;">90</span>
<span id="t80" class="t" style="left:1290.6304347826087px;top:915px;font-size:10.30px;line-height:17px;color:#9a9a9a;font-family:'Liberation Sans',sans-serif;letter-spacing:-0.009px;">95</span>
<span id="t81" class="t" style="left:1357.804347826087px;top:915px;font-size:10.30px;line-height:17px;color:#9a9a9a;font-family:'Liberation Sans',sans-serif;letter-spacing:0.001px;">100</span>
<span id="t82" class="t" style="left:1424.9782608695652px;top:915px;font-size:10.30px;line-height:17px;color:#9a9a9a;font-family:'Liberation Sans',sans-serif;letter-spacing:0.001px;">105</span>
<span id="t83" class="t" style="left:1492.1521739130435px;top:915px;font-size:10.30px;line-height:17px;color:#9a9a9a;font-family:'Liberation Sans',sans-serif;letter-spacing:0.384px;">110</span>
<span id="t84" class="t" style="left:1559.3260869565217px;top:915px;font-size:10.30px;line-height:17px;color:#9a9a9a;font-family:'Liberation Sans',sans-serif;letter-spacing:0.384px;">115</span>
<span id="t85" class="t" style="left:1626.5px;top:915px;font-size:10.30px;line-height:17px;color:#9a9a9a;font-family:'Liberation Sans',sans-serif;letter-spacing:0.001px;">120</span>
<span id="t86" class="t" style="left:1657.5px;top:925px;font-size:10.50px;line-height:18px;color:#c8c8c8;font-family:'Liberation Sans',sans-serif;">1</span>
<span id="t87" class="t" style="left:23.5px;top:958px;font-size:10.50px;line-height:18px;color:#c8c8c8;font-family:'Liberation Sans',sans-serif;">1</span>
<span id="t88" class="t" style="left:99.5px;top:958px;font-size:10.50px;line-height:18px;color:#c8c8c8;font-family:'Liberation Sans',sans-serif;">1</span>
<span id="t89" class="t" style="left:197px;top:958px;font-size:10.50px;line-height:18px;color:#c8c8c8;font-family:'Liberation Sans',sans-serif;">1</span>
<span id="t90" class="t" style="left:907px;top:958px;font-size:10.50px;line-height:18px;color:#c8c8c8;font-family:'Liberation Sans',sans-serif;letter-spacing:0.234px;">120</span>
<span id="t91" class="t" style="left:1461px;top:958px;font-size:10.50px;line-height:18px;color:#c8c8c8;font-family:'Liberation Sans',sans-serif;letter-spacing:0.234px;">120</span>
<span id="t92" class="t" style="left:1537px;top:958px;font-size:10.50px;line-height:18px;color:#c8c8c8;font-family:'Liberation Sans',sans-serif;letter-spacing:0.234px;">200</span>
<span id="t93" class="t" style="left:1628px;top:958px;font-size:10.90px;line-height:18px;color:#c8c8c8;font-family:'Liberation Sans',sans-serif;letter-spacing:0.130px;">No Anim Layer</span>
<span id="t94" class="t" style="left:1757px;top:958px;font-size:10.90px;line-height:18px;color:#c8c8c8;font-family:'Liberation Sans',sans-serif;letter-spacing:0.124px;">No Character Set</span>
<span id="t95" class="t" style="left:28.5px;top:992px;font-size:10.00px;line-height:17px;color:#eeeeee;font-family:'Liberation Sans',sans-serif;letter-spacing:-0.031px;">MEL</span>
<span id="t96" class="t" style="left:29.3px;top:1020px;font-size:9.90px;line-height:17px;color:#c8c8c8;font-family:'Liberation Sans',sans-serif;letter-spacing:-0.108px;">Select Tool: select an object</span>
<span id="t97" class="t" style="left:745.2px;top:52px;font-size:7.50px;line-height:13px;color:#3a3a3a;font-family:'Liberation Sans',sans-serif;letter-spacing:-0.358px;font-weight:bold;">IPR</span>
<span id="t98" class="t" style="left:813.8px;top:167px;font-size:5.20px;line-height:8px;color:#254453;font-family:'Liberation Sans',sans-serif;letter-spacing:-0.181px;font-weight:bold;">ON</span>
<span id="t99" class="t" style="left:69px;top:860px;font-size:9.00px;line-height:14px;color:#00d000;font-family:'DejaVu Sans','Liberation Sans',sans-serif;font-weight:bold;">y</span>
<span id="t100" class="t" style="left:79px;top:881px;font-size:9.00px;line-height:14px;color:#ff0000;font-family:'DejaVu Sans','Liberation Sans',sans-serif;font-weight:bold;">x</span>
<span id="t101" class="t" style="left:57.6px;top:879px;font-size:9.00px;line-height:14px;color:#0000ff;font-family:'DejaVu Sans','Liberation Sans',sans-serif;font-weight:bold;">z</span>
<span id="t102" class="t" style="left:1897px;top:995px;font-size:9.50px;line-height:15px;color:#333;font-family:'Liberation Sans',sans-serif;letter-spacing:0.419px;font-weight:bold;">{;}</span>
</div>
</body></html>
